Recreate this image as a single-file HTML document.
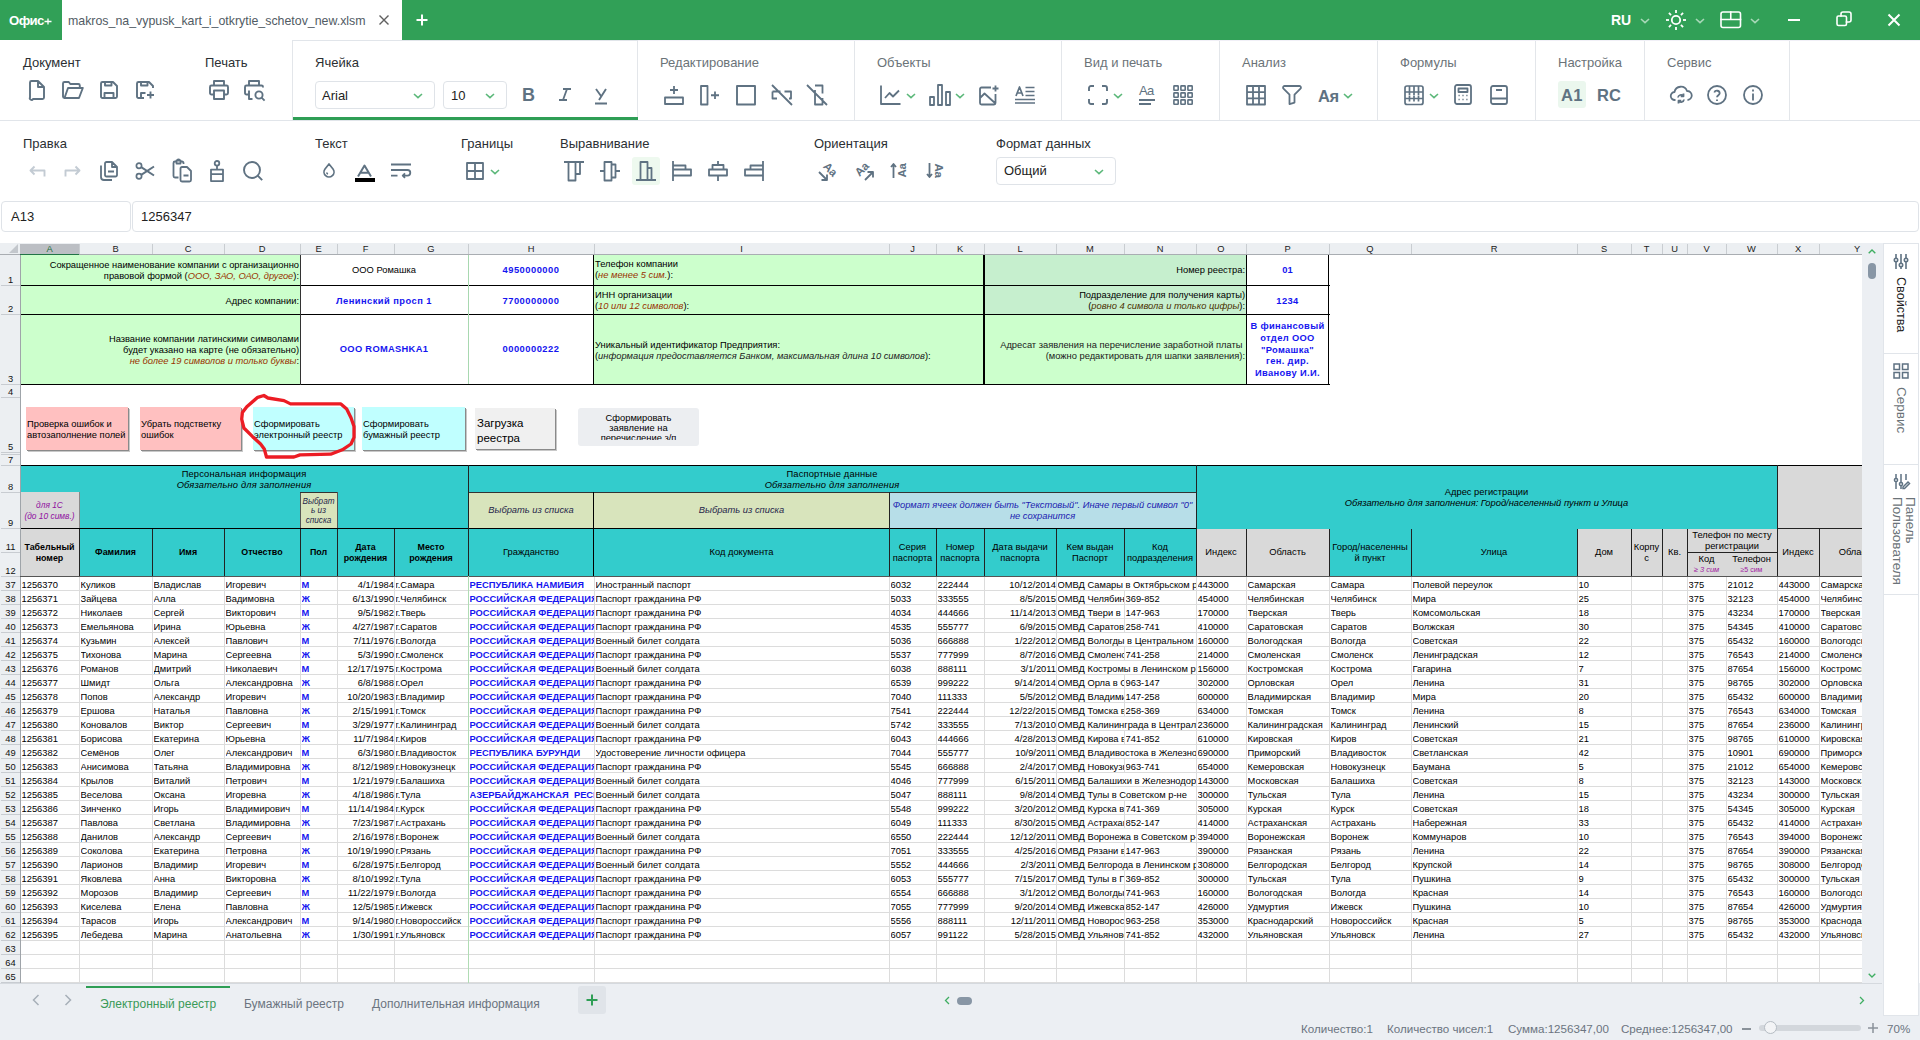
<!DOCTYPE html>
<html><head><meta charset="utf-8"><style>*{margin:0;padding:0}
body{width:1920px;height:1040px;overflow:hidden;position:relative;background:#fff;font-family:"Liberation Sans",sans-serif}
.a{position:absolute}
.t{position:absolute;white-space:nowrap}
svg.a{overflow:visible}
</style></head><body>
<div class="a" style="left:0px;top:0px;width:1920px;height:40px;background:#31a057"></div>
<div class="t" style="left:9px;top:11.5px;font-size:13.2px;font-weight:bold;color:#fff;line-height:18px;letter-spacing:-0.6px">Офис</div>
<svg class="a" style="left:44px;top:18px;" width="8" height="7" viewBox="0 0 8 7" fill="none" stroke="#5f7282" stroke-width="2" stroke-linecap="square"><path d="M4 0.5V6.5M0.5 3.5H7.5" stroke="#fff" stroke-width="1.3" stroke-linecap="butt"/></svg>
<div class="a" style="left:62px;top:0px;width:340px;height:40px;background:#fff"></div>
<div class="t" style="left:68px;top:12px;font-size:13px;color:#515b64;line-height:17px;transform-origin:0 0;transform:scaleX(0.951)">makros_na_vypusk_kart_i_otkrytie_schetov_new.xlsm</div>
<svg class="a" style="left:379px;top:15px;" width="10" height="10" viewBox="0 0 10 10" fill="none" stroke="#5f7282" stroke-width="2" stroke-linecap="square"><path d="M1 1L9 9M9 1L1 9" stroke="#606060" stroke-width="1.4"/></svg>
<svg class="a" style="left:416px;top:14px;" width="12" height="12" viewBox="0 0 12 12" fill="none" stroke="#5f7282" stroke-width="2" stroke-linecap="square"><path d="M6 0.5V11.5M0.5 6H11.5" stroke="#fff" stroke-width="2" stroke-linecap="butt"/></svg>
<div class="t" style="left:1611px;top:11px;font-size:14px;font-weight:bold;color:#fff;line-height:18px">RU</div>
<svg class="a" style="left:1640px;top:18px" width="10" height="6" viewBox="0 0 10 6"><path d="M1 1 L5 4.6 L9 1" fill="none" stroke="#a8d8b8" stroke-width="1.6"/></svg>
<svg class="a" style="left:1665px;top:9px;" width="22" height="22" viewBox="0 0 22 22" fill="none" stroke="#5f7282" stroke-width="2" stroke-linecap="square"><circle cx="11" cy="11" r="4.2" stroke="#fff" stroke-width="1.8"/><path d="M18.00 11.00L21.00 11.00" stroke="#fff" stroke-width="1.8" stroke-linecap="butt"/><path d="M15.95 15.95L18.07 18.07" stroke="#fff" stroke-width="1.8" stroke-linecap="butt"/><path d="M11.00 18.00L11.00 21.00" stroke="#fff" stroke-width="1.8" stroke-linecap="butt"/><path d="M6.05 15.95L3.93 18.07" stroke="#fff" stroke-width="1.8" stroke-linecap="butt"/><path d="M4.00 11.00L1.00 11.00" stroke="#fff" stroke-width="1.8" stroke-linecap="butt"/><path d="M6.05 6.05L3.93 3.93" stroke="#fff" stroke-width="1.8" stroke-linecap="butt"/><path d="M11.00 4.00L11.00 1.00" stroke="#fff" stroke-width="1.8" stroke-linecap="butt"/><path d="M15.95 6.05L18.07 3.93" stroke="#fff" stroke-width="1.8" stroke-linecap="butt"/></svg>
<svg class="a" style="left:1695px;top:18px" width="10" height="6" viewBox="0 0 10 6"><path d="M1 1 L5 4.6 L9 1" fill="none" stroke="#a8d8b8" stroke-width="1.6"/></svg>
<svg class="a" style="left:1720px;top:11px;" width="22" height="18" viewBox="0 0 22 18" fill="none" stroke="#5f7282" stroke-width="2" stroke-linecap="square"><rect x="1" y="1" width="19.5" height="15.5" rx="2" stroke="#fff" stroke-width="1.6"/><path d="M1 8.5H20.5M10.75 1V8.5" stroke="#fff" stroke-width="1.6"/></svg>
<svg class="a" style="left:1750px;top:18px" width="10" height="6" viewBox="0 0 10 6"><path d="M1 1 L5 4.6 L9 1" fill="none" stroke="#a8d8b8" stroke-width="1.6"/></svg>
<div class="a" style="left:1788px;top:19px;width:12px;height:2px;background:#fff"></div>
<svg class="a" style="left:1836px;top:11px;" width="16" height="16" viewBox="0 0 16 16" fill="none" stroke="#5f7282" stroke-width="2" stroke-linecap="square"><rect x="1" y="5" width="9.5" height="9.5" rx="1.5" stroke="#fff" stroke-width="1.6"/><path d="M5 5V3a2 2 0 0 1 2-2h6a2 2 0 0 1 2 2v6a2 2 0 0 1-2 2h-2.5" stroke="#fff" stroke-width="1.6"/></svg>
<svg class="a" style="left:1887px;top:13px;" width="14" height="14" viewBox="0 0 14 14" fill="none" stroke="#5f7282" stroke-width="2" stroke-linecap="square"><path d="M1.5 1.5L12.5 12.5M12.5 1.5L1.5 12.5" stroke="#fff" stroke-width="2" stroke-linecap="butt"/></svg>
<div class="a" style="left:402px;top:40px;width:1518px;height:1px;background:#f1f0f7"></div>
<div class="a" style="left:292px;top:40px;width:346px;height:1px;background:#e1e5ea"></div>
<div class="a" style="left:0px;top:120px;width:1920px;height:1px;background:#e1e5ea"></div>
<div class="a" style="left:854px;top:41px;width:1px;height:79px;background:#e3e6ea"></div>
<div class="a" style="left:1061px;top:41px;width:1px;height:79px;background:#e3e6ea"></div>
<div class="a" style="left:1219px;top:41px;width:1px;height:79px;background:#e3e6ea"></div>
<div class="a" style="left:1377px;top:41px;width:1px;height:79px;background:#e3e6ea"></div>
<div class="a" style="left:1535px;top:41px;width:1px;height:79px;background:#e3e6ea"></div>
<div class="a" style="left:1644px;top:41px;width:1px;height:79px;background:#e3e6ea"></div>
<div class="a" style="left:1789px;top:41px;width:1px;height:79px;background:#e3e6ea"></div>
<div class="a" style="left:292px;top:41px;width:1px;height:79px;background:#e3e6ea"></div>
<div class="a" style="left:637px;top:41px;width:1px;height:79px;background:#e3e6ea"></div>
<div class="a" style="left:293px;top:117px;width:345px;height:3px;background:#2e9e55"></div>
<div class="t" style="left:23px;top:55px;font-size:13px;color:#2b2f33;line-height:16px">Документ</div>
<div class="t" style="left:205px;top:55px;font-size:13px;color:#2b2f33;line-height:16px">Печать</div>
<div class="t" style="left:315px;top:55px;font-size:13px;color:#2b2f33;line-height:16px">Ячейка</div>
<div class="t" style="left:660px;top:55px;font-size:13px;color:#6b7378;line-height:16px">Редактирование</div>
<div class="t" style="left:877px;top:55px;font-size:13px;color:#6b7378;line-height:16px">Объекты</div>
<div class="t" style="left:1084px;top:55px;font-size:13px;color:#6b7378;line-height:16px">Вид и печать</div>
<div class="t" style="left:1242px;top:55px;font-size:13px;color:#6b7378;line-height:16px">Анализ</div>
<div class="t" style="left:1400px;top:55px;font-size:13px;color:#6b7378;line-height:16px">Формулы</div>
<div class="t" style="left:1558px;top:55px;font-size:13px;color:#6b7378;line-height:16px">Настройка</div>
<div class="t" style="left:1667px;top:55px;font-size:13px;color:#6b7378;line-height:16px">Сервис</div>
<div class="t" style="left:23px;top:136px;font-size:13px;color:#2b2f33;line-height:16px">Правка</div>
<div class="t" style="left:315px;top:136px;font-size:13px;color:#2b2f33;line-height:16px">Текст</div>
<div class="t" style="left:461px;top:136px;font-size:13px;color:#2b2f33;line-height:16px">Границы</div>
<div class="t" style="left:560px;top:136px;font-size:13px;color:#2b2f33;line-height:16px">Выравнивание</div>
<div class="t" style="left:814px;top:136px;font-size:13px;color:#2b2f33;line-height:16px">Ориентация</div>
<div class="t" style="left:996px;top:136px;font-size:13px;color:#2b2f33;line-height:16px">Формат данных</div>
<svg class="a" style="left:29px;top:80px" width="16" height="20" viewBox="0 0 16 20" fill="none" stroke="#5f7282" stroke-width="1.9" stroke-linejoin="round" stroke-linecap="butt" ><path d="M2.5 1h6.5l6 6v10.5a1.5 1.5 0 0 1-1.5 1.5h-9.5A1.5 1.5 0 0 1 1 17.5v-15A1.5 1.5 0 0 1 2.5 1z M9 1v6h6"/></svg>
<svg class="a" style="left:62px;top:81px" width="22" height="18" viewBox="0 0 22 18" fill="none" stroke="#5f7282" stroke-width="1.9" stroke-linejoin="round" stroke-linecap="butt" ><path d="M1 15.5v-13A1.5 1.5 0 0 1 2.5 1h4.3l1.5 2h8a1.5 1.5 0 0 1 1.5 1.5V7 M2.5 17h14.5l3.8-10H6z M1 15.5a1.5 1.5 0 0 0 1.5 1.5"/></svg>
<svg class="a" style="left:100px;top:81px" width="18" height="18" viewBox="0 0 18 18" fill="none" stroke="#5f7282" stroke-width="1.9" stroke-linejoin="round" stroke-linecap="butt" ><path d="M1 2.5A1.5 1.5 0 0 1 2.5 1h10.5l4 4v10.5a1.5 1.5 0 0 1-1.5 1.5h-13A1.5 1.5 0 0 1 1 15.5z M5 1v3.5h6.5V1 M4.5 17v-5h9v5"/></svg>
<svg class="a" style="left:136px;top:81px" width="19" height="18" viewBox="0 0 19 18" fill="none" stroke="#5f7282" stroke-width="1.9" stroke-linejoin="round" stroke-linecap="butt" ><path d="M8 17H2.5A1.5 1.5 0 0 1 1 15.5v-13A1.5 1.5 0 0 1 2.5 1h10.5l4 4v2 M5 1v3.5h6.5V1 M5 17v-5h4.5 M14.5 10.5v7 M11 14h7"/></svg>
<svg class="a" style="left:209px;top:80px" width="20" height="20" viewBox="0 0 20 20" fill="none" stroke="#5f7282" stroke-width="1.9" stroke-linejoin="round" stroke-linecap="butt" ><path d="M5 5.5V1h10v4.5 M5 14.5H2.5A1.5 1.5 0 0 1 1 13V7a1.5 1.5 0 0 1 1.5-1.5h15A1.5 1.5 0 0 1 19 7v6a1.5 1.5 0 0 1-1.5 1.5H15 M5 10.5h10V19H5z"/></svg>
<svg class="a" style="left:244px;top:80px" width="22" height="22" viewBox="0 0 22 22" fill="none" stroke="#5f7282" stroke-width="1.9" stroke-linejoin="round" stroke-linecap="butt" ><path d="M5 5.5V1h10v4.5 M5 14.5H2.5A1.5 1.5 0 0 1 1 13V7a1.5 1.5 0 0 1 1.5-1.5h15A1.5 1.5 0 0 1 19 7v0.5 M5 10.5V19h3.5"/><circle cx="15" cy="15" r="3.6"/><path d="M17.6 17.6l3 3"/></svg>
<div class="a" style="left:315px;top:81px;width:120px;height:28px;border:1px solid #dfe3e8;border-radius:4px;box-sizing:border-box;background:#fff"></div>
<div class="t" style="left:322px;top:88px;font-size:13px;color:#222;line-height:16px">Arial</div>
<svg class="a" style="left:413px;top:93px" width="10" height="6" viewBox="0 0 10 6"><path d="M1 1 L5 4.6 L9 1" fill="none" stroke="#5cb87a" stroke-width="1.6"/></svg>
<div class="a" style="left:443px;top:81px;width:64px;height:28px;border:1px solid #dfe3e8;border-radius:4px;box-sizing:border-box;background:#fff"></div>
<div class="t" style="left:451px;top:88px;font-size:13px;color:#222;line-height:16px">10</div>
<svg class="a" style="left:485px;top:93px" width="10" height="6" viewBox="0 0 10 6"><path d="M1 1 L5 4.6 L9 1" fill="none" stroke="#5cb87a" stroke-width="1.6"/></svg>
<div class="t" style="left:522px;top:85px;font-size:18px;font-weight:bold;color:#5f7282;line-height:20px">B</div>
<svg class="a" style="left:558px;top:88px" width="14" height="13" viewBox="0 0 14 13" fill="none" stroke="#5f7282" stroke-width="1.8" stroke-linejoin="round" stroke-linecap="butt" ><path d="M5 1h8 M1 12h8 M9 1L5 12"/></svg>
<svg class="a" style="left:594px;top:88px" width="14" height="17" viewBox="0 0 14 17" fill="none" stroke="#5f7282" stroke-width="1.9" stroke-linejoin="round" stroke-linecap="butt" ><path d="M2 1l5 7 M12 1L5 12 M1 15.5h12"/></svg>
<svg class="a" style="left:664px;top:85px" width="20" height="20" viewBox="0 0 20 20" fill="none" stroke="#5f7282" stroke-width="1.8" stroke-linejoin="round" stroke-linecap="butt" ><path d="M10 1v8 M6 5h8 M1 12.5h18v6.5H1z"/></svg>
<svg class="a" style="left:700px;top:85px" width="20" height="20" viewBox="0 0 20 20" fill="none" stroke="#5f7282" stroke-width="1.8" stroke-linejoin="round" stroke-linecap="butt" ><path d="M1 1h6.5v18.5H1z M15 6.5v7.5 M11 10.25h8"/></svg>
<svg class="a" style="left:736px;top:85px" width="20" height="20" viewBox="0 0 20 20" fill="none" stroke="#5f7282" stroke-width="1.9" stroke-linejoin="round" stroke-linecap="butt" ><path d="M1 1h18v18.5H1z"/></svg>
<svg class="a" style="left:771px;top:84px" width="22" height="22" viewBox="0 0 22 22" fill="none" stroke="#5f7282" stroke-width="1.8" stroke-linejoin="round" stroke-linecap="butt" ><path d="M1.5 7.5h8 M13.5 7.5h6.5v7h-2 M6 14.5H1.5v-7 M1 1l20 20"/></svg>
<svg class="a" style="left:806px;top:84px" width="22" height="22" viewBox="0 0 22 22" fill="none" stroke="#5f7282" stroke-width="1.8" stroke-linejoin="round" stroke-linecap="butt" ><path d="M9 1.5h7.5v8 M16.5 14v6.5H9V6 M1 1l20 20"/></svg>
<svg class="a" style="left:880px;top:85px" width="21" height="20" viewBox="0 0 21 20" fill="none" stroke="#5f7282" stroke-width="1.8" stroke-linejoin="round" stroke-linecap="butt" ><path d="M1 0.5v18.5h19.5 M5 13l4.5-5 3.5 3.5 6-6"/></svg>
<svg class="a" style="left:906px;top:93px" width="10" height="6" viewBox="0 0 10 6"><path d="M1 1 L5 4.6 L9 1" fill="none" stroke="#5cb87a" stroke-width="1.6"/></svg>
<svg class="a" style="left:929px;top:84px" width="22" height="22" viewBox="0 0 22 22" fill="none" stroke="#5f7282" stroke-width="1.8" stroke-linejoin="round" stroke-linecap="butt" ><path d="M1 13h4v8H1z M9 1h4v20H9z M17 8h4v13h-4z"/></svg>
<svg class="a" style="left:955px;top:93px" width="10" height="6" viewBox="0 0 10 6"><path d="M1 1 L5 4.6 L9 1" fill="none" stroke="#5cb87a" stroke-width="1.6"/></svg>
<svg class="a" style="left:979px;top:85px" width="21" height="20" viewBox="0 0 21 20" fill="none" stroke="#5f7282" stroke-width="1.8" stroke-linejoin="round" stroke-linecap="butt" ><path d="M12 2.5H2.5A1.5 1.5 0 0 0 1 4v14a1.5 1.5 0 0 0 1.5 1.5H15a1.5 1.5 0 0 0 1.5-1.5V9 M1 13l4.5-4.5 11 10 M16.5 0.5v6 M13.5 3.5h6"/></svg>
<svg class="a" style="left:1015px;top:86px" width="20" height="18" viewBox="0 0 20 18" fill="none" stroke="#5f7282" stroke-width="1.7" stroke-linejoin="round" stroke-linecap="butt" ><path d="M1 10l3.5-9 3.5 9 M2.2 7h4.6 M10.5 1.5h9 M10.5 5.5h9 M10.5 9.5h9 M0 13.5h20 M0 17h20"/></svg>
<svg class="a" style="left:1088px;top:85px" width="20" height="20" viewBox="0 0 20 20" fill="none" stroke="#5f7282" stroke-width="1.9" stroke-linejoin="round" stroke-linecap="butt" ><path d="M1 6V3a2 2 0 0 1 2-2h3 M14 1h3a2 2 0 0 1 2 2v3 M19 14v3a2 2 0 0 1-2 2h-3 M6 19H3a2 2 0 0 1-2-2v-3"/></svg>
<svg class="a" style="left:1113px;top:93px" width="10" height="6" viewBox="0 0 10 6"><path d="M1 1 L5 4.6 L9 1" fill="none" stroke="#5cb87a" stroke-width="1.6"/></svg>
<div class="t" style="left:1139px;top:84px;font-size:13px;color:#5f7282;line-height:14px;letter-spacing:-0.6px">Aa</div>
<div class="a" style="left:1139px;top:99px;width:16px;height:1.7px;background:#5f7282"></div>
<div class="a" style="left:1139px;top:103px;width:12px;height:1.7px;background:#5f7282"></div>
<svg class="a" style="left:1173px;top:85px" width="20" height="20" viewBox="0 0 20 20" fill="none" stroke="#5f7282" stroke-width="1.6" stroke-linejoin="round" stroke-linecap="butt" ><rect x="0.9" y="0.9" width="4.3" height="4.3" rx="0.5"/><rect x="0.9" y="7.9" width="4.3" height="4.3" rx="0.5"/><rect x="0.9" y="14.9" width="4.3" height="4.3" rx="0.5"/><rect x="7.9" y="0.9" width="4.3" height="4.3" rx="0.5"/><rect x="7.9" y="7.9" width="4.3" height="4.3" rx="0.5"/><rect x="7.9" y="14.9" width="4.3" height="4.3" rx="0.5"/><rect x="14.9" y="0.9" width="4.3" height="4.3" rx="0.5"/><rect x="14.9" y="7.9" width="4.3" height="4.3" rx="0.5"/><rect x="14.9" y="14.9" width="4.3" height="4.3" rx="0.5"/></svg>
<svg class="a" style="left:1246px;top:85px" width="20" height="20" viewBox="0 0 20 20" fill="none" stroke="#5f7282" stroke-width="1.8" stroke-linejoin="round" stroke-linecap="butt" stroke-linejoin="miter"><path d="M1 1h18v18.5H1z M1 7.2h18 M1 13.4h18 M7 1v18.5 M13 1v18.5"/></svg>
<svg class="a" style="left:1282px;top:85px" width="20" height="20" viewBox="0 0 20 20" fill="none" stroke="#5f7282" stroke-width="1.8" stroke-linejoin="round" stroke-linecap="butt" ><path d="M2.5 1h15a1.5 1.5 0 0 1 1 2.6l-6 6v8l-5 1.5v-9.5l-6-6A1.5 1.5 0 0 1 2.5 1z"/></svg>
<div class="t" style="left:1318px;top:86.5px;font-size:16.5px;font-weight:bold;color:#5f7282;line-height:18px;letter-spacing:-0.3px">Ая</div>
<svg class="a" style="left:1343px;top:93px" width="10" height="6" viewBox="0 0 10 6"><path d="M1 1 L5 4.6 L9 1" fill="none" stroke="#5cb87a" stroke-width="1.6"/></svg>
<svg class="a" style="left:1404px;top:85px" width="20" height="20" viewBox="0 0 20 20" fill="none" stroke="#5f7282" stroke-width="1.7" stroke-linejoin="round" stroke-linecap="butt" ><rect x="1" y="1" width="18" height="18.5" rx="2"/><path d="M1 7h18 M1 13.5h18 M5.5 1v9 M10 1v9 M14.5 1v9 M5.5 10.5v6 M10 10.5v6 M14.5 10.5v6"/></svg>
<svg class="a" style="left:1429px;top:93px" width="10" height="6" viewBox="0 0 10 6"><path d="M1 1 L5 4.6 L9 1" fill="none" stroke="#5cb87a" stroke-width="1.6"/></svg>
<svg class="a" style="left:1454px;top:84px" width="18" height="21" viewBox="0 0 18 21" fill="none" stroke="#5f7282" stroke-width="1.8" stroke-linejoin="round" stroke-linecap="butt" ><rect x="1" y="1" width="16" height="19" rx="2"/><path d="M4.5 4.5h9v3.5h-9z"/><path d="M4.5 11.5h1.2 M8.4 11.5h1.2 M12.3 11.5h1.2 M4.5 15.5h1.2 M8.4 15.5h1.2 M12.3 15.5h1.2" stroke-width="1.7"/></svg>
<svg class="a" style="left:1490px;top:85px" width="18" height="20" viewBox="0 0 18 20" fill="none" stroke="#5f7282" stroke-width="1.8" stroke-linejoin="round" stroke-linecap="butt" ><rect x="1" y="1" width="16" height="18" rx="2"/><path d="M1 13.5h16 M6 5h6"/></svg>
<div class="a" style="left:1558px;top:81px;width:28px;height:27px;background:#ebf7ee;border-radius:3px"></div>
<div class="t" style="left:1561px;top:86px;font-size:16.5px;font-weight:bold;color:#5f7282;line-height:18px;letter-spacing:0.3px">A1</div>
<div class="t" style="left:1597px;top:86px;font-size:16.5px;font-weight:bold;color:#5f7282;line-height:18px">RC</div>
<svg class="a" style="left:1670px;top:85px" width="22" height="19" viewBox="0 0 22 19" fill="none" stroke="#5f7282" stroke-width="1.8" stroke-linejoin="round" stroke-linecap="butt" ><path d="M5.5 15H5a4 4 0 0 1-0.5-8A6.5 6.5 0 0 1 17 6a4.5 4.5 0 0 1 0.5 9 M8 12.5a3 3 0 0 1 5.3-1.5 M13.5 8.5v2.8h-2.8 M14 14.5a3 3 0 0 1-5.3 1.5 M8.5 18.5v-2.8h2.8"/></svg>
<svg class="a" style="left:1707px;top:85px" width="20" height="20" viewBox="0 0 20 20" fill="none" stroke="#5f7282" stroke-width="1.8" stroke-linejoin="round" stroke-linecap="butt" ><circle cx="10" cy="10" r="9"/><path d="M7.3 7.5a2.8 2.8 0 0 1 5.4 0.8c0 1.8-2.7 2.2-2.7 4 M10 14.5v1.5"/></svg>
<svg class="a" style="left:1743px;top:85px" width="20" height="20" viewBox="0 0 20 20" fill="none" stroke="#5f7282" stroke-width="1.8" stroke-linejoin="round" stroke-linecap="butt" ><circle cx="10" cy="10" r="9"/><path d="M10 8.5v7 M10 4.5v2"/></svg>
<svg class="a" style="left:29px;top:165px" width="17" height="12" viewBox="0 0 17 12" fill="none" stroke="#c3cbd3" stroke-width="1.9" stroke-linejoin="round" stroke-linecap="butt" ><path d="M15.5 11.5V5.5H2 M5.5 1.5L1.5 5.5l4 4"/></svg>
<svg class="a" style="left:64px;top:165px" width="17" height="12" viewBox="0 0 17 12" fill="none" stroke="#c3cbd3" stroke-width="1.9" stroke-linejoin="round" stroke-linecap="butt" ><path d="M1.5 11.5V5.5H15 M11.5 1.5l4 4-4 4"/></svg>
<svg class="a" style="left:100px;top:161px" width="18" height="20" viewBox="0 0 18 20" fill="none" stroke="#5f7282" stroke-width="1.8" stroke-linejoin="round" stroke-linecap="butt" ><path d="M1 4.5V16a3 3 0 0 0 3 3h8 M5 2.5A1.5 1.5 0 0 1 6.5 1H12l5 5v8a1.5 1.5 0 0 1-1.5 1.5h-9A1.5 1.5 0 0 1 5 14z M12 1v5h5 M8 10.5h6"/></svg>
<svg class="a" style="left:135px;top:162px" width="20" height="18" viewBox="0 0 20 18" fill="none" stroke="#5f7282" stroke-width="1.7" stroke-linejoin="round" stroke-linecap="butt" ><circle cx="4" cy="3.8" r="2.6"/><circle cx="4" cy="14.2" r="2.6"/><path d="M6.2 5.2L19 13.5 M6.2 12.8L19 4.5" stroke-width="2"/></svg>
<svg class="a" style="left:170px;top:159px" width="22" height="24" viewBox="0 0 22 24" fill="none" stroke="#5f7282" stroke-width="1.8" stroke-linejoin="round" stroke-linecap="butt" ><path d="M13.5 5V4a1.5 1.5 0 0 0-1.5-1.5h-1.5a2 2 0 0 0-4 0H5A1.5 1.5 0 0 0 3.5 4v13A1.5 1.5 0 0 0 5 18.5h3.5 M6.5 1.5h4v3h-4z M10.5 9.5A1.5 1.5 0 0 1 12 8h5l4 4v9a1.5 1.5 0 0 1-1.5 1.5H12a1.5 1.5 0 0 1-1.5-1.5z M13.5 16.5h5"/></svg>
<svg class="a" style="left:210px;top:160px" width="14" height="22" viewBox="0 0 14 22" fill="none" stroke="#5f7282" stroke-width="1.8" stroke-linejoin="round" stroke-linecap="butt" ><circle cx="7" cy="3.3" r="2.3"/><path d="M7 5.6v4 M1 9.6h12v4.5H1z M1 14.1v7h12v-7"/></svg>
<svg class="a" style="left:243px;top:161px" width="20" height="20" viewBox="0 0 20 20" fill="none" stroke="#5f7282" stroke-width="1.9" stroke-linejoin="round" stroke-linecap="butt" ><circle cx="9" cy="9" r="8"/><path d="M14.7 14.7l4.5 4.5"/></svg>
<svg class="a" style="left:323px;top:163px" width="12" height="14" viewBox="0 0 12 14" fill="none" stroke="#5f7282" stroke-width="1.7" stroke-linejoin="round" stroke-linecap="butt" ><path d="M6 1L2 6a5 5 0 1 0 8 0z M5 11a1.6 1.6 0 0 1-1.2-1.5"/></svg>
<svg class="a" style="left:357px;top:165px" width="15" height="12" viewBox="0 0 15 12" fill="none" stroke="#5f7282" stroke-width="2" stroke-linejoin="round" stroke-linecap="butt" ><path d="M1 11.5L7.5 0.5 14 11.5 M3.3 7.7h8.4"/></svg>
<div class="a" style="left:355px;top:178px;width:20px;height:4px;background:#000"></div>
<svg class="a" style="left:391px;top:163px" width="20" height="15" viewBox="0 0 20 15" fill="none" stroke="#5f7282" stroke-width="1.8" stroke-linejoin="round" stroke-linecap="butt" ><path d="M0 1.5h20 M0 7h16.5a2.8 2.8 0 0 1 0 5.6H12 M0 12.6h6.5 M14 10.3l-2.3 2.3 2.3 2.3"/></svg>
<svg class="a" style="left:466px;top:162px" width="18" height="18" viewBox="0 0 18 18" fill="none" stroke="#5f7282" stroke-width="1.8" stroke-linejoin="round" stroke-linecap="butt" stroke-linejoin="miter"><path d="M1 1h16v16H1z M1 9h16 M9 1v16"/></svg>
<svg class="a" style="left:490px;top:169px" width="10" height="6" viewBox="0 0 10 6"><path d="M1 1 L5 4.6 L9 1" fill="none" stroke="#5cb87a" stroke-width="1.6"/></svg>
<div class="a" style="left:632px;top:157px;width:28px;height:28px;background:#eef9ef;border-radius:3px"></div>
<svg class="a" style="left:564px;top:161px" width="20" height="20" viewBox="0 0 20 20" fill="none" stroke="#5f7282" stroke-width="1.8" stroke-linejoin="round" stroke-linecap="butt" stroke-linejoin="miter"><path d="M0 1h20 M4.5 1v18.5h7V1 M11.5 13h4.5V1"/></svg>
<svg class="a" style="left:600px;top:161px" width="20" height="20" viewBox="0 0 20 20" fill="none" stroke="#5f7282" stroke-width="1.8" stroke-linejoin="round" stroke-linecap="butt" stroke-linejoin="miter"><path d="M0 10h4 M15.5 10h4.5 M4.5 1h7v18.5h-7z M11.5 3.5h4v13h-4"/></svg>
<svg class="a" style="left:636px;top:161px" width="20" height="20" viewBox="0 0 20 20" fill="none" stroke="#5f7282" stroke-width="1.8" stroke-linejoin="round" stroke-linecap="butt" stroke-linejoin="miter"><path d="M0 19h20 M4.5 19V1h7v18 M11.5 7h4v12"/></svg>
<svg class="a" style="left:672px;top:161px" width="20" height="20" viewBox="0 0 20 20" fill="none" stroke="#5f7282" stroke-width="1.8" stroke-linejoin="round" stroke-linecap="butt" stroke-linejoin="miter"><path d="M1 0v20 M1 4.5h12.5v4H1 M1 8.5h18v6H1"/></svg>
<svg class="a" style="left:708px;top:161px" width="20" height="20" viewBox="0 0 20 20" fill="none" stroke="#5f7282" stroke-width="1.8" stroke-linejoin="round" stroke-linecap="butt" stroke-linejoin="miter"><path d="M10 0v4 M10 14.5v5.5 M4.5 4h11v4.5h-11z M1 8.5h18v6H1z"/></svg>
<svg class="a" style="left:744px;top:161px" width="20" height="20" viewBox="0 0 20 20" fill="none" stroke="#5f7282" stroke-width="1.8" stroke-linejoin="round" stroke-linecap="butt" stroke-linejoin="miter"><path d="M19 0v20 M19 4.5H6.5v4H19 M19 8.5H1v6h18"/></svg>
<div class="a" style="left:823px;top:162px;width:14px;height:14px;display:flex;align-items:center;justify-content:center"><span style="display:block;transform:rotate(45deg);font-size:11.5px;line-height:11px;color:#5f7282;font-weight:bold;letter-spacing:-0.3px">Aa</span></div>
<svg class="a" style="left:818px;top:171px" width="10" height="10" viewBox="0 0 10 10" fill="none" stroke="#5f7282" stroke-width="1.8" stroke-linejoin="round" stroke-linecap="butt" ><path d="M1 1l8 8 M9 3.5V9H3.5"/></svg>
<div class="a" style="left:855px;top:162px;width:14px;height:14px;display:flex;align-items:center;justify-content:center"><span style="display:block;transform:rotate(-45deg);font-size:11.5px;line-height:11px;color:#5f7282;font-weight:bold;letter-spacing:-0.3px">Aa</span></div>
<svg class="a" style="left:864px;top:171px" width="10" height="10" viewBox="0 0 10 10" fill="none" stroke="#5f7282" stroke-width="1.8" stroke-linejoin="round" stroke-linecap="butt" ><path d="M1 9l8-8 M3.5 1H9v5.5"/></svg>
<svg class="a" style="left:890px;top:163px" width="7" height="15" viewBox="0 0 7 15" fill="none" stroke="#5f7282" stroke-width="1.8" stroke-linejoin="round" stroke-linecap="butt" ><path d="M3.5 2v13 M1 4l2.5-3 2.5 3"/></svg>
<div class="a" style="left:895px;top:163px;width:14px;height:14px;display:flex;align-items:center;justify-content:center"><span style="display:block;transform:rotate(-90deg);font-size:11.5px;line-height:11px;color:#5f7282;font-weight:bold;letter-spacing:-0.3px">Aa</span></div>
<svg class="a" style="left:926px;top:163px" width="7" height="15" viewBox="0 0 7 15" fill="none" stroke="#5f7282" stroke-width="1.8" stroke-linejoin="round" stroke-linecap="butt" ><path d="M3.5 0v13 M1 11l2.5 3 2.5-3"/></svg>
<div class="a" style="left:931px;top:163px;width:14px;height:14px;display:flex;align-items:center;justify-content:center"><span style="display:block;transform:rotate(90deg);font-size:11.5px;line-height:11px;color:#5f7282;font-weight:bold;letter-spacing:-0.3px">Aa</span></div>
<div class="a" style="left:996px;top:157px;width:120px;height:28px;border:1px solid #dfe3e8;border-radius:4px;box-sizing:border-box;background:#fff"></div>
<div class="t" style="left:1004px;top:163px;font-size:13px;color:#222;line-height:16px">Общий</div>
<svg class="a" style="left:1094px;top:169px" width="10" height="6" viewBox="0 0 10 6"><path d="M1 1 L5 4.6 L9 1" fill="none" stroke="#5cb87a" stroke-width="1.6"/></svg>
<div class="a" style="left:1px;top:201px;width:130px;height:31px;border:1px solid #dfe3e8;border-radius:4px;box-sizing:border-box;background:#fff"></div>
<div class="t" style="left:11px;top:209px;font-size:13px;color:#222;line-height:16px">A13</div>
<div class="a" style="left:132px;top:201px;width:1787px;height:31px;border:1px solid #dfe3e8;border-radius:4px;box-sizing:border-box;background:#fff"></div>
<div class="t" style="left:141px;top:209px;font-size:13px;color:#222;line-height:16px">1256347</div>
<div class="a" style="left:0px;top:243px;width:1862px;height:740px;background:#fff;overflow:hidden"></div>
<div class="a" style="left:0px;top:243px;width:1862px;height:12px;background:#eceff2"></div>
<div class="a" style="left:0px;top:254px;width:1862px;height:1px;background:#a9adb2"></div>
<div class="a" style="left:20px;top:244px;width:59px;height:10px;background:#bcbfc4"></div>
<div class="a" style="left:20px;top:254px;width:59px;height:1.5px;background:#217346"></div>
<div class="a" style="left:79px;top:244px;width:1px;height:10px;background:#c9cdd1"></div>
<div class="a" style="left:20px;top:243px;width:59px;height:12px;overflow:hidden;text-align:center;font-size:9.33px;line-height:13px;color:#1e6e3c">A</div>
<div class="a" style="left:152px;top:244px;width:1px;height:10px;background:#c9cdd1"></div>
<div class="a" style="left:79px;top:243px;width:73px;height:12px;overflow:hidden;text-align:center;font-size:9.33px;line-height:13px;color:#222">B</div>
<div class="a" style="left:224px;top:244px;width:1px;height:10px;background:#c9cdd1"></div>
<div class="a" style="left:152px;top:243px;width:72px;height:12px;overflow:hidden;text-align:center;font-size:9.33px;line-height:13px;color:#222">C</div>
<div class="a" style="left:300px;top:244px;width:1px;height:10px;background:#c9cdd1"></div>
<div class="a" style="left:224px;top:243px;width:76px;height:12px;overflow:hidden;text-align:center;font-size:9.33px;line-height:13px;color:#222">D</div>
<div class="a" style="left:337px;top:244px;width:1px;height:10px;background:#c9cdd1"></div>
<div class="a" style="left:300px;top:243px;width:37px;height:12px;overflow:hidden;text-align:center;font-size:9.33px;line-height:13px;color:#222">E</div>
<div class="a" style="left:394px;top:244px;width:1px;height:10px;background:#c9cdd1"></div>
<div class="a" style="left:337px;top:243px;width:57px;height:12px;overflow:hidden;text-align:center;font-size:9.33px;line-height:13px;color:#222">F</div>
<div class="a" style="left:468px;top:244px;width:1px;height:10px;background:#c9cdd1"></div>
<div class="a" style="left:394px;top:243px;width:74px;height:12px;overflow:hidden;text-align:center;font-size:9.33px;line-height:13px;color:#222">G</div>
<div class="a" style="left:594px;top:244px;width:1px;height:10px;background:#c9cdd1"></div>
<div class="a" style="left:468px;top:243px;width:126px;height:12px;overflow:hidden;text-align:center;font-size:9.33px;line-height:13px;color:#222">H</div>
<div class="a" style="left:889px;top:244px;width:1px;height:10px;background:#c9cdd1"></div>
<div class="a" style="left:594px;top:243px;width:295px;height:12px;overflow:hidden;text-align:center;font-size:9.33px;line-height:13px;color:#222">I</div>
<div class="a" style="left:936px;top:244px;width:1px;height:10px;background:#c9cdd1"></div>
<div class="a" style="left:889px;top:243px;width:47px;height:12px;overflow:hidden;text-align:center;font-size:9.33px;line-height:13px;color:#222">J</div>
<div class="a" style="left:984px;top:244px;width:1px;height:10px;background:#c9cdd1"></div>
<div class="a" style="left:936px;top:243px;width:48px;height:12px;overflow:hidden;text-align:center;font-size:9.33px;line-height:13px;color:#222">K</div>
<div class="a" style="left:1056px;top:244px;width:1px;height:10px;background:#c9cdd1"></div>
<div class="a" style="left:984px;top:243px;width:72px;height:12px;overflow:hidden;text-align:center;font-size:9.33px;line-height:13px;color:#222">L</div>
<div class="a" style="left:1124px;top:244px;width:1px;height:10px;background:#c9cdd1"></div>
<div class="a" style="left:1056px;top:243px;width:68px;height:12px;overflow:hidden;text-align:center;font-size:9.33px;line-height:13px;color:#222">M</div>
<div class="a" style="left:1196px;top:244px;width:1px;height:10px;background:#c9cdd1"></div>
<div class="a" style="left:1124px;top:243px;width:72px;height:12px;overflow:hidden;text-align:center;font-size:9.33px;line-height:13px;color:#222">N</div>
<div class="a" style="left:1246px;top:244px;width:1px;height:10px;background:#c9cdd1"></div>
<div class="a" style="left:1196px;top:243px;width:50px;height:12px;overflow:hidden;text-align:center;font-size:9.33px;line-height:13px;color:#222">O</div>
<div class="a" style="left:1329px;top:244px;width:1px;height:10px;background:#c9cdd1"></div>
<div class="a" style="left:1246px;top:243px;width:83px;height:12px;overflow:hidden;text-align:center;font-size:9.33px;line-height:13px;color:#222">P</div>
<div class="a" style="left:1411px;top:244px;width:1px;height:10px;background:#c9cdd1"></div>
<div class="a" style="left:1329px;top:243px;width:82px;height:12px;overflow:hidden;text-align:center;font-size:9.33px;line-height:13px;color:#222">Q</div>
<div class="a" style="left:1577px;top:244px;width:1px;height:10px;background:#c9cdd1"></div>
<div class="a" style="left:1411px;top:243px;width:166px;height:12px;overflow:hidden;text-align:center;font-size:9.33px;line-height:13px;color:#222">R</div>
<div class="a" style="left:1631px;top:244px;width:1px;height:10px;background:#c9cdd1"></div>
<div class="a" style="left:1577px;top:243px;width:54px;height:12px;overflow:hidden;text-align:center;font-size:9.33px;line-height:13px;color:#222">S</div>
<div class="a" style="left:1662px;top:244px;width:1px;height:10px;background:#c9cdd1"></div>
<div class="a" style="left:1631px;top:243px;width:31px;height:12px;overflow:hidden;text-align:center;font-size:9.33px;line-height:13px;color:#222">T</div>
<div class="a" style="left:1687px;top:244px;width:1px;height:10px;background:#c9cdd1"></div>
<div class="a" style="left:1662px;top:243px;width:25px;height:12px;overflow:hidden;text-align:center;font-size:9.33px;line-height:13px;color:#222">U</div>
<div class="a" style="left:1726px;top:244px;width:1px;height:10px;background:#c9cdd1"></div>
<div class="a" style="left:1687px;top:243px;width:39px;height:12px;overflow:hidden;text-align:center;font-size:9.33px;line-height:13px;color:#222">V</div>
<div class="a" style="left:1777px;top:244px;width:1px;height:10px;background:#c9cdd1"></div>
<div class="a" style="left:1726px;top:243px;width:51px;height:12px;overflow:hidden;text-align:center;font-size:9.33px;line-height:13px;color:#222">W</div>
<div class="a" style="left:1819px;top:244px;width:1px;height:10px;background:#c9cdd1"></div>
<div class="a" style="left:1777px;top:243px;width:42px;height:12px;overflow:hidden;text-align:center;font-size:9.33px;line-height:13px;color:#222">X</div>
<div class="a" style="left:1819px;top:243px;width:43px;height:12px;overflow:hidden"><div class="a" style="left:0;top:0;width:76px;height:12px;text-align:center;font-size:9.33px;line-height:13px;color:#222">Y</div></div>
<svg class="a" style="left:8px;top:243px" width="11" height="11"><path d="M10 1V10H1z" fill="#c3c7cc"/></svg>
<div class="a" style="left:0px;top:255px;width:20px;height:728px;background:#eceff2"></div>
<div class="a" style="left:20px;top:255px;width:1px;height:728px;background:#9fa4a9"></div>
<div class="a" style="left:1px;top:285px;width:19px;height:1px;background:#c8ccd1"></div>
<div class="a" style="left:0.5px;top:274px;width:20px;height:12px;text-align:center;font-size:9.33px;line-height:12px;color:#111">1</div>
<div class="a" style="left:1px;top:314px;width:19px;height:1px;background:#c8ccd1"></div>
<div class="a" style="left:0.5px;top:303px;width:20px;height:12px;text-align:center;font-size:9.33px;line-height:12px;color:#111">2</div>
<div class="a" style="left:1px;top:384px;width:19px;height:1px;background:#c8ccd1"></div>
<div class="a" style="left:0.5px;top:373px;width:20px;height:12px;text-align:center;font-size:9.33px;line-height:12px;color:#111">3</div>
<div class="a" style="left:1px;top:397px;width:19px;height:1px;background:#c8ccd1"></div>
<div class="a" style="left:0.5px;top:386px;width:20px;height:12px;text-align:center;font-size:9.33px;line-height:12px;color:#111">4</div>
<div class="a" style="left:1px;top:452px;width:19px;height:1px;background:#c8ccd1"></div>
<div class="a" style="left:0.5px;top:441px;width:20px;height:12px;text-align:center;font-size:9.33px;line-height:12px;color:#111">5</div>
<div class="a" style="left:1px;top:465px;width:19px;height:1px;background:#c8ccd1"></div>
<div class="a" style="left:0.5px;top:454px;width:20px;height:12px;text-align:center;font-size:9.33px;line-height:12px;color:#111">7</div>
<div class="a" style="left:1px;top:492px;width:19px;height:1px;background:#c8ccd1"></div>
<div class="a" style="left:0.5px;top:481px;width:20px;height:12px;text-align:center;font-size:9.33px;line-height:12px;color:#111">8</div>
<div class="a" style="left:1px;top:528px;width:19px;height:1px;background:#c8ccd1"></div>
<div class="a" style="left:0.5px;top:517px;width:20px;height:12px;text-align:center;font-size:9.33px;line-height:12px;color:#111">9</div>
<div class="a" style="left:1px;top:552px;width:19px;height:1px;background:#c8ccd1"></div>
<div class="a" style="left:0.5px;top:541px;width:20px;height:12px;text-align:center;font-size:9.33px;line-height:12px;color:#111">11</div>
<div class="a" style="left:1px;top:576px;width:19px;height:1px;background:#c8ccd1"></div>
<div class="a" style="left:0.5px;top:565px;width:20px;height:12px;text-align:center;font-size:9.33px;line-height:12px;color:#111">12</div>
<div class="a" style="left:1px;top:590px;width:19px;height:1px;background:#c8ccd1"></div>
<div class="a" style="left:0.5px;top:579px;width:20px;height:12px;text-align:center;font-size:9.33px;line-height:12px;color:#111">37</div>
<div class="a" style="left:1px;top:604px;width:19px;height:1px;background:#c8ccd1"></div>
<div class="a" style="left:0.5px;top:593px;width:20px;height:12px;text-align:center;font-size:9.33px;line-height:12px;color:#111">38</div>
<div class="a" style="left:1px;top:618px;width:19px;height:1px;background:#c8ccd1"></div>
<div class="a" style="left:0.5px;top:607px;width:20px;height:12px;text-align:center;font-size:9.33px;line-height:12px;color:#111">39</div>
<div class="a" style="left:1px;top:632px;width:19px;height:1px;background:#c8ccd1"></div>
<div class="a" style="left:0.5px;top:621px;width:20px;height:12px;text-align:center;font-size:9.33px;line-height:12px;color:#111">40</div>
<div class="a" style="left:1px;top:646px;width:19px;height:1px;background:#c8ccd1"></div>
<div class="a" style="left:0.5px;top:635px;width:20px;height:12px;text-align:center;font-size:9.33px;line-height:12px;color:#111">41</div>
<div class="a" style="left:1px;top:660px;width:19px;height:1px;background:#c8ccd1"></div>
<div class="a" style="left:0.5px;top:649px;width:20px;height:12px;text-align:center;font-size:9.33px;line-height:12px;color:#111">42</div>
<div class="a" style="left:1px;top:674px;width:19px;height:1px;background:#c8ccd1"></div>
<div class="a" style="left:0.5px;top:663px;width:20px;height:12px;text-align:center;font-size:9.33px;line-height:12px;color:#111">43</div>
<div class="a" style="left:1px;top:688px;width:19px;height:1px;background:#c8ccd1"></div>
<div class="a" style="left:0.5px;top:677px;width:20px;height:12px;text-align:center;font-size:9.33px;line-height:12px;color:#111">44</div>
<div class="a" style="left:1px;top:702px;width:19px;height:1px;background:#c8ccd1"></div>
<div class="a" style="left:0.5px;top:691px;width:20px;height:12px;text-align:center;font-size:9.33px;line-height:12px;color:#111">45</div>
<div class="a" style="left:1px;top:716px;width:19px;height:1px;background:#c8ccd1"></div>
<div class="a" style="left:0.5px;top:705px;width:20px;height:12px;text-align:center;font-size:9.33px;line-height:12px;color:#111">46</div>
<div class="a" style="left:1px;top:730px;width:19px;height:1px;background:#c8ccd1"></div>
<div class="a" style="left:0.5px;top:719px;width:20px;height:12px;text-align:center;font-size:9.33px;line-height:12px;color:#111">47</div>
<div class="a" style="left:1px;top:744px;width:19px;height:1px;background:#c8ccd1"></div>
<div class="a" style="left:0.5px;top:733px;width:20px;height:12px;text-align:center;font-size:9.33px;line-height:12px;color:#111">48</div>
<div class="a" style="left:1px;top:758px;width:19px;height:1px;background:#c8ccd1"></div>
<div class="a" style="left:0.5px;top:747px;width:20px;height:12px;text-align:center;font-size:9.33px;line-height:12px;color:#111">49</div>
<div class="a" style="left:1px;top:772px;width:19px;height:1px;background:#c8ccd1"></div>
<div class="a" style="left:0.5px;top:761px;width:20px;height:12px;text-align:center;font-size:9.33px;line-height:12px;color:#111">50</div>
<div class="a" style="left:1px;top:786px;width:19px;height:1px;background:#c8ccd1"></div>
<div class="a" style="left:0.5px;top:775px;width:20px;height:12px;text-align:center;font-size:9.33px;line-height:12px;color:#111">51</div>
<div class="a" style="left:1px;top:800px;width:19px;height:1px;background:#c8ccd1"></div>
<div class="a" style="left:0.5px;top:789px;width:20px;height:12px;text-align:center;font-size:9.33px;line-height:12px;color:#111">52</div>
<div class="a" style="left:1px;top:814px;width:19px;height:1px;background:#c8ccd1"></div>
<div class="a" style="left:0.5px;top:803px;width:20px;height:12px;text-align:center;font-size:9.33px;line-height:12px;color:#111">53</div>
<div class="a" style="left:1px;top:828px;width:19px;height:1px;background:#c8ccd1"></div>
<div class="a" style="left:0.5px;top:817px;width:20px;height:12px;text-align:center;font-size:9.33px;line-height:12px;color:#111">54</div>
<div class="a" style="left:1px;top:842px;width:19px;height:1px;background:#c8ccd1"></div>
<div class="a" style="left:0.5px;top:831px;width:20px;height:12px;text-align:center;font-size:9.33px;line-height:12px;color:#111">55</div>
<div class="a" style="left:1px;top:856px;width:19px;height:1px;background:#c8ccd1"></div>
<div class="a" style="left:0.5px;top:845px;width:20px;height:12px;text-align:center;font-size:9.33px;line-height:12px;color:#111">56</div>
<div class="a" style="left:1px;top:870px;width:19px;height:1px;background:#c8ccd1"></div>
<div class="a" style="left:0.5px;top:859px;width:20px;height:12px;text-align:center;font-size:9.33px;line-height:12px;color:#111">57</div>
<div class="a" style="left:1px;top:884px;width:19px;height:1px;background:#c8ccd1"></div>
<div class="a" style="left:0.5px;top:873px;width:20px;height:12px;text-align:center;font-size:9.33px;line-height:12px;color:#111">58</div>
<div class="a" style="left:1px;top:898px;width:19px;height:1px;background:#c8ccd1"></div>
<div class="a" style="left:0.5px;top:887px;width:20px;height:12px;text-align:center;font-size:9.33px;line-height:12px;color:#111">59</div>
<div class="a" style="left:1px;top:912px;width:19px;height:1px;background:#c8ccd1"></div>
<div class="a" style="left:0.5px;top:901px;width:20px;height:12px;text-align:center;font-size:9.33px;line-height:12px;color:#111">60</div>
<div class="a" style="left:1px;top:926px;width:19px;height:1px;background:#c8ccd1"></div>
<div class="a" style="left:0.5px;top:915px;width:20px;height:12px;text-align:center;font-size:9.33px;line-height:12px;color:#111">61</div>
<div class="a" style="left:1px;top:940px;width:19px;height:1px;background:#c8ccd1"></div>
<div class="a" style="left:0.5px;top:929px;width:20px;height:12px;text-align:center;font-size:9.33px;line-height:12px;color:#111">62</div>
<div class="a" style="left:1px;top:954px;width:19px;height:1px;background:#c8ccd1"></div>
<div class="a" style="left:0.5px;top:943px;width:20px;height:12px;text-align:center;font-size:9.33px;line-height:12px;color:#111">63</div>
<div class="a" style="left:1px;top:968px;width:19px;height:1px;background:#c8ccd1"></div>
<div class="a" style="left:0.5px;top:957px;width:20px;height:12px;text-align:center;font-size:9.33px;line-height:12px;color:#111">64</div>
<div class="a" style="left:1px;top:982px;width:19px;height:1px;background:#c8ccd1"></div>
<div class="a" style="left:0.5px;top:971px;width:20px;height:12px;text-align:center;font-size:9.33px;line-height:12px;color:#111">65</div>
<div class="a" style="left:1px;top:454px;width:19px;height:1px;background:#c8ccd1"></div>
<div class="a" style="left:1px;top:528px;width:19px;height:1px;background:#c8ccd1"></div>
<div class="a" style="left:21px;top:590px;width:1841px;height:1px;background:#dcdcdc"></div>
<div class="a" style="left:21px;top:604px;width:1841px;height:1px;background:#dcdcdc"></div>
<div class="a" style="left:21px;top:618px;width:1841px;height:1px;background:#dcdcdc"></div>
<div class="a" style="left:21px;top:632px;width:1841px;height:1px;background:#dcdcdc"></div>
<div class="a" style="left:21px;top:646px;width:1841px;height:1px;background:#dcdcdc"></div>
<div class="a" style="left:21px;top:660px;width:1841px;height:1px;background:#dcdcdc"></div>
<div class="a" style="left:21px;top:674px;width:1841px;height:1px;background:#dcdcdc"></div>
<div class="a" style="left:21px;top:688px;width:1841px;height:1px;background:#dcdcdc"></div>
<div class="a" style="left:21px;top:702px;width:1841px;height:1px;background:#dcdcdc"></div>
<div class="a" style="left:21px;top:716px;width:1841px;height:1px;background:#dcdcdc"></div>
<div class="a" style="left:21px;top:730px;width:1841px;height:1px;background:#dcdcdc"></div>
<div class="a" style="left:21px;top:744px;width:1841px;height:1px;background:#dcdcdc"></div>
<div class="a" style="left:21px;top:758px;width:1841px;height:1px;background:#dcdcdc"></div>
<div class="a" style="left:21px;top:772px;width:1841px;height:1px;background:#dcdcdc"></div>
<div class="a" style="left:21px;top:786px;width:1841px;height:1px;background:#dcdcdc"></div>
<div class="a" style="left:21px;top:800px;width:1841px;height:1px;background:#dcdcdc"></div>
<div class="a" style="left:21px;top:814px;width:1841px;height:1px;background:#dcdcdc"></div>
<div class="a" style="left:21px;top:828px;width:1841px;height:1px;background:#dcdcdc"></div>
<div class="a" style="left:21px;top:842px;width:1841px;height:1px;background:#dcdcdc"></div>
<div class="a" style="left:21px;top:856px;width:1841px;height:1px;background:#dcdcdc"></div>
<div class="a" style="left:21px;top:870px;width:1841px;height:1px;background:#dcdcdc"></div>
<div class="a" style="left:21px;top:884px;width:1841px;height:1px;background:#dcdcdc"></div>
<div class="a" style="left:21px;top:898px;width:1841px;height:1px;background:#dcdcdc"></div>
<div class="a" style="left:21px;top:912px;width:1841px;height:1px;background:#dcdcdc"></div>
<div class="a" style="left:21px;top:926px;width:1841px;height:1px;background:#dcdcdc"></div>
<div class="a" style="left:21px;top:940px;width:1841px;height:1px;background:#dcdcdc"></div>
<div class="a" style="left:21px;top:954px;width:1841px;height:1px;background:#dcdcdc"></div>
<div class="a" style="left:21px;top:968px;width:1841px;height:1px;background:#dcdcdc"></div>
<div class="a" style="left:21px;top:982px;width:1841px;height:1px;background:#dcdcdc"></div>
<div class="a" style="left:79px;top:576px;width:1px;height:407px;background:#dcdcdc"></div>
<div class="a" style="left:152px;top:576px;width:1px;height:407px;background:#dcdcdc"></div>
<div class="a" style="left:224px;top:576px;width:1px;height:407px;background:#dcdcdc"></div>
<div class="a" style="left:300px;top:576px;width:1px;height:407px;background:#dcdcdc"></div>
<div class="a" style="left:337px;top:576px;width:1px;height:407px;background:#dcdcdc"></div>
<div class="a" style="left:394px;top:576px;width:1px;height:407px;background:#dcdcdc"></div>
<div class="a" style="left:468px;top:576px;width:1px;height:407px;background:#dcdcdc"></div>
<div class="a" style="left:594px;top:576px;width:1px;height:407px;background:#dcdcdc"></div>
<div class="a" style="left:889px;top:576px;width:1px;height:407px;background:#dcdcdc"></div>
<div class="a" style="left:936px;top:576px;width:1px;height:407px;background:#dcdcdc"></div>
<div class="a" style="left:984px;top:576px;width:1px;height:407px;background:#dcdcdc"></div>
<div class="a" style="left:1056px;top:576px;width:1px;height:407px;background:#dcdcdc"></div>
<div class="a" style="left:1124px;top:576px;width:1px;height:407px;background:#dcdcdc"></div>
<div class="a" style="left:1196px;top:576px;width:1px;height:407px;background:#dcdcdc"></div>
<div class="a" style="left:1246px;top:576px;width:1px;height:407px;background:#dcdcdc"></div>
<div class="a" style="left:1329px;top:576px;width:1px;height:407px;background:#dcdcdc"></div>
<div class="a" style="left:1411px;top:576px;width:1px;height:407px;background:#dcdcdc"></div>
<div class="a" style="left:1577px;top:576px;width:1px;height:407px;background:#dcdcdc"></div>
<div class="a" style="left:1631px;top:576px;width:1px;height:407px;background:#dcdcdc"></div>
<div class="a" style="left:1662px;top:576px;width:1px;height:407px;background:#dcdcdc"></div>
<div class="a" style="left:1687px;top:576px;width:1px;height:407px;background:#dcdcdc"></div>
<div class="a" style="left:1726px;top:576px;width:1px;height:407px;background:#dcdcdc"></div>
<div class="a" style="left:1777px;top:576px;width:1px;height:407px;background:#dcdcdc"></div>
<div class="a" style="left:1819px;top:576px;width:1px;height:407px;background:#dcdcdc"></div>
<div class="a" style="left:21px;top:255px;width:279px;height:129px;background:#ccffcc"></div>
<div class="a" style="left:594px;top:255px;width:390px;height:129px;background:#ccffcc"></div>
<div class="a" style="left:984px;top:255px;width:262px;height:59px;background:#c6efce"></div>
<div class="a" style="left:984px;top:314px;width:262px;height:70px;background:#ccffcc"></div>
<div class="a" style="left:301px;top:255px;width:167px;height:129px;background:#fff"></div>
<div class="a" style="left:469px;top:255px;width:124px;height:129px;background:#fff"></div>
<div class="a" style="left:1247px;top:255px;width:82px;height:129px;background:#fff"></div>
<div class="a" style="left:21px;top:285px;width:1309px;height:1px;background:#000"></div>
<div class="a" style="left:21px;top:314px;width:1309px;height:1px;background:#000"></div>
<div class="a" style="left:21px;top:384px;width:1309px;height:1px;background:#000"></div>
<div class="a" style="left:300px;top:255px;width:1px;height:130px;background:#333"></div>
<div class="a" style="left:468px;top:255px;width:1px;height:129px;background:#a8d8b0"></div>
<div class="a" style="left:593px;top:255px;width:1px;height:130px;background:#000"></div>
<div class="a" style="left:983px;top:255px;width:2px;height:130px;background:#000"></div>
<div class="a" style="left:1246px;top:255px;width:1px;height:130px;background:#000"></div>
<div class="a" style="left:1328px;top:255px;width:1px;height:130px;background:#000"></div>
<div class="a" style="left:20px;top:255px;width:280px;height:30px;overflow:hidden;"><div class="a" style="left:0;top:-3px;width:280px;height:30px;display:flex;justify-content:flex-end;align-items:flex-end;"><div style="font-size:9.33px;line-height:11px;white-space:pre;text-align:right;padding:0 1px;color:#000;">Сокращенное наименование компании с организационно
правовой формой (<i style="color:#993300">ООО, ЗАО, ОАО, другое</i>):</div></div></div>
<div class="a" style="left:20px;top:285px;width:280px;height:29px;overflow:hidden;"><div class="a" style="left:0;top:-7px;width:280px;height:29px;display:flex;justify-content:flex-end;align-items:flex-end;"><div style="font-size:9.33px;line-height:11px;white-space:pre;text-align:right;padding:0 1px;color:#000;">Адрес компании:</div></div></div>
<div class="a" style="left:20px;top:314px;width:280px;height:70px;overflow:hidden;"><div class="a" style="left:0;top:-17px;width:280px;height:70px;display:flex;justify-content:flex-end;align-items:flex-end;"><div style="font-size:9.33px;line-height:11px;white-space:pre;text-align:right;padding:0 1px;color:#000;">Название компании латинскими символами
будет указано на карте (не обязательно)
<i style="color:#993300">не более 19 символов и только буквы</i>:</div></div></div>
<div class="a" style="left:300px;top:255px;width:168px;height:30px;overflow:hidden;"><div class="a" style="left:0;top:0px;width:168px;height:30px;display:flex;justify-content:center;align-items:center;"><div style="font-size:9.33px;line-height:11px;white-space:pre;text-align:center;padding:0 2px;color:#000;">ООО Ромашка</div></div></div>
<div class="a" style="left:300px;top:285px;width:168px;height:29px;overflow:hidden;"><div class="a" style="left:0;top:1.5px;width:168px;height:29px;display:flex;justify-content:center;align-items:center;"><div style="font-size:9.33px;line-height:11px;white-space:pre;text-align:center;padding:0 2px;color:#000;color:#1515f0;font-weight:bold;letter-spacing:0.45px">Ленинский просп 1</div></div></div>
<div class="a" style="left:300px;top:314px;width:168px;height:70px;overflow:hidden;"><div class="a" style="left:0;top:0.5px;width:168px;height:70px;display:flex;justify-content:center;align-items:center;"><div style="font-size:9.33px;line-height:11px;white-space:pre;text-align:center;padding:0 2px;color:#000;color:#1515f0;font-weight:bold;letter-spacing:0.3px">ООО ROMASHKA1</div></div></div>
<div class="a" style="left:468px;top:255px;width:126px;height:30px;overflow:hidden;"><div class="a" style="left:0;top:0px;width:126px;height:30px;display:flex;justify-content:center;align-items:center;"><div style="font-size:9.33px;line-height:11px;white-space:pre;text-align:center;padding:0 2px;color:#000;color:#1515f0;font-weight:bold;letter-spacing:0.5px">4950000000</div></div></div>
<div class="a" style="left:468px;top:285px;width:126px;height:29px;overflow:hidden;"><div class="a" style="left:0;top:2px;width:126px;height:29px;display:flex;justify-content:center;align-items:center;"><div style="font-size:9.33px;line-height:11px;white-space:pre;text-align:center;padding:0 2px;color:#000;color:#1515f0;font-weight:bold;letter-spacing:0.5px">7700000000</div></div></div>
<div class="a" style="left:468px;top:314px;width:126px;height:70px;overflow:hidden;"><div class="a" style="left:0;top:0.5px;width:126px;height:70px;display:flex;justify-content:center;align-items:center;"><div style="font-size:9.33px;line-height:11px;white-space:pre;text-align:center;padding:0 2px;color:#000;color:#1515f0;font-weight:bold;letter-spacing:0.5px">0000000222</div></div></div>
<div class="a" style="left:594px;top:255px;width:390px;height:30px;overflow:hidden;"><div class="a" style="left:0;top:0px;width:390px;height:30px;display:flex;justify-content:flex-start;align-items:center;"><div style="font-size:9.33px;line-height:11px;white-space:pre;text-align:left;padding:0 1px;color:#000;">Телефон компании
(<i style="color:#993300">не менее 5 сим.</i>):</div></div></div>
<div class="a" style="left:594px;top:285px;width:390px;height:29px;overflow:hidden;"><div class="a" style="left:0;top:1px;width:390px;height:29px;display:flex;justify-content:flex-start;align-items:center;"><div style="font-size:9.33px;line-height:11px;white-space:pre;text-align:left;padding:0 1px;color:#000;">ИНН организации
(<i style="color:#993300">10 или 12 символов</i>):</div></div></div>
<div class="a" style="left:594px;top:314px;width:390px;height:70px;overflow:hidden;"><div class="a" style="left:0;top:2px;width:390px;height:70px;display:flex;justify-content:flex-start;align-items:center;"><div style="font-size:9.33px;line-height:11px;white-space:pre;text-align:left;padding:0 1px;color:#000;">Уникальный идентификатор Предприятия:
(<i style="color:#222">информация предоставляется Банком, максимальная длина 10 символов</i>):</div></div></div>
<div class="a" style="left:984px;top:255px;width:262px;height:30px;overflow:hidden;"><div class="a" style="left:0;top:0px;width:262px;height:30px;display:flex;justify-content:flex-end;align-items:center;"><div style="font-size:9.33px;line-height:11px;white-space:pre;text-align:right;padding:0 1px;color:#000;">Номер реестра:</div></div></div>
<div class="a" style="left:984px;top:285px;width:262px;height:29px;overflow:hidden;"><div class="a" style="left:0;top:1px;width:262px;height:29px;display:flex;justify-content:flex-end;align-items:center;"><div style="font-size:9.33px;line-height:11px;white-space:pre;text-align:right;padding:0 1px;color:#000;">Подразделение для получения карты)
(<i style="color:#4a3000">ровно 4 символа и только цифры</i>):</div></div></div>
<div class="a" style="left:984px;top:314px;width:262px;height:70px;overflow:hidden;"><div class="a" style="left:0;top:1.5px;width:262px;height:70px;display:flex;justify-content:flex-end;align-items:center;"><div style="font-size:9.33px;line-height:11px;white-space:pre;text-align:right;padding:0 1px;color:#000;color:#1a1a1a">Адресат заявления на перечисление заработной платы 
(можно редактировать для шапки заявления):</div></div></div>
<div class="a" style="left:1246px;top:255px;width:83px;height:30px;overflow:hidden;"><div class="a" style="left:0;top:0px;width:83px;height:30px;display:flex;justify-content:center;align-items:center;"><div style="font-size:9.33px;line-height:11px;white-space:pre;text-align:center;padding:0 2px;color:#000;color:#1515f0;font-weight:bold">01</div></div></div>
<div class="a" style="left:1246px;top:285px;width:83px;height:29px;overflow:hidden;"><div class="a" style="left:0;top:2px;width:83px;height:29px;display:flex;justify-content:center;align-items:center;"><div style="font-size:9.33px;line-height:11px;white-space:pre;text-align:center;padding:0 2px;color:#000;color:#1515f0;font-weight:bold;letter-spacing:0.4px">1234</div></div></div>
<div class="a" style="left:1246px;top:314px;width:83px;height:70px;overflow:hidden;"><div class="a" style="left:0;top:1.5px;width:83px;height:70px;display:flex;justify-content:center;align-items:center;"><div style="font-size:9.33px;line-height:11px;white-space:pre;text-align:center;padding:0 0px;color:#000;color:#1515f0;font-weight:bold;line-height:11.8px;letter-spacing:0.35px">В финансовый
отдел ООО
"Ромашка"
ген. дир.
Иванову И.И.</div></div></div>
<div class="a" style="left:21px;top:385px;width:1841px;height:80px;background:#fff"></div>
<div class="a" style="left:26px;top:407px;width:102px;height:43px;background:#ffc0c0;box-shadow:1px 1px 0 #8a8a8a, 2px 2px 0 #c8c8c8;display:flex;align-items:center;overflow:hidden"><div style="font-size:9.33px;line-height:11px;white-space:pre;color:#000;position:relative;top:1px;padding-left:1px">Проверка ошибок и
автозаполнение полей</div></div>
<div class="a" style="left:140px;top:407px;width:101px;height:43px;background:#ffc0c0;box-shadow:1px 1px 0 #8a8a8a, 2px 2px 0 #c8c8c8;display:flex;align-items:center;overflow:hidden"><div style="font-size:9.33px;line-height:11px;white-space:pre;color:#000;position:relative;top:1px;padding-left:1px">Убрать подстветку
ошибок</div></div>
<div class="a" style="left:253px;top:407px;width:101px;height:43px;background:#c0ffff;box-shadow:1px 1px 0 #8a8a8a, 2px 2px 0 #c8c8c8;display:flex;align-items:center;overflow:hidden"><div style="font-size:9.33px;line-height:11px;white-space:pre;color:#000;position:relative;top:1px;padding-left:1px">Сформировать
электронный реестр</div></div>
<div class="a" style="left:362px;top:407px;width:103px;height:43px;background:#c0ffff;box-shadow:1px 1px 0 #8a8a8a, 2px 2px 0 #c8c8c8;display:flex;align-items:center;overflow:hidden"><div style="font-size:9.33px;line-height:11px;white-space:pre;color:#000;position:relative;top:1px;padding-left:1px">Сформировать
бумажный реестр</div></div>
<div class="a" style="left:475px;top:408px;width:80px;height:41px;background:#f0f0f0;box-shadow:1px 1px 0 #8a8a8a, 2px 2px 0 #c8c8c8;display:flex;align-items:center;overflow:hidden"><div style="font-size:9.33px;line-height:11px;white-space:pre;color:#000;position:relative;top:1px;padding-left:2px;font-size:11.5px;line-height:15px;padding-top:3px">Загрузка
реестра</div></div>
<div class="a" style="left:578px;top:408px;width:121px;height:38px;background:#eceef1;border-radius:3px;overflow:hidden"><div style="height:32px;overflow:hidden"><div style="font-size:9.33px;line-height:10px;white-space:pre;text-align:center;color:#000;padding-top:5px">Сформировать
заявление на
перечисление з/п</div></div></div>
<svg class="a" style="left:230px;top:390px" width="140" height="75" viewBox="0 0 140 75"><path d="M33.9 5.5 L37.9 8.0 L54.0 10.6 L60.5 13.9 L110.9 13.9 L116.7 19.0 L121.0 27.7 L124.0 36.5 L124.0 47.4 L121.0 54.0 L112.3 59.8 L100.7 64.2 L70.0 64.9 L64.0 67.0 L36.5 67.0 L34.3 59.0 L30.6 54.0 L22.6 46.7 L13.9 38.0 L11.7 29.2 L12.4 22.6 L16.8 16.8 L27.7 7.3 Z" fill="none" stroke="#ec1c24" stroke-width="3.3" stroke-linejoin="round"/></svg>
<div class="a" style="left:21px;top:465px;width:1756px;height:111px;background:#33cccc"></div>
<div class="a" style="left:1777px;top:465px;width:85px;height:111px;background:#d9d9d9"></div>
<div class="a" style="left:21px;top:492px;width:58px;height:84px;background:#d9d9d9"></div>
<div class="a" style="left:300px;top:492px;width:37px;height:36px;background:#d8e4bc"></div>
<div class="a" style="left:468px;top:492px;width:421px;height:36px;background:#d8e4bc"></div>
<div class="a" style="left:889px;top:492px;width:307px;height:36px;background:#b7dee8"></div>
<div class="a" style="left:1196px;top:529px;width:133px;height:47px;background:#d9d9d9"></div>
<div class="a" style="left:1577px;top:529px;width:200px;height:47px;background:#d9d9d9"></div>
<div class="a" style="left:21px;top:465px;width:1841px;height:1px;background:#000"></div>
<div class="a" style="left:468px;top:492px;width:729px;height:1px;background:#333"></div>
<div class="a" style="left:21px;top:528px;width:1176px;height:1px;background:#000"></div>
<div class="a" style="left:1777px;top:528px;width:85px;height:1px;background:#222"></div>
<div class="a" style="left:20px;top:576px;width:1842px;height:1px;background:#555"></div>
<div class="a" style="left:468px;top:465px;width:1px;height:111px;background:#222"></div>
<div class="a" style="left:593px;top:492px;width:1px;height:84px;background:#000"></div>
<div class="a" style="left:889px;top:492px;width:1px;height:84px;background:#222"></div>
<div class="a" style="left:1196px;top:465px;width:1px;height:111px;background:#222"></div>
<div class="a" style="left:1777px;top:465px;width:1px;height:111px;background:#222"></div>
<div class="a" style="left:300px;top:492px;width:1px;height:36px;background:#555"></div>
<div class="a" style="left:300px;top:492px;width:38px;height:1px;background:#333"></div>
<div class="a" style="left:337px;top:492px;width:1px;height:36px;background:#555"></div>
<div class="a" style="left:79px;top:492px;width:1px;height:36px;background:#888"></div>
<div class="a" style="left:79px;top:529px;width:1px;height:47px;background:#222"></div>
<div class="a" style="left:152px;top:529px;width:1px;height:47px;background:#222"></div>
<div class="a" style="left:224px;top:529px;width:1px;height:47px;background:#222"></div>
<div class="a" style="left:300px;top:529px;width:1px;height:47px;background:#222"></div>
<div class="a" style="left:337px;top:529px;width:1px;height:47px;background:#222"></div>
<div class="a" style="left:394px;top:529px;width:1px;height:47px;background:#222"></div>
<div class="a" style="left:936px;top:529px;width:1px;height:47px;background:#222"></div>
<div class="a" style="left:984px;top:529px;width:1px;height:47px;background:#222"></div>
<div class="a" style="left:1056px;top:529px;width:1px;height:47px;background:#222"></div>
<div class="a" style="left:1124px;top:529px;width:1px;height:47px;background:#222"></div>
<div class="a" style="left:1246px;top:529px;width:1px;height:47px;background:#222"></div>
<div class="a" style="left:1329px;top:529px;width:1px;height:47px;background:#222"></div>
<div class="a" style="left:1411px;top:529px;width:1px;height:47px;background:#222"></div>
<div class="a" style="left:1577px;top:529px;width:1px;height:47px;background:#222"></div>
<div class="a" style="left:1631px;top:529px;width:1px;height:47px;background:#222"></div>
<div class="a" style="left:1662px;top:529px;width:1px;height:47px;background:#222"></div>
<div class="a" style="left:1687px;top:529px;width:1px;height:47px;background:#222"></div>
<div class="a" style="left:1777px;top:529px;width:1px;height:47px;background:#222"></div>
<div class="a" style="left:1819px;top:529px;width:1px;height:47px;background:#222"></div>
<div class="a" style="left:1687px;top:529px;width:1px;height:47px;background:#222"></div>
<div class="a" style="left:1687px;top:552px;width:90px;height:1px;background:#222"></div>
<div class="a" style="left:20px;top:465px;width:448px;height:27px;overflow:hidden;"><div class="a" style="left:0;top:1px;width:448px;height:27px;display:flex;justify-content:center;align-items:center;"><div style="font-size:9.33px;line-height:11px;white-space:pre;text-align:center;padding:0 2px;color:#000;letter-spacing:0.15px">Персональная информация
<i>Обязательно для заполнения</i></div></div></div>
<div class="a" style="left:468px;top:465px;width:728px;height:27px;overflow:hidden;"><div class="a" style="left:0;top:1px;width:728px;height:27px;display:flex;justify-content:center;align-items:center;"><div style="font-size:9.33px;line-height:11px;white-space:pre;text-align:center;padding:0 2px;color:#000;letter-spacing:0.15px">Паспортные данные
<i>Обязательно для заполнения</i></div></div></div>
<div class="a" style="left:1196px;top:465px;width:581px;height:63px;overflow:hidden;"><div class="a" style="left:0;top:1px;width:581px;height:63px;display:flex;justify-content:center;align-items:center;"><div style="font-size:9.33px;line-height:11px;white-space:pre;text-align:center;padding:0 2px;color:#000;">Адрес регистрации
<i>Обязательно для заполнения: Город/населенный пункт и Улица</i></div></div></div>
<div class="a" style="left:20px;top:492px;width:59px;height:36px;overflow:hidden;"><div class="a" style="left:0;top:0.5px;width:59px;height:36px;display:flex;justify-content:center;align-items:center;"><div style="font-size:9.33px;line-height:11px;white-space:pre;text-align:center;padding:0 2px;color:#000;color:#9010a0;font-size:8.4px;line-height:11px"><i>для 1С
(до 10 симв.)</i></div></div></div>
<div class="a" style="left:300px;top:492px;width:37px;height:36px;overflow:hidden;"><div class="a" style="left:0;top:1px;width:37px;height:36px;display:flex;justify-content:center;align-items:center;"><div style="font-size:9.33px;line-height:11px;white-space:pre;text-align:center;padding:0 0px;color:#000;color:#26264a;line-height:9.5px;font-size:8.2px"><i>Выбрат
ь из
списка</i></div></div></div>
<div class="a" style="left:468px;top:492px;width:126px;height:36px;overflow:hidden;"><div class="a" style="left:0;top:0px;width:126px;height:36px;display:flex;justify-content:center;align-items:center;"><div style="font-size:9.33px;line-height:11px;white-space:pre;text-align:center;padding:0 2px;color:#000;color:#26264a"><i>Выбрать из списка</i></div></div></div>
<div class="a" style="left:594px;top:492px;width:295px;height:36px;overflow:hidden;"><div class="a" style="left:0;top:0px;width:295px;height:36px;display:flex;justify-content:center;align-items:center;"><div style="font-size:9.33px;line-height:11px;white-space:pre;text-align:center;padding:0 2px;color:#000;color:#26264a"><i>Выбрать из списка</i></div></div></div>
<div class="a" style="left:889px;top:492px;width:307px;height:36px;overflow:hidden;"><div class="a" style="left:0;top:1px;width:307px;height:36px;display:flex;justify-content:center;align-items:center;"><div style="font-size:9.33px;line-height:11px;white-space:pre;text-align:center;padding:0 2px;color:#000;color:#1c1cb0"><i>Формат ячеек должен быть "Текстовый". Иначе первый символ "0"
не сохранится</i></div></div></div>
<div class="a" style="left:20px;top:529px;width:59px;height:47px;overflow:hidden;"><div class="a" style="left:0;top:0px;width:59px;height:47px;display:flex;justify-content:center;align-items:center;"><div style="font-size:9.33px;line-height:11px;white-space:pre;text-align:center;padding:0 0px;color:#000;font-weight:bold;font-size:8.9px;">Табельный
номер</div></div></div>
<div class="a" style="left:79px;top:529px;width:73px;height:47px;overflow:hidden;"><div class="a" style="left:0;top:0px;width:73px;height:47px;display:flex;justify-content:center;align-items:center;"><div style="font-size:9.33px;line-height:11px;white-space:pre;text-align:center;padding:0 0px;color:#000;font-weight:bold;font-size:8.9px;">Фамилия</div></div></div>
<div class="a" style="left:152px;top:529px;width:72px;height:47px;overflow:hidden;"><div class="a" style="left:0;top:0px;width:72px;height:47px;display:flex;justify-content:center;align-items:center;"><div style="font-size:9.33px;line-height:11px;white-space:pre;text-align:center;padding:0 0px;color:#000;font-weight:bold;font-size:8.9px;">Имя</div></div></div>
<div class="a" style="left:224px;top:529px;width:76px;height:47px;overflow:hidden;"><div class="a" style="left:0;top:0px;width:76px;height:47px;display:flex;justify-content:center;align-items:center;"><div style="font-size:9.33px;line-height:11px;white-space:pre;text-align:center;padding:0 0px;color:#000;font-weight:bold;font-size:8.9px;">Отчество</div></div></div>
<div class="a" style="left:300px;top:529px;width:37px;height:47px;overflow:hidden;"><div class="a" style="left:0;top:0px;width:37px;height:47px;display:flex;justify-content:center;align-items:center;"><div style="font-size:9.33px;line-height:11px;white-space:pre;text-align:center;padding:0 0px;color:#000;font-weight:bold;font-size:8.9px;">Пол</div></div></div>
<div class="a" style="left:337px;top:529px;width:57px;height:47px;overflow:hidden;"><div class="a" style="left:0;top:0px;width:57px;height:47px;display:flex;justify-content:center;align-items:center;"><div style="font-size:9.33px;line-height:11px;white-space:pre;text-align:center;padding:0 0px;color:#000;font-weight:bold;font-size:8.9px;">Дата
рождения</div></div></div>
<div class="a" style="left:394px;top:529px;width:74px;height:47px;overflow:hidden;"><div class="a" style="left:0;top:0px;width:74px;height:47px;display:flex;justify-content:center;align-items:center;"><div style="font-size:9.33px;line-height:11px;white-space:pre;text-align:center;padding:0 0px;color:#000;font-weight:bold;font-size:8.9px;">Место
рождения</div></div></div>
<div class="a" style="left:468px;top:529px;width:126px;height:47px;overflow:hidden;"><div class="a" style="left:0;top:0px;width:126px;height:47px;display:flex;justify-content:center;align-items:center;"><div style="font-size:9.33px;line-height:11px;white-space:pre;text-align:center;padding:0 0px;color:#000;">Гражданство</div></div></div>
<div class="a" style="left:594px;top:529px;width:295px;height:47px;overflow:hidden;"><div class="a" style="left:0;top:0px;width:295px;height:47px;display:flex;justify-content:center;align-items:center;"><div style="font-size:9.33px;line-height:11px;white-space:pre;text-align:center;padding:0 0px;color:#000;">Код документа</div></div></div>
<div class="a" style="left:889px;top:529px;width:47px;height:47px;overflow:hidden;"><div class="a" style="left:0;top:0px;width:47px;height:47px;display:flex;justify-content:center;align-items:center;"><div style="font-size:9.33px;line-height:11px;white-space:pre;text-align:center;padding:0 0px;color:#000;">Серия
паспорта</div></div></div>
<div class="a" style="left:936px;top:529px;width:48px;height:47px;overflow:hidden;"><div class="a" style="left:0;top:0px;width:48px;height:47px;display:flex;justify-content:center;align-items:center;"><div style="font-size:9.33px;line-height:11px;white-space:pre;text-align:center;padding:0 0px;color:#000;">Номер
паспорта</div></div></div>
<div class="a" style="left:984px;top:529px;width:72px;height:47px;overflow:hidden;"><div class="a" style="left:0;top:0px;width:72px;height:47px;display:flex;justify-content:center;align-items:center;"><div style="font-size:9.33px;line-height:11px;white-space:pre;text-align:center;padding:0 0px;color:#000;">Дата выдачи
паспорта</div></div></div>
<div class="a" style="left:1056px;top:529px;width:68px;height:47px;overflow:hidden;"><div class="a" style="left:0;top:0px;width:68px;height:47px;display:flex;justify-content:center;align-items:center;"><div style="font-size:9.33px;line-height:11px;white-space:pre;text-align:center;padding:0 0px;color:#000;">Кем выдан
Паспорт</div></div></div>
<div class="a" style="left:1124px;top:529px;width:72px;height:47px;overflow:hidden;"><div class="a" style="left:0;top:0px;width:72px;height:47px;display:flex;justify-content:center;align-items:center;"><div style="font-size:9.33px;line-height:11px;white-space:pre;text-align:center;padding:0 0px;color:#000;">Код
подразделения</div></div></div>
<div class="a" style="left:1196px;top:529px;width:50px;height:47px;overflow:hidden;"><div class="a" style="left:0;top:0px;width:50px;height:47px;display:flex;justify-content:center;align-items:center;"><div style="font-size:9.33px;line-height:11px;white-space:pre;text-align:center;padding:0 0px;color:#000;">Индекс</div></div></div>
<div class="a" style="left:1246px;top:529px;width:83px;height:47px;overflow:hidden;"><div class="a" style="left:0;top:0px;width:83px;height:47px;display:flex;justify-content:center;align-items:center;"><div style="font-size:9.33px;line-height:11px;white-space:pre;text-align:center;padding:0 0px;color:#000;">Область</div></div></div>
<div class="a" style="left:1329px;top:529px;width:82px;height:47px;overflow:hidden;"><div class="a" style="left:0;top:0px;width:82px;height:47px;display:flex;justify-content:center;align-items:center;"><div style="font-size:9.33px;line-height:11px;white-space:pre;text-align:center;padding:0 0px;color:#000;">Город/населенны
й пункт</div></div></div>
<div class="a" style="left:1411px;top:529px;width:166px;height:47px;overflow:hidden;"><div class="a" style="left:0;top:0px;width:166px;height:47px;display:flex;justify-content:center;align-items:center;"><div style="font-size:9.33px;line-height:11px;white-space:pre;text-align:center;padding:0 0px;color:#000;">Улица</div></div></div>
<div class="a" style="left:1577px;top:529px;width:54px;height:47px;overflow:hidden;"><div class="a" style="left:0;top:0px;width:54px;height:47px;display:flex;justify-content:center;align-items:center;"><div style="font-size:9.33px;line-height:11px;white-space:pre;text-align:center;padding:0 0px;color:#000;">Дом</div></div></div>
<div class="a" style="left:1631px;top:529px;width:31px;height:47px;overflow:hidden;"><div class="a" style="left:0;top:0px;width:31px;height:47px;display:flex;justify-content:center;align-items:center;"><div style="font-size:9.33px;line-height:11px;white-space:pre;text-align:center;padding:0 0px;color:#000;">Корпу
с</div></div></div>
<div class="a" style="left:1662px;top:529px;width:25px;height:47px;overflow:hidden;"><div class="a" style="left:0;top:0px;width:25px;height:47px;display:flex;justify-content:center;align-items:center;"><div style="font-size:9.33px;line-height:11px;white-space:pre;text-align:center;padding:0 0px;color:#000;">Кв.</div></div></div>
<div class="a" style="left:1777px;top:529px;width:42px;height:47px;overflow:hidden;"><div class="a" style="left:0;top:0px;width:42px;height:47px;display:flex;justify-content:center;align-items:center;"><div style="font-size:9.33px;line-height:11px;white-space:pre;text-align:center;padding:0 0px;color:#000;">Индекс</div></div></div>
<div class="a" style="left:1819px;top:529px;width:43px;height:47px;overflow:hidden;"><div class="a" style="left:0;top:0px;width:76px;height:47px;display:flex;justify-content:center;align-items:center;"><div style="font-size:9.33px;line-height:11px;white-space:pre;text-align:center;padding:0 0px;color:#000;">Область</div></div></div>
<div class="a" style="left:1687px;top:529px;width:90px;height:23px;overflow:hidden;"><div class="a" style="left:0;top:0px;width:90px;height:23px;display:flex;justify-content:center;align-items:center;"><div style="font-size:9.33px;line-height:11px;white-space:pre;text-align:center;padding:0 0px;color:#000;line-height:10.5px">Телефон по месту
регистрации</div></div></div>
<div class="a" style="left:1687px;top:552px;width:39px;height:24px;overflow:hidden;"><div class="a" style="left:0;top:0px;width:39px;height:24px;display:flex;justify-content:center;align-items:center;"><div style="font-size:9.33px;line-height:11px;white-space:pre;text-align:center;padding:0 0px;color:#000;line-height:10px">Код
<span style="font-size:7.5px;color:#a020a0;font-style:italic">≥ 3 сим</span></div></div></div>
<div class="a" style="left:1726px;top:552px;width:51px;height:24px;overflow:hidden;"><div class="a" style="left:0;top:0px;width:51px;height:24px;display:flex;justify-content:center;align-items:center;"><div style="font-size:9.33px;line-height:11px;white-space:pre;text-align:center;padding:0 0px;color:#000;line-height:10px">Телефон
<span style="font-size:7px;color:#a020a0">≥5 сим</span></div></div></div>
<div class="a" style="left:468px;top:576px;width:1px;height:407px;background:#b0dcb4"></div>
<div class="a" style="left:21.5px;top:577px;width:57.5px;height:14px;overflow:hidden"><div style="font-size:9.33px;line-height:11px;white-space:pre;position:absolute;bottom:0;left:0;color:#000;">1256370</div></div>
<div class="a" style="left:80.5px;top:577px;width:71.5px;height:14px;overflow:hidden"><div style="font-size:9.33px;line-height:11px;white-space:pre;position:absolute;bottom:0;left:0;color:#000;">Куликов</div></div>
<div class="a" style="left:153.5px;top:577px;width:70.5px;height:14px;overflow:hidden"><div style="font-size:9.33px;line-height:11px;white-space:pre;position:absolute;bottom:0;left:0;color:#000;">Владислав</div></div>
<div class="a" style="left:225.5px;top:577px;width:74.5px;height:14px;overflow:hidden"><div style="font-size:9.33px;line-height:11px;white-space:pre;position:absolute;bottom:0;left:0;color:#000;">Игоревич</div></div>
<div class="a" style="left:301.5px;top:577px;width:35.5px;height:14px;overflow:hidden"><div style="font-size:9.33px;line-height:11px;white-space:pre;position:absolute;bottom:0;left:0;color:#000;color:#1515f0;font-weight:bold">М</div></div>
<div class="a" style="left:337px;top:577px;width:57px;height:14px;overflow:hidden"><div style="font-size:9.33px;line-height:11px;white-space:pre;position:absolute;bottom:0;right:0;color:#000;">4/1/1984</div></div>
<div class="a" style="left:395.5px;top:577px;width:72.5px;height:14px;overflow:hidden"><div style="font-size:9.33px;line-height:11px;white-space:pre;position:absolute;bottom:0;left:0;color:#000;">г.Самара</div></div>
<div class="a" style="left:469.5px;top:577px;width:124.5px;height:14px;overflow:hidden"><div style="font-size:9.33px;line-height:11px;white-space:pre;position:absolute;bottom:0;left:0;color:#000;color:#1515f0;font-weight:bold">РЕСПУБЛИКА НАМИБИЯ</div></div>
<div class="a" style="left:595.5px;top:577px;width:293.5px;height:14px;overflow:hidden"><div style="font-size:9.33px;line-height:11px;white-space:pre;position:absolute;bottom:0;left:0;color:#000;">Иностранный паспорт</div></div>
<div class="a" style="left:890.5px;top:577px;width:45.5px;height:14px;overflow:hidden"><div style="font-size:9.33px;line-height:11px;white-space:pre;position:absolute;bottom:0;left:0;color:#000;">6032</div></div>
<div class="a" style="left:937.5px;top:577px;width:46.5px;height:14px;overflow:hidden"><div style="font-size:9.33px;line-height:11px;white-space:pre;position:absolute;bottom:0;left:0;color:#000;">222444</div></div>
<div class="a" style="left:984px;top:577px;width:72px;height:14px;overflow:hidden"><div style="font-size:9.33px;line-height:11px;white-space:pre;position:absolute;bottom:0;right:0;color:#000;">10/12/2014</div></div>
<div class="a" style="left:1057px;top:577px;width:139px;height:13px;background:#fff"></div>
<div class="a" style="left:1057.5px;top:577px;width:138.5px;height:14px;overflow:hidden"><div style="font-size:9.33px;line-height:11px;white-space:pre;position:absolute;bottom:0;left:0;color:#000;">ОМВД Самары в Октябрьском р-не</div></div>
<div class="a" style="left:1197.5px;top:577px;width:48.5px;height:14px;overflow:hidden"><div style="font-size:9.33px;line-height:11px;white-space:pre;position:absolute;bottom:0;left:0;color:#000;">443000</div></div>
<div class="a" style="left:1247.5px;top:577px;width:81.5px;height:14px;overflow:hidden"><div style="font-size:9.33px;line-height:11px;white-space:pre;position:absolute;bottom:0;left:0;color:#000;">Самарская</div></div>
<div class="a" style="left:1330.5px;top:577px;width:80.5px;height:14px;overflow:hidden"><div style="font-size:9.33px;line-height:11px;white-space:pre;position:absolute;bottom:0;left:0;color:#000;">Самара</div></div>
<div class="a" style="left:1412.5px;top:577px;width:164.5px;height:14px;overflow:hidden"><div style="font-size:9.33px;line-height:11px;white-space:pre;position:absolute;bottom:0;left:0;color:#000;">Полевой переулок</div></div>
<div class="a" style="left:1578.5px;top:577px;width:52.5px;height:14px;overflow:hidden"><div style="font-size:9.33px;line-height:11px;white-space:pre;position:absolute;bottom:0;left:0;color:#000;">10</div></div>
<div class="a" style="left:1688.5px;top:577px;width:37.5px;height:14px;overflow:hidden"><div style="font-size:9.33px;line-height:11px;white-space:pre;position:absolute;bottom:0;left:0;color:#000;">375</div></div>
<div class="a" style="left:1727.5px;top:577px;width:49.5px;height:14px;overflow:hidden"><div style="font-size:9.33px;line-height:11px;white-space:pre;position:absolute;bottom:0;left:0;color:#000;">21012</div></div>
<div class="a" style="left:1778.5px;top:577px;width:40.5px;height:14px;overflow:hidden"><div style="font-size:9.33px;line-height:11px;white-space:pre;position:absolute;bottom:0;left:0;color:#000;">443000</div></div>
<div class="a" style="left:1820.5px;top:577px;width:41.5px;height:14px;overflow:hidden"><div style="font-size:9.33px;line-height:11px;white-space:pre;position:absolute;bottom:0;left:0;color:#000;">Самарская</div></div>
<div class="a" style="left:21.5px;top:591px;width:57.5px;height:14px;overflow:hidden"><div style="font-size:9.33px;line-height:11px;white-space:pre;position:absolute;bottom:0;left:0;color:#000;">1256371</div></div>
<div class="a" style="left:80.5px;top:591px;width:71.5px;height:14px;overflow:hidden"><div style="font-size:9.33px;line-height:11px;white-space:pre;position:absolute;bottom:0;left:0;color:#000;">Зайцева</div></div>
<div class="a" style="left:153.5px;top:591px;width:70.5px;height:14px;overflow:hidden"><div style="font-size:9.33px;line-height:11px;white-space:pre;position:absolute;bottom:0;left:0;color:#000;">Алла</div></div>
<div class="a" style="left:225.5px;top:591px;width:74.5px;height:14px;overflow:hidden"><div style="font-size:9.33px;line-height:11px;white-space:pre;position:absolute;bottom:0;left:0;color:#000;">Вадимовна</div></div>
<div class="a" style="left:301.5px;top:591px;width:35.5px;height:14px;overflow:hidden"><div style="font-size:9.33px;line-height:11px;white-space:pre;position:absolute;bottom:0;left:0;color:#000;color:#1515f0;font-weight:bold">Ж</div></div>
<div class="a" style="left:337px;top:591px;width:57px;height:14px;overflow:hidden"><div style="font-size:9.33px;line-height:11px;white-space:pre;position:absolute;bottom:0;right:0;color:#000;">6/13/1990</div></div>
<div class="a" style="left:395.5px;top:591px;width:72.5px;height:14px;overflow:hidden"><div style="font-size:9.33px;line-height:11px;white-space:pre;position:absolute;bottom:0;left:0;color:#000;">г.Челябинск</div></div>
<div class="a" style="left:469.5px;top:591px;width:124.5px;height:14px;overflow:hidden"><div style="font-size:9.33px;line-height:11px;white-space:pre;position:absolute;bottom:0;left:0;color:#000;color:#1515f0;font-weight:bold">РОССИЙСКАЯ ФЕДЕРАЦИЯ</div></div>
<div class="a" style="left:595.5px;top:591px;width:293.5px;height:14px;overflow:hidden"><div style="font-size:9.33px;line-height:11px;white-space:pre;position:absolute;bottom:0;left:0;color:#000;">Паспорт гражданина РФ</div></div>
<div class="a" style="left:890.5px;top:591px;width:45.5px;height:14px;overflow:hidden"><div style="font-size:9.33px;line-height:11px;white-space:pre;position:absolute;bottom:0;left:0;color:#000;">5033</div></div>
<div class="a" style="left:937.5px;top:591px;width:46.5px;height:14px;overflow:hidden"><div style="font-size:9.33px;line-height:11px;white-space:pre;position:absolute;bottom:0;left:0;color:#000;">333555</div></div>
<div class="a" style="left:984px;top:591px;width:72px;height:14px;overflow:hidden"><div style="font-size:9.33px;line-height:11px;white-space:pre;position:absolute;bottom:0;right:0;color:#000;">8/5/2015</div></div>
<div class="a" style="left:1057.5px;top:591px;width:66.5px;height:14px;overflow:hidden"><div style="font-size:9.33px;line-height:11px;white-space:pre;position:absolute;bottom:0;left:0;color:#000;">ОМВД Челябинска</div></div>
<div class="a" style="left:1125.5px;top:591px;width:70.5px;height:14px;overflow:hidden"><div style="font-size:9.33px;line-height:11px;white-space:pre;position:absolute;bottom:0;left:0;color:#000;">369-852</div></div>
<div class="a" style="left:1197.5px;top:591px;width:48.5px;height:14px;overflow:hidden"><div style="font-size:9.33px;line-height:11px;white-space:pre;position:absolute;bottom:0;left:0;color:#000;">454000</div></div>
<div class="a" style="left:1247.5px;top:591px;width:81.5px;height:14px;overflow:hidden"><div style="font-size:9.33px;line-height:11px;white-space:pre;position:absolute;bottom:0;left:0;color:#000;">Челябинская</div></div>
<div class="a" style="left:1330.5px;top:591px;width:80.5px;height:14px;overflow:hidden"><div style="font-size:9.33px;line-height:11px;white-space:pre;position:absolute;bottom:0;left:0;color:#000;">Челябинск</div></div>
<div class="a" style="left:1412.5px;top:591px;width:164.5px;height:14px;overflow:hidden"><div style="font-size:9.33px;line-height:11px;white-space:pre;position:absolute;bottom:0;left:0;color:#000;">Мира</div></div>
<div class="a" style="left:1578.5px;top:591px;width:52.5px;height:14px;overflow:hidden"><div style="font-size:9.33px;line-height:11px;white-space:pre;position:absolute;bottom:0;left:0;color:#000;">25</div></div>
<div class="a" style="left:1688.5px;top:591px;width:37.5px;height:14px;overflow:hidden"><div style="font-size:9.33px;line-height:11px;white-space:pre;position:absolute;bottom:0;left:0;color:#000;">375</div></div>
<div class="a" style="left:1727.5px;top:591px;width:49.5px;height:14px;overflow:hidden"><div style="font-size:9.33px;line-height:11px;white-space:pre;position:absolute;bottom:0;left:0;color:#000;">32123</div></div>
<div class="a" style="left:1778.5px;top:591px;width:40.5px;height:14px;overflow:hidden"><div style="font-size:9.33px;line-height:11px;white-space:pre;position:absolute;bottom:0;left:0;color:#000;">454000</div></div>
<div class="a" style="left:1820.5px;top:591px;width:41.5px;height:14px;overflow:hidden"><div style="font-size:9.33px;line-height:11px;white-space:pre;position:absolute;bottom:0;left:0;color:#000;">Челябинская</div></div>
<div class="a" style="left:21.5px;top:605px;width:57.5px;height:14px;overflow:hidden"><div style="font-size:9.33px;line-height:11px;white-space:pre;position:absolute;bottom:0;left:0;color:#000;">1256372</div></div>
<div class="a" style="left:80.5px;top:605px;width:71.5px;height:14px;overflow:hidden"><div style="font-size:9.33px;line-height:11px;white-space:pre;position:absolute;bottom:0;left:0;color:#000;">Николаев</div></div>
<div class="a" style="left:153.5px;top:605px;width:70.5px;height:14px;overflow:hidden"><div style="font-size:9.33px;line-height:11px;white-space:pre;position:absolute;bottom:0;left:0;color:#000;">Сергей</div></div>
<div class="a" style="left:225.5px;top:605px;width:74.5px;height:14px;overflow:hidden"><div style="font-size:9.33px;line-height:11px;white-space:pre;position:absolute;bottom:0;left:0;color:#000;">Викторович</div></div>
<div class="a" style="left:301.5px;top:605px;width:35.5px;height:14px;overflow:hidden"><div style="font-size:9.33px;line-height:11px;white-space:pre;position:absolute;bottom:0;left:0;color:#000;color:#1515f0;font-weight:bold">М</div></div>
<div class="a" style="left:337px;top:605px;width:57px;height:14px;overflow:hidden"><div style="font-size:9.33px;line-height:11px;white-space:pre;position:absolute;bottom:0;right:0;color:#000;">9/5/1982</div></div>
<div class="a" style="left:395.5px;top:605px;width:72.5px;height:14px;overflow:hidden"><div style="font-size:9.33px;line-height:11px;white-space:pre;position:absolute;bottom:0;left:0;color:#000;">г.Тверь</div></div>
<div class="a" style="left:469.5px;top:605px;width:124.5px;height:14px;overflow:hidden"><div style="font-size:9.33px;line-height:11px;white-space:pre;position:absolute;bottom:0;left:0;color:#000;color:#1515f0;font-weight:bold">РОССИЙСКАЯ ФЕДЕРАЦИЯ</div></div>
<div class="a" style="left:595.5px;top:605px;width:293.5px;height:14px;overflow:hidden"><div style="font-size:9.33px;line-height:11px;white-space:pre;position:absolute;bottom:0;left:0;color:#000;">Паспорт гражданина РФ</div></div>
<div class="a" style="left:890.5px;top:605px;width:45.5px;height:14px;overflow:hidden"><div style="font-size:9.33px;line-height:11px;white-space:pre;position:absolute;bottom:0;left:0;color:#000;">4034</div></div>
<div class="a" style="left:937.5px;top:605px;width:46.5px;height:14px;overflow:hidden"><div style="font-size:9.33px;line-height:11px;white-space:pre;position:absolute;bottom:0;left:0;color:#000;">444666</div></div>
<div class="a" style="left:984px;top:605px;width:72px;height:14px;overflow:hidden"><div style="font-size:9.33px;line-height:11px;white-space:pre;position:absolute;bottom:0;right:0;color:#000;">11/14/2013</div></div>
<div class="a" style="left:1057.5px;top:605px;width:66.5px;height:14px;overflow:hidden"><div style="font-size:9.33px;line-height:11px;white-space:pre;position:absolute;bottom:0;left:0;color:#000;">ОМВД Твери в</div></div>
<div class="a" style="left:1125.5px;top:605px;width:70.5px;height:14px;overflow:hidden"><div style="font-size:9.33px;line-height:11px;white-space:pre;position:absolute;bottom:0;left:0;color:#000;">147-963</div></div>
<div class="a" style="left:1197.5px;top:605px;width:48.5px;height:14px;overflow:hidden"><div style="font-size:9.33px;line-height:11px;white-space:pre;position:absolute;bottom:0;left:0;color:#000;">170000</div></div>
<div class="a" style="left:1247.5px;top:605px;width:81.5px;height:14px;overflow:hidden"><div style="font-size:9.33px;line-height:11px;white-space:pre;position:absolute;bottom:0;left:0;color:#000;">Тверская</div></div>
<div class="a" style="left:1330.5px;top:605px;width:80.5px;height:14px;overflow:hidden"><div style="font-size:9.33px;line-height:11px;white-space:pre;position:absolute;bottom:0;left:0;color:#000;">Тверь</div></div>
<div class="a" style="left:1412.5px;top:605px;width:164.5px;height:14px;overflow:hidden"><div style="font-size:9.33px;line-height:11px;white-space:pre;position:absolute;bottom:0;left:0;color:#000;">Комсомольская</div></div>
<div class="a" style="left:1578.5px;top:605px;width:52.5px;height:14px;overflow:hidden"><div style="font-size:9.33px;line-height:11px;white-space:pre;position:absolute;bottom:0;left:0;color:#000;">18</div></div>
<div class="a" style="left:1688.5px;top:605px;width:37.5px;height:14px;overflow:hidden"><div style="font-size:9.33px;line-height:11px;white-space:pre;position:absolute;bottom:0;left:0;color:#000;">375</div></div>
<div class="a" style="left:1727.5px;top:605px;width:49.5px;height:14px;overflow:hidden"><div style="font-size:9.33px;line-height:11px;white-space:pre;position:absolute;bottom:0;left:0;color:#000;">43234</div></div>
<div class="a" style="left:1778.5px;top:605px;width:40.5px;height:14px;overflow:hidden"><div style="font-size:9.33px;line-height:11px;white-space:pre;position:absolute;bottom:0;left:0;color:#000;">170000</div></div>
<div class="a" style="left:1820.5px;top:605px;width:41.5px;height:14px;overflow:hidden"><div style="font-size:9.33px;line-height:11px;white-space:pre;position:absolute;bottom:0;left:0;color:#000;">Тверская</div></div>
<div class="a" style="left:21.5px;top:619px;width:57.5px;height:14px;overflow:hidden"><div style="font-size:9.33px;line-height:11px;white-space:pre;position:absolute;bottom:0;left:0;color:#000;">1256373</div></div>
<div class="a" style="left:80.5px;top:619px;width:71.5px;height:14px;overflow:hidden"><div style="font-size:9.33px;line-height:11px;white-space:pre;position:absolute;bottom:0;left:0;color:#000;">Емельянова</div></div>
<div class="a" style="left:153.5px;top:619px;width:70.5px;height:14px;overflow:hidden"><div style="font-size:9.33px;line-height:11px;white-space:pre;position:absolute;bottom:0;left:0;color:#000;">Ирина</div></div>
<div class="a" style="left:225.5px;top:619px;width:74.5px;height:14px;overflow:hidden"><div style="font-size:9.33px;line-height:11px;white-space:pre;position:absolute;bottom:0;left:0;color:#000;">Юрьевна</div></div>
<div class="a" style="left:301.5px;top:619px;width:35.5px;height:14px;overflow:hidden"><div style="font-size:9.33px;line-height:11px;white-space:pre;position:absolute;bottom:0;left:0;color:#000;color:#1515f0;font-weight:bold">Ж</div></div>
<div class="a" style="left:337px;top:619px;width:57px;height:14px;overflow:hidden"><div style="font-size:9.33px;line-height:11px;white-space:pre;position:absolute;bottom:0;right:0;color:#000;">4/27/1987</div></div>
<div class="a" style="left:395.5px;top:619px;width:72.5px;height:14px;overflow:hidden"><div style="font-size:9.33px;line-height:11px;white-space:pre;position:absolute;bottom:0;left:0;color:#000;">г.Саратов</div></div>
<div class="a" style="left:469.5px;top:619px;width:124.5px;height:14px;overflow:hidden"><div style="font-size:9.33px;line-height:11px;white-space:pre;position:absolute;bottom:0;left:0;color:#000;color:#1515f0;font-weight:bold">РОССИЙСКАЯ ФЕДЕРАЦИЯ</div></div>
<div class="a" style="left:595.5px;top:619px;width:293.5px;height:14px;overflow:hidden"><div style="font-size:9.33px;line-height:11px;white-space:pre;position:absolute;bottom:0;left:0;color:#000;">Паспорт гражданина РФ</div></div>
<div class="a" style="left:890.5px;top:619px;width:45.5px;height:14px;overflow:hidden"><div style="font-size:9.33px;line-height:11px;white-space:pre;position:absolute;bottom:0;left:0;color:#000;">4535</div></div>
<div class="a" style="left:937.5px;top:619px;width:46.5px;height:14px;overflow:hidden"><div style="font-size:9.33px;line-height:11px;white-space:pre;position:absolute;bottom:0;left:0;color:#000;">555777</div></div>
<div class="a" style="left:984px;top:619px;width:72px;height:14px;overflow:hidden"><div style="font-size:9.33px;line-height:11px;white-space:pre;position:absolute;bottom:0;right:0;color:#000;">6/9/2015</div></div>
<div class="a" style="left:1057.5px;top:619px;width:66.5px;height:14px;overflow:hidden"><div style="font-size:9.33px;line-height:11px;white-space:pre;position:absolute;bottom:0;left:0;color:#000;">ОМВД Саратова</div></div>
<div class="a" style="left:1125.5px;top:619px;width:70.5px;height:14px;overflow:hidden"><div style="font-size:9.33px;line-height:11px;white-space:pre;position:absolute;bottom:0;left:0;color:#000;">258-741</div></div>
<div class="a" style="left:1197.5px;top:619px;width:48.5px;height:14px;overflow:hidden"><div style="font-size:9.33px;line-height:11px;white-space:pre;position:absolute;bottom:0;left:0;color:#000;">410000</div></div>
<div class="a" style="left:1247.5px;top:619px;width:81.5px;height:14px;overflow:hidden"><div style="font-size:9.33px;line-height:11px;white-space:pre;position:absolute;bottom:0;left:0;color:#000;">Саратовская</div></div>
<div class="a" style="left:1330.5px;top:619px;width:80.5px;height:14px;overflow:hidden"><div style="font-size:9.33px;line-height:11px;white-space:pre;position:absolute;bottom:0;left:0;color:#000;">Саратов</div></div>
<div class="a" style="left:1412.5px;top:619px;width:164.5px;height:14px;overflow:hidden"><div style="font-size:9.33px;line-height:11px;white-space:pre;position:absolute;bottom:0;left:0;color:#000;">Волжская</div></div>
<div class="a" style="left:1578.5px;top:619px;width:52.5px;height:14px;overflow:hidden"><div style="font-size:9.33px;line-height:11px;white-space:pre;position:absolute;bottom:0;left:0;color:#000;">30</div></div>
<div class="a" style="left:1688.5px;top:619px;width:37.5px;height:14px;overflow:hidden"><div style="font-size:9.33px;line-height:11px;white-space:pre;position:absolute;bottom:0;left:0;color:#000;">375</div></div>
<div class="a" style="left:1727.5px;top:619px;width:49.5px;height:14px;overflow:hidden"><div style="font-size:9.33px;line-height:11px;white-space:pre;position:absolute;bottom:0;left:0;color:#000;">54345</div></div>
<div class="a" style="left:1778.5px;top:619px;width:40.5px;height:14px;overflow:hidden"><div style="font-size:9.33px;line-height:11px;white-space:pre;position:absolute;bottom:0;left:0;color:#000;">410000</div></div>
<div class="a" style="left:1820.5px;top:619px;width:41.5px;height:14px;overflow:hidden"><div style="font-size:9.33px;line-height:11px;white-space:pre;position:absolute;bottom:0;left:0;color:#000;">Саратовская</div></div>
<div class="a" style="left:21.5px;top:633px;width:57.5px;height:14px;overflow:hidden"><div style="font-size:9.33px;line-height:11px;white-space:pre;position:absolute;bottom:0;left:0;color:#000;">1256374</div></div>
<div class="a" style="left:80.5px;top:633px;width:71.5px;height:14px;overflow:hidden"><div style="font-size:9.33px;line-height:11px;white-space:pre;position:absolute;bottom:0;left:0;color:#000;">Кузьмин</div></div>
<div class="a" style="left:153.5px;top:633px;width:70.5px;height:14px;overflow:hidden"><div style="font-size:9.33px;line-height:11px;white-space:pre;position:absolute;bottom:0;left:0;color:#000;">Алексей</div></div>
<div class="a" style="left:225.5px;top:633px;width:74.5px;height:14px;overflow:hidden"><div style="font-size:9.33px;line-height:11px;white-space:pre;position:absolute;bottom:0;left:0;color:#000;">Павлович</div></div>
<div class="a" style="left:301.5px;top:633px;width:35.5px;height:14px;overflow:hidden"><div style="font-size:9.33px;line-height:11px;white-space:pre;position:absolute;bottom:0;left:0;color:#000;color:#1515f0;font-weight:bold">М</div></div>
<div class="a" style="left:337px;top:633px;width:57px;height:14px;overflow:hidden"><div style="font-size:9.33px;line-height:11px;white-space:pre;position:absolute;bottom:0;right:0;color:#000;">7/11/1976</div></div>
<div class="a" style="left:395.5px;top:633px;width:72.5px;height:14px;overflow:hidden"><div style="font-size:9.33px;line-height:11px;white-space:pre;position:absolute;bottom:0;left:0;color:#000;">г.Вологда</div></div>
<div class="a" style="left:469.5px;top:633px;width:124.5px;height:14px;overflow:hidden"><div style="font-size:9.33px;line-height:11px;white-space:pre;position:absolute;bottom:0;left:0;color:#000;color:#1515f0;font-weight:bold">РОССИЙСКАЯ ФЕДЕРАЦИЯ</div></div>
<div class="a" style="left:595.5px;top:633px;width:293.5px;height:14px;overflow:hidden"><div style="font-size:9.33px;line-height:11px;white-space:pre;position:absolute;bottom:0;left:0;color:#000;">Военный билет солдата</div></div>
<div class="a" style="left:890.5px;top:633px;width:45.5px;height:14px;overflow:hidden"><div style="font-size:9.33px;line-height:11px;white-space:pre;position:absolute;bottom:0;left:0;color:#000;">5036</div></div>
<div class="a" style="left:937.5px;top:633px;width:46.5px;height:14px;overflow:hidden"><div style="font-size:9.33px;line-height:11px;white-space:pre;position:absolute;bottom:0;left:0;color:#000;">666888</div></div>
<div class="a" style="left:984px;top:633px;width:72px;height:14px;overflow:hidden"><div style="font-size:9.33px;line-height:11px;white-space:pre;position:absolute;bottom:0;right:0;color:#000;">1/22/2012</div></div>
<div class="a" style="left:1057px;top:633px;width:139px;height:13px;background:#fff"></div>
<div class="a" style="left:1057.5px;top:633px;width:138.5px;height:14px;overflow:hidden"><div style="font-size:9.33px;line-height:11px;white-space:pre;position:absolute;bottom:0;left:0;color:#000;">ОМВД Вологды в Центральном р-не</div></div>
<div class="a" style="left:1197.5px;top:633px;width:48.5px;height:14px;overflow:hidden"><div style="font-size:9.33px;line-height:11px;white-space:pre;position:absolute;bottom:0;left:0;color:#000;">160000</div></div>
<div class="a" style="left:1247.5px;top:633px;width:81.5px;height:14px;overflow:hidden"><div style="font-size:9.33px;line-height:11px;white-space:pre;position:absolute;bottom:0;left:0;color:#000;">Вологодская</div></div>
<div class="a" style="left:1330.5px;top:633px;width:80.5px;height:14px;overflow:hidden"><div style="font-size:9.33px;line-height:11px;white-space:pre;position:absolute;bottom:0;left:0;color:#000;">Вологда</div></div>
<div class="a" style="left:1412.5px;top:633px;width:164.5px;height:14px;overflow:hidden"><div style="font-size:9.33px;line-height:11px;white-space:pre;position:absolute;bottom:0;left:0;color:#000;">Советская</div></div>
<div class="a" style="left:1578.5px;top:633px;width:52.5px;height:14px;overflow:hidden"><div style="font-size:9.33px;line-height:11px;white-space:pre;position:absolute;bottom:0;left:0;color:#000;">22</div></div>
<div class="a" style="left:1688.5px;top:633px;width:37.5px;height:14px;overflow:hidden"><div style="font-size:9.33px;line-height:11px;white-space:pre;position:absolute;bottom:0;left:0;color:#000;">375</div></div>
<div class="a" style="left:1727.5px;top:633px;width:49.5px;height:14px;overflow:hidden"><div style="font-size:9.33px;line-height:11px;white-space:pre;position:absolute;bottom:0;left:0;color:#000;">65432</div></div>
<div class="a" style="left:1778.5px;top:633px;width:40.5px;height:14px;overflow:hidden"><div style="font-size:9.33px;line-height:11px;white-space:pre;position:absolute;bottom:0;left:0;color:#000;">160000</div></div>
<div class="a" style="left:1820.5px;top:633px;width:41.5px;height:14px;overflow:hidden"><div style="font-size:9.33px;line-height:11px;white-space:pre;position:absolute;bottom:0;left:0;color:#000;">Вологодская</div></div>
<div class="a" style="left:21.5px;top:647px;width:57.5px;height:14px;overflow:hidden"><div style="font-size:9.33px;line-height:11px;white-space:pre;position:absolute;bottom:0;left:0;color:#000;">1256375</div></div>
<div class="a" style="left:80.5px;top:647px;width:71.5px;height:14px;overflow:hidden"><div style="font-size:9.33px;line-height:11px;white-space:pre;position:absolute;bottom:0;left:0;color:#000;">Тихонова</div></div>
<div class="a" style="left:153.5px;top:647px;width:70.5px;height:14px;overflow:hidden"><div style="font-size:9.33px;line-height:11px;white-space:pre;position:absolute;bottom:0;left:0;color:#000;">Марина</div></div>
<div class="a" style="left:225.5px;top:647px;width:74.5px;height:14px;overflow:hidden"><div style="font-size:9.33px;line-height:11px;white-space:pre;position:absolute;bottom:0;left:0;color:#000;">Сергеевна</div></div>
<div class="a" style="left:301.5px;top:647px;width:35.5px;height:14px;overflow:hidden"><div style="font-size:9.33px;line-height:11px;white-space:pre;position:absolute;bottom:0;left:0;color:#000;color:#1515f0;font-weight:bold">Ж</div></div>
<div class="a" style="left:337px;top:647px;width:57px;height:14px;overflow:hidden"><div style="font-size:9.33px;line-height:11px;white-space:pre;position:absolute;bottom:0;right:0;color:#000;">5/3/1990</div></div>
<div class="a" style="left:395.5px;top:647px;width:72.5px;height:14px;overflow:hidden"><div style="font-size:9.33px;line-height:11px;white-space:pre;position:absolute;bottom:0;left:0;color:#000;">г.Смоленск</div></div>
<div class="a" style="left:469.5px;top:647px;width:124.5px;height:14px;overflow:hidden"><div style="font-size:9.33px;line-height:11px;white-space:pre;position:absolute;bottom:0;left:0;color:#000;color:#1515f0;font-weight:bold">РОССИЙСКАЯ ФЕДЕРАЦИЯ</div></div>
<div class="a" style="left:595.5px;top:647px;width:293.5px;height:14px;overflow:hidden"><div style="font-size:9.33px;line-height:11px;white-space:pre;position:absolute;bottom:0;left:0;color:#000;">Паспорт гражданина РФ</div></div>
<div class="a" style="left:890.5px;top:647px;width:45.5px;height:14px;overflow:hidden"><div style="font-size:9.33px;line-height:11px;white-space:pre;position:absolute;bottom:0;left:0;color:#000;">5537</div></div>
<div class="a" style="left:937.5px;top:647px;width:46.5px;height:14px;overflow:hidden"><div style="font-size:9.33px;line-height:11px;white-space:pre;position:absolute;bottom:0;left:0;color:#000;">777999</div></div>
<div class="a" style="left:984px;top:647px;width:72px;height:14px;overflow:hidden"><div style="font-size:9.33px;line-height:11px;white-space:pre;position:absolute;bottom:0;right:0;color:#000;">8/7/2016</div></div>
<div class="a" style="left:1057.5px;top:647px;width:66.5px;height:14px;overflow:hidden"><div style="font-size:9.33px;line-height:11px;white-space:pre;position:absolute;bottom:0;left:0;color:#000;">ОМВД Смоленска</div></div>
<div class="a" style="left:1125.5px;top:647px;width:70.5px;height:14px;overflow:hidden"><div style="font-size:9.33px;line-height:11px;white-space:pre;position:absolute;bottom:0;left:0;color:#000;">741-258</div></div>
<div class="a" style="left:1197.5px;top:647px;width:48.5px;height:14px;overflow:hidden"><div style="font-size:9.33px;line-height:11px;white-space:pre;position:absolute;bottom:0;left:0;color:#000;">214000</div></div>
<div class="a" style="left:1247.5px;top:647px;width:81.5px;height:14px;overflow:hidden"><div style="font-size:9.33px;line-height:11px;white-space:pre;position:absolute;bottom:0;left:0;color:#000;">Смоленская</div></div>
<div class="a" style="left:1330.5px;top:647px;width:80.5px;height:14px;overflow:hidden"><div style="font-size:9.33px;line-height:11px;white-space:pre;position:absolute;bottom:0;left:0;color:#000;">Смоленск</div></div>
<div class="a" style="left:1412.5px;top:647px;width:164.5px;height:14px;overflow:hidden"><div style="font-size:9.33px;line-height:11px;white-space:pre;position:absolute;bottom:0;left:0;color:#000;">Ленинградская</div></div>
<div class="a" style="left:1578.5px;top:647px;width:52.5px;height:14px;overflow:hidden"><div style="font-size:9.33px;line-height:11px;white-space:pre;position:absolute;bottom:0;left:0;color:#000;">12</div></div>
<div class="a" style="left:1688.5px;top:647px;width:37.5px;height:14px;overflow:hidden"><div style="font-size:9.33px;line-height:11px;white-space:pre;position:absolute;bottom:0;left:0;color:#000;">375</div></div>
<div class="a" style="left:1727.5px;top:647px;width:49.5px;height:14px;overflow:hidden"><div style="font-size:9.33px;line-height:11px;white-space:pre;position:absolute;bottom:0;left:0;color:#000;">76543</div></div>
<div class="a" style="left:1778.5px;top:647px;width:40.5px;height:14px;overflow:hidden"><div style="font-size:9.33px;line-height:11px;white-space:pre;position:absolute;bottom:0;left:0;color:#000;">214000</div></div>
<div class="a" style="left:1820.5px;top:647px;width:41.5px;height:14px;overflow:hidden"><div style="font-size:9.33px;line-height:11px;white-space:pre;position:absolute;bottom:0;left:0;color:#000;">Смоленская</div></div>
<div class="a" style="left:21.5px;top:661px;width:57.5px;height:14px;overflow:hidden"><div style="font-size:9.33px;line-height:11px;white-space:pre;position:absolute;bottom:0;left:0;color:#000;">1256376</div></div>
<div class="a" style="left:80.5px;top:661px;width:71.5px;height:14px;overflow:hidden"><div style="font-size:9.33px;line-height:11px;white-space:pre;position:absolute;bottom:0;left:0;color:#000;">Романов</div></div>
<div class="a" style="left:153.5px;top:661px;width:70.5px;height:14px;overflow:hidden"><div style="font-size:9.33px;line-height:11px;white-space:pre;position:absolute;bottom:0;left:0;color:#000;">Дмитрий</div></div>
<div class="a" style="left:225.5px;top:661px;width:74.5px;height:14px;overflow:hidden"><div style="font-size:9.33px;line-height:11px;white-space:pre;position:absolute;bottom:0;left:0;color:#000;">Николаевич</div></div>
<div class="a" style="left:301.5px;top:661px;width:35.5px;height:14px;overflow:hidden"><div style="font-size:9.33px;line-height:11px;white-space:pre;position:absolute;bottom:0;left:0;color:#000;color:#1515f0;font-weight:bold">М</div></div>
<div class="a" style="left:337px;top:661px;width:57px;height:14px;overflow:hidden"><div style="font-size:9.33px;line-height:11px;white-space:pre;position:absolute;bottom:0;right:0;color:#000;">12/17/1975</div></div>
<div class="a" style="left:395.5px;top:661px;width:72.5px;height:14px;overflow:hidden"><div style="font-size:9.33px;line-height:11px;white-space:pre;position:absolute;bottom:0;left:0;color:#000;">г.Кострома</div></div>
<div class="a" style="left:469.5px;top:661px;width:124.5px;height:14px;overflow:hidden"><div style="font-size:9.33px;line-height:11px;white-space:pre;position:absolute;bottom:0;left:0;color:#000;color:#1515f0;font-weight:bold">РОССИЙСКАЯ ФЕДЕРАЦИЯ</div></div>
<div class="a" style="left:595.5px;top:661px;width:293.5px;height:14px;overflow:hidden"><div style="font-size:9.33px;line-height:11px;white-space:pre;position:absolute;bottom:0;left:0;color:#000;">Военный билет солдата</div></div>
<div class="a" style="left:890.5px;top:661px;width:45.5px;height:14px;overflow:hidden"><div style="font-size:9.33px;line-height:11px;white-space:pre;position:absolute;bottom:0;left:0;color:#000;">6038</div></div>
<div class="a" style="left:937.5px;top:661px;width:46.5px;height:14px;overflow:hidden"><div style="font-size:9.33px;line-height:11px;white-space:pre;position:absolute;bottom:0;left:0;color:#000;">888111</div></div>
<div class="a" style="left:984px;top:661px;width:72px;height:14px;overflow:hidden"><div style="font-size:9.33px;line-height:11px;white-space:pre;position:absolute;bottom:0;right:0;color:#000;">3/1/2011</div></div>
<div class="a" style="left:1057px;top:661px;width:139px;height:13px;background:#fff"></div>
<div class="a" style="left:1057.5px;top:661px;width:138.5px;height:14px;overflow:hidden"><div style="font-size:9.33px;line-height:11px;white-space:pre;position:absolute;bottom:0;left:0;color:#000;">ОМВД Костромы в Ленинском р-не</div></div>
<div class="a" style="left:1197.5px;top:661px;width:48.5px;height:14px;overflow:hidden"><div style="font-size:9.33px;line-height:11px;white-space:pre;position:absolute;bottom:0;left:0;color:#000;">156000</div></div>
<div class="a" style="left:1247.5px;top:661px;width:81.5px;height:14px;overflow:hidden"><div style="font-size:9.33px;line-height:11px;white-space:pre;position:absolute;bottom:0;left:0;color:#000;">Костромская</div></div>
<div class="a" style="left:1330.5px;top:661px;width:80.5px;height:14px;overflow:hidden"><div style="font-size:9.33px;line-height:11px;white-space:pre;position:absolute;bottom:0;left:0;color:#000;">Кострома</div></div>
<div class="a" style="left:1412.5px;top:661px;width:164.5px;height:14px;overflow:hidden"><div style="font-size:9.33px;line-height:11px;white-space:pre;position:absolute;bottom:0;left:0;color:#000;">Гагарина</div></div>
<div class="a" style="left:1578.5px;top:661px;width:52.5px;height:14px;overflow:hidden"><div style="font-size:9.33px;line-height:11px;white-space:pre;position:absolute;bottom:0;left:0;color:#000;">7</div></div>
<div class="a" style="left:1688.5px;top:661px;width:37.5px;height:14px;overflow:hidden"><div style="font-size:9.33px;line-height:11px;white-space:pre;position:absolute;bottom:0;left:0;color:#000;">375</div></div>
<div class="a" style="left:1727.5px;top:661px;width:49.5px;height:14px;overflow:hidden"><div style="font-size:9.33px;line-height:11px;white-space:pre;position:absolute;bottom:0;left:0;color:#000;">87654</div></div>
<div class="a" style="left:1778.5px;top:661px;width:40.5px;height:14px;overflow:hidden"><div style="font-size:9.33px;line-height:11px;white-space:pre;position:absolute;bottom:0;left:0;color:#000;">156000</div></div>
<div class="a" style="left:1820.5px;top:661px;width:41.5px;height:14px;overflow:hidden"><div style="font-size:9.33px;line-height:11px;white-space:pre;position:absolute;bottom:0;left:0;color:#000;">Костромская</div></div>
<div class="a" style="left:21.5px;top:675px;width:57.5px;height:14px;overflow:hidden"><div style="font-size:9.33px;line-height:11px;white-space:pre;position:absolute;bottom:0;left:0;color:#000;">1256377</div></div>
<div class="a" style="left:80.5px;top:675px;width:71.5px;height:14px;overflow:hidden"><div style="font-size:9.33px;line-height:11px;white-space:pre;position:absolute;bottom:0;left:0;color:#000;">Шмидт</div></div>
<div class="a" style="left:153.5px;top:675px;width:70.5px;height:14px;overflow:hidden"><div style="font-size:9.33px;line-height:11px;white-space:pre;position:absolute;bottom:0;left:0;color:#000;">Ольга</div></div>
<div class="a" style="left:225.5px;top:675px;width:74.5px;height:14px;overflow:hidden"><div style="font-size:9.33px;line-height:11px;white-space:pre;position:absolute;bottom:0;left:0;color:#000;">Александровна</div></div>
<div class="a" style="left:301.5px;top:675px;width:35.5px;height:14px;overflow:hidden"><div style="font-size:9.33px;line-height:11px;white-space:pre;position:absolute;bottom:0;left:0;color:#000;color:#1515f0;font-weight:bold">Ж</div></div>
<div class="a" style="left:337px;top:675px;width:57px;height:14px;overflow:hidden"><div style="font-size:9.33px;line-height:11px;white-space:pre;position:absolute;bottom:0;right:0;color:#000;">6/8/1988</div></div>
<div class="a" style="left:395.5px;top:675px;width:72.5px;height:14px;overflow:hidden"><div style="font-size:9.33px;line-height:11px;white-space:pre;position:absolute;bottom:0;left:0;color:#000;">г.Орел</div></div>
<div class="a" style="left:469.5px;top:675px;width:124.5px;height:14px;overflow:hidden"><div style="font-size:9.33px;line-height:11px;white-space:pre;position:absolute;bottom:0;left:0;color:#000;color:#1515f0;font-weight:bold">РОССИЙСКАЯ ФЕДЕРАЦИЯ</div></div>
<div class="a" style="left:595.5px;top:675px;width:293.5px;height:14px;overflow:hidden"><div style="font-size:9.33px;line-height:11px;white-space:pre;position:absolute;bottom:0;left:0;color:#000;">Паспорт гражданина РФ</div></div>
<div class="a" style="left:890.5px;top:675px;width:45.5px;height:14px;overflow:hidden"><div style="font-size:9.33px;line-height:11px;white-space:pre;position:absolute;bottom:0;left:0;color:#000;">6539</div></div>
<div class="a" style="left:937.5px;top:675px;width:46.5px;height:14px;overflow:hidden"><div style="font-size:9.33px;line-height:11px;white-space:pre;position:absolute;bottom:0;left:0;color:#000;">999222</div></div>
<div class="a" style="left:984px;top:675px;width:72px;height:14px;overflow:hidden"><div style="font-size:9.33px;line-height:11px;white-space:pre;position:absolute;bottom:0;right:0;color:#000;">9/14/2014</div></div>
<div class="a" style="left:1057.5px;top:675px;width:66.5px;height:14px;overflow:hidden"><div style="font-size:9.33px;line-height:11px;white-space:pre;position:absolute;bottom:0;left:0;color:#000;">ОМВД Орла в Советском</div></div>
<div class="a" style="left:1125.5px;top:675px;width:70.5px;height:14px;overflow:hidden"><div style="font-size:9.33px;line-height:11px;white-space:pre;position:absolute;bottom:0;left:0;color:#000;">963-147</div></div>
<div class="a" style="left:1197.5px;top:675px;width:48.5px;height:14px;overflow:hidden"><div style="font-size:9.33px;line-height:11px;white-space:pre;position:absolute;bottom:0;left:0;color:#000;">302000</div></div>
<div class="a" style="left:1247.5px;top:675px;width:81.5px;height:14px;overflow:hidden"><div style="font-size:9.33px;line-height:11px;white-space:pre;position:absolute;bottom:0;left:0;color:#000;">Орловская</div></div>
<div class="a" style="left:1330.5px;top:675px;width:80.5px;height:14px;overflow:hidden"><div style="font-size:9.33px;line-height:11px;white-space:pre;position:absolute;bottom:0;left:0;color:#000;">Орел</div></div>
<div class="a" style="left:1412.5px;top:675px;width:164.5px;height:14px;overflow:hidden"><div style="font-size:9.33px;line-height:11px;white-space:pre;position:absolute;bottom:0;left:0;color:#000;">Ленина</div></div>
<div class="a" style="left:1578.5px;top:675px;width:52.5px;height:14px;overflow:hidden"><div style="font-size:9.33px;line-height:11px;white-space:pre;position:absolute;bottom:0;left:0;color:#000;">31</div></div>
<div class="a" style="left:1688.5px;top:675px;width:37.5px;height:14px;overflow:hidden"><div style="font-size:9.33px;line-height:11px;white-space:pre;position:absolute;bottom:0;left:0;color:#000;">375</div></div>
<div class="a" style="left:1727.5px;top:675px;width:49.5px;height:14px;overflow:hidden"><div style="font-size:9.33px;line-height:11px;white-space:pre;position:absolute;bottom:0;left:0;color:#000;">98765</div></div>
<div class="a" style="left:1778.5px;top:675px;width:40.5px;height:14px;overflow:hidden"><div style="font-size:9.33px;line-height:11px;white-space:pre;position:absolute;bottom:0;left:0;color:#000;">302000</div></div>
<div class="a" style="left:1820.5px;top:675px;width:41.5px;height:14px;overflow:hidden"><div style="font-size:9.33px;line-height:11px;white-space:pre;position:absolute;bottom:0;left:0;color:#000;">Орловская</div></div>
<div class="a" style="left:21.5px;top:689px;width:57.5px;height:14px;overflow:hidden"><div style="font-size:9.33px;line-height:11px;white-space:pre;position:absolute;bottom:0;left:0;color:#000;">1256378</div></div>
<div class="a" style="left:80.5px;top:689px;width:71.5px;height:14px;overflow:hidden"><div style="font-size:9.33px;line-height:11px;white-space:pre;position:absolute;bottom:0;left:0;color:#000;">Попов</div></div>
<div class="a" style="left:153.5px;top:689px;width:70.5px;height:14px;overflow:hidden"><div style="font-size:9.33px;line-height:11px;white-space:pre;position:absolute;bottom:0;left:0;color:#000;">Александр</div></div>
<div class="a" style="left:225.5px;top:689px;width:74.5px;height:14px;overflow:hidden"><div style="font-size:9.33px;line-height:11px;white-space:pre;position:absolute;bottom:0;left:0;color:#000;">Игоревич</div></div>
<div class="a" style="left:301.5px;top:689px;width:35.5px;height:14px;overflow:hidden"><div style="font-size:9.33px;line-height:11px;white-space:pre;position:absolute;bottom:0;left:0;color:#000;color:#1515f0;font-weight:bold">М</div></div>
<div class="a" style="left:337px;top:689px;width:57px;height:14px;overflow:hidden"><div style="font-size:9.33px;line-height:11px;white-space:pre;position:absolute;bottom:0;right:0;color:#000;">10/20/1983</div></div>
<div class="a" style="left:395.5px;top:689px;width:72.5px;height:14px;overflow:hidden"><div style="font-size:9.33px;line-height:11px;white-space:pre;position:absolute;bottom:0;left:0;color:#000;">г.Владимир</div></div>
<div class="a" style="left:469.5px;top:689px;width:124.5px;height:14px;overflow:hidden"><div style="font-size:9.33px;line-height:11px;white-space:pre;position:absolute;bottom:0;left:0;color:#000;color:#1515f0;font-weight:bold">РОССИЙСКАЯ ФЕДЕРАЦИЯ</div></div>
<div class="a" style="left:595.5px;top:689px;width:293.5px;height:14px;overflow:hidden"><div style="font-size:9.33px;line-height:11px;white-space:pre;position:absolute;bottom:0;left:0;color:#000;">Паспорт гражданина РФ</div></div>
<div class="a" style="left:890.5px;top:689px;width:45.5px;height:14px;overflow:hidden"><div style="font-size:9.33px;line-height:11px;white-space:pre;position:absolute;bottom:0;left:0;color:#000;">7040</div></div>
<div class="a" style="left:937.5px;top:689px;width:46.5px;height:14px;overflow:hidden"><div style="font-size:9.33px;line-height:11px;white-space:pre;position:absolute;bottom:0;left:0;color:#000;">111333</div></div>
<div class="a" style="left:984px;top:689px;width:72px;height:14px;overflow:hidden"><div style="font-size:9.33px;line-height:11px;white-space:pre;position:absolute;bottom:0;right:0;color:#000;">5/5/2012</div></div>
<div class="a" style="left:1057.5px;top:689px;width:66.5px;height:14px;overflow:hidden"><div style="font-size:9.33px;line-height:11px;white-space:pre;position:absolute;bottom:0;left:0;color:#000;">ОМВД Владимира</div></div>
<div class="a" style="left:1125.5px;top:689px;width:70.5px;height:14px;overflow:hidden"><div style="font-size:9.33px;line-height:11px;white-space:pre;position:absolute;bottom:0;left:0;color:#000;">147-258</div></div>
<div class="a" style="left:1197.5px;top:689px;width:48.5px;height:14px;overflow:hidden"><div style="font-size:9.33px;line-height:11px;white-space:pre;position:absolute;bottom:0;left:0;color:#000;">600000</div></div>
<div class="a" style="left:1247.5px;top:689px;width:81.5px;height:14px;overflow:hidden"><div style="font-size:9.33px;line-height:11px;white-space:pre;position:absolute;bottom:0;left:0;color:#000;">Владимирская</div></div>
<div class="a" style="left:1330.5px;top:689px;width:80.5px;height:14px;overflow:hidden"><div style="font-size:9.33px;line-height:11px;white-space:pre;position:absolute;bottom:0;left:0;color:#000;">Владимир</div></div>
<div class="a" style="left:1412.5px;top:689px;width:164.5px;height:14px;overflow:hidden"><div style="font-size:9.33px;line-height:11px;white-space:pre;position:absolute;bottom:0;left:0;color:#000;">Мира</div></div>
<div class="a" style="left:1578.5px;top:689px;width:52.5px;height:14px;overflow:hidden"><div style="font-size:9.33px;line-height:11px;white-space:pre;position:absolute;bottom:0;left:0;color:#000;">20</div></div>
<div class="a" style="left:1688.5px;top:689px;width:37.5px;height:14px;overflow:hidden"><div style="font-size:9.33px;line-height:11px;white-space:pre;position:absolute;bottom:0;left:0;color:#000;">375</div></div>
<div class="a" style="left:1727.5px;top:689px;width:49.5px;height:14px;overflow:hidden"><div style="font-size:9.33px;line-height:11px;white-space:pre;position:absolute;bottom:0;left:0;color:#000;">65432</div></div>
<div class="a" style="left:1778.5px;top:689px;width:40.5px;height:14px;overflow:hidden"><div style="font-size:9.33px;line-height:11px;white-space:pre;position:absolute;bottom:0;left:0;color:#000;">600000</div></div>
<div class="a" style="left:1820.5px;top:689px;width:41.5px;height:14px;overflow:hidden"><div style="font-size:9.33px;line-height:11px;white-space:pre;position:absolute;bottom:0;left:0;color:#000;">Владимирская</div></div>
<div class="a" style="left:21.5px;top:703px;width:57.5px;height:14px;overflow:hidden"><div style="font-size:9.33px;line-height:11px;white-space:pre;position:absolute;bottom:0;left:0;color:#000;">1256379</div></div>
<div class="a" style="left:80.5px;top:703px;width:71.5px;height:14px;overflow:hidden"><div style="font-size:9.33px;line-height:11px;white-space:pre;position:absolute;bottom:0;left:0;color:#000;">Ершова</div></div>
<div class="a" style="left:153.5px;top:703px;width:70.5px;height:14px;overflow:hidden"><div style="font-size:9.33px;line-height:11px;white-space:pre;position:absolute;bottom:0;left:0;color:#000;">Наталья</div></div>
<div class="a" style="left:225.5px;top:703px;width:74.5px;height:14px;overflow:hidden"><div style="font-size:9.33px;line-height:11px;white-space:pre;position:absolute;bottom:0;left:0;color:#000;">Павловна</div></div>
<div class="a" style="left:301.5px;top:703px;width:35.5px;height:14px;overflow:hidden"><div style="font-size:9.33px;line-height:11px;white-space:pre;position:absolute;bottom:0;left:0;color:#000;color:#1515f0;font-weight:bold">Ж</div></div>
<div class="a" style="left:337px;top:703px;width:57px;height:14px;overflow:hidden"><div style="font-size:9.33px;line-height:11px;white-space:pre;position:absolute;bottom:0;right:0;color:#000;">2/15/1991</div></div>
<div class="a" style="left:395.5px;top:703px;width:72.5px;height:14px;overflow:hidden"><div style="font-size:9.33px;line-height:11px;white-space:pre;position:absolute;bottom:0;left:0;color:#000;">г.Томск</div></div>
<div class="a" style="left:469.5px;top:703px;width:124.5px;height:14px;overflow:hidden"><div style="font-size:9.33px;line-height:11px;white-space:pre;position:absolute;bottom:0;left:0;color:#000;color:#1515f0;font-weight:bold">РОССИЙСКАЯ ФЕДЕРАЦИЯ</div></div>
<div class="a" style="left:595.5px;top:703px;width:293.5px;height:14px;overflow:hidden"><div style="font-size:9.33px;line-height:11px;white-space:pre;position:absolute;bottom:0;left:0;color:#000;">Паспорт гражданина РФ</div></div>
<div class="a" style="left:890.5px;top:703px;width:45.5px;height:14px;overflow:hidden"><div style="font-size:9.33px;line-height:11px;white-space:pre;position:absolute;bottom:0;left:0;color:#000;">7541</div></div>
<div class="a" style="left:937.5px;top:703px;width:46.5px;height:14px;overflow:hidden"><div style="font-size:9.33px;line-height:11px;white-space:pre;position:absolute;bottom:0;left:0;color:#000;">222444</div></div>
<div class="a" style="left:984px;top:703px;width:72px;height:14px;overflow:hidden"><div style="font-size:9.33px;line-height:11px;white-space:pre;position:absolute;bottom:0;right:0;color:#000;">12/22/2015</div></div>
<div class="a" style="left:1057.5px;top:703px;width:66.5px;height:14px;overflow:hidden"><div style="font-size:9.33px;line-height:11px;white-space:pre;position:absolute;bottom:0;left:0;color:#000;">ОМВД Томска в</div></div>
<div class="a" style="left:1125.5px;top:703px;width:70.5px;height:14px;overflow:hidden"><div style="font-size:9.33px;line-height:11px;white-space:pre;position:absolute;bottom:0;left:0;color:#000;">258-369</div></div>
<div class="a" style="left:1197.5px;top:703px;width:48.5px;height:14px;overflow:hidden"><div style="font-size:9.33px;line-height:11px;white-space:pre;position:absolute;bottom:0;left:0;color:#000;">634000</div></div>
<div class="a" style="left:1247.5px;top:703px;width:81.5px;height:14px;overflow:hidden"><div style="font-size:9.33px;line-height:11px;white-space:pre;position:absolute;bottom:0;left:0;color:#000;">Томская</div></div>
<div class="a" style="left:1330.5px;top:703px;width:80.5px;height:14px;overflow:hidden"><div style="font-size:9.33px;line-height:11px;white-space:pre;position:absolute;bottom:0;left:0;color:#000;">Томск</div></div>
<div class="a" style="left:1412.5px;top:703px;width:164.5px;height:14px;overflow:hidden"><div style="font-size:9.33px;line-height:11px;white-space:pre;position:absolute;bottom:0;left:0;color:#000;">Ленина</div></div>
<div class="a" style="left:1578.5px;top:703px;width:52.5px;height:14px;overflow:hidden"><div style="font-size:9.33px;line-height:11px;white-space:pre;position:absolute;bottom:0;left:0;color:#000;">8</div></div>
<div class="a" style="left:1688.5px;top:703px;width:37.5px;height:14px;overflow:hidden"><div style="font-size:9.33px;line-height:11px;white-space:pre;position:absolute;bottom:0;left:0;color:#000;">375</div></div>
<div class="a" style="left:1727.5px;top:703px;width:49.5px;height:14px;overflow:hidden"><div style="font-size:9.33px;line-height:11px;white-space:pre;position:absolute;bottom:0;left:0;color:#000;">76543</div></div>
<div class="a" style="left:1778.5px;top:703px;width:40.5px;height:14px;overflow:hidden"><div style="font-size:9.33px;line-height:11px;white-space:pre;position:absolute;bottom:0;left:0;color:#000;">634000</div></div>
<div class="a" style="left:1820.5px;top:703px;width:41.5px;height:14px;overflow:hidden"><div style="font-size:9.33px;line-height:11px;white-space:pre;position:absolute;bottom:0;left:0;color:#000;">Томская</div></div>
<div class="a" style="left:21.5px;top:717px;width:57.5px;height:14px;overflow:hidden"><div style="font-size:9.33px;line-height:11px;white-space:pre;position:absolute;bottom:0;left:0;color:#000;">1256380</div></div>
<div class="a" style="left:80.5px;top:717px;width:71.5px;height:14px;overflow:hidden"><div style="font-size:9.33px;line-height:11px;white-space:pre;position:absolute;bottom:0;left:0;color:#000;">Коновалов</div></div>
<div class="a" style="left:153.5px;top:717px;width:70.5px;height:14px;overflow:hidden"><div style="font-size:9.33px;line-height:11px;white-space:pre;position:absolute;bottom:0;left:0;color:#000;">Виктор</div></div>
<div class="a" style="left:225.5px;top:717px;width:74.5px;height:14px;overflow:hidden"><div style="font-size:9.33px;line-height:11px;white-space:pre;position:absolute;bottom:0;left:0;color:#000;">Сергеевич</div></div>
<div class="a" style="left:301.5px;top:717px;width:35.5px;height:14px;overflow:hidden"><div style="font-size:9.33px;line-height:11px;white-space:pre;position:absolute;bottom:0;left:0;color:#000;color:#1515f0;font-weight:bold">М</div></div>
<div class="a" style="left:337px;top:717px;width:57px;height:14px;overflow:hidden"><div style="font-size:9.33px;line-height:11px;white-space:pre;position:absolute;bottom:0;right:0;color:#000;">3/29/1977</div></div>
<div class="a" style="left:395.5px;top:717px;width:72.5px;height:14px;overflow:hidden"><div style="font-size:9.33px;line-height:11px;white-space:pre;position:absolute;bottom:0;left:0;color:#000;">г.Калининград</div></div>
<div class="a" style="left:469.5px;top:717px;width:124.5px;height:14px;overflow:hidden"><div style="font-size:9.33px;line-height:11px;white-space:pre;position:absolute;bottom:0;left:0;color:#000;color:#1515f0;font-weight:bold">РОССИЙСКАЯ ФЕДЕРАЦИЯ</div></div>
<div class="a" style="left:595.5px;top:717px;width:293.5px;height:14px;overflow:hidden"><div style="font-size:9.33px;line-height:11px;white-space:pre;position:absolute;bottom:0;left:0;color:#000;">Военный билет солдата</div></div>
<div class="a" style="left:890.5px;top:717px;width:45.5px;height:14px;overflow:hidden"><div style="font-size:9.33px;line-height:11px;white-space:pre;position:absolute;bottom:0;left:0;color:#000;">5742</div></div>
<div class="a" style="left:937.5px;top:717px;width:46.5px;height:14px;overflow:hidden"><div style="font-size:9.33px;line-height:11px;white-space:pre;position:absolute;bottom:0;left:0;color:#000;">333555</div></div>
<div class="a" style="left:984px;top:717px;width:72px;height:14px;overflow:hidden"><div style="font-size:9.33px;line-height:11px;white-space:pre;position:absolute;bottom:0;right:0;color:#000;">7/13/2010</div></div>
<div class="a" style="left:1057px;top:717px;width:139px;height:13px;background:#fff"></div>
<div class="a" style="left:1057.5px;top:717px;width:138.5px;height:14px;overflow:hidden"><div style="font-size:9.33px;line-height:11px;white-space:pre;position:absolute;bottom:0;left:0;color:#000;">ОМВД Калининграда в Центральном</div></div>
<div class="a" style="left:1197.5px;top:717px;width:48.5px;height:14px;overflow:hidden"><div style="font-size:9.33px;line-height:11px;white-space:pre;position:absolute;bottom:0;left:0;color:#000;">236000</div></div>
<div class="a" style="left:1247.5px;top:717px;width:81.5px;height:14px;overflow:hidden"><div style="font-size:9.33px;line-height:11px;white-space:pre;position:absolute;bottom:0;left:0;color:#000;">Калининградская</div></div>
<div class="a" style="left:1330.5px;top:717px;width:80.5px;height:14px;overflow:hidden"><div style="font-size:9.33px;line-height:11px;white-space:pre;position:absolute;bottom:0;left:0;color:#000;">Калининград</div></div>
<div class="a" style="left:1412.5px;top:717px;width:164.5px;height:14px;overflow:hidden"><div style="font-size:9.33px;line-height:11px;white-space:pre;position:absolute;bottom:0;left:0;color:#000;">Ленинский</div></div>
<div class="a" style="left:1578.5px;top:717px;width:52.5px;height:14px;overflow:hidden"><div style="font-size:9.33px;line-height:11px;white-space:pre;position:absolute;bottom:0;left:0;color:#000;">15</div></div>
<div class="a" style="left:1688.5px;top:717px;width:37.5px;height:14px;overflow:hidden"><div style="font-size:9.33px;line-height:11px;white-space:pre;position:absolute;bottom:0;left:0;color:#000;">375</div></div>
<div class="a" style="left:1727.5px;top:717px;width:49.5px;height:14px;overflow:hidden"><div style="font-size:9.33px;line-height:11px;white-space:pre;position:absolute;bottom:0;left:0;color:#000;">87654</div></div>
<div class="a" style="left:1778.5px;top:717px;width:40.5px;height:14px;overflow:hidden"><div style="font-size:9.33px;line-height:11px;white-space:pre;position:absolute;bottom:0;left:0;color:#000;">236000</div></div>
<div class="a" style="left:1820.5px;top:717px;width:41.5px;height:14px;overflow:hidden"><div style="font-size:9.33px;line-height:11px;white-space:pre;position:absolute;bottom:0;left:0;color:#000;">Калининградская</div></div>
<div class="a" style="left:21.5px;top:731px;width:57.5px;height:14px;overflow:hidden"><div style="font-size:9.33px;line-height:11px;white-space:pre;position:absolute;bottom:0;left:0;color:#000;">1256381</div></div>
<div class="a" style="left:80.5px;top:731px;width:71.5px;height:14px;overflow:hidden"><div style="font-size:9.33px;line-height:11px;white-space:pre;position:absolute;bottom:0;left:0;color:#000;">Борисова</div></div>
<div class="a" style="left:153.5px;top:731px;width:70.5px;height:14px;overflow:hidden"><div style="font-size:9.33px;line-height:11px;white-space:pre;position:absolute;bottom:0;left:0;color:#000;">Екатерина</div></div>
<div class="a" style="left:225.5px;top:731px;width:74.5px;height:14px;overflow:hidden"><div style="font-size:9.33px;line-height:11px;white-space:pre;position:absolute;bottom:0;left:0;color:#000;">Юрьевна</div></div>
<div class="a" style="left:301.5px;top:731px;width:35.5px;height:14px;overflow:hidden"><div style="font-size:9.33px;line-height:11px;white-space:pre;position:absolute;bottom:0;left:0;color:#000;color:#1515f0;font-weight:bold">Ж</div></div>
<div class="a" style="left:337px;top:731px;width:57px;height:14px;overflow:hidden"><div style="font-size:9.33px;line-height:11px;white-space:pre;position:absolute;bottom:0;right:0;color:#000;">11/7/1984</div></div>
<div class="a" style="left:395.5px;top:731px;width:72.5px;height:14px;overflow:hidden"><div style="font-size:9.33px;line-height:11px;white-space:pre;position:absolute;bottom:0;left:0;color:#000;">г.Киров</div></div>
<div class="a" style="left:469.5px;top:731px;width:124.5px;height:14px;overflow:hidden"><div style="font-size:9.33px;line-height:11px;white-space:pre;position:absolute;bottom:0;left:0;color:#000;color:#1515f0;font-weight:bold">РОССИЙСКАЯ ФЕДЕРАЦИЯ</div></div>
<div class="a" style="left:595.5px;top:731px;width:293.5px;height:14px;overflow:hidden"><div style="font-size:9.33px;line-height:11px;white-space:pre;position:absolute;bottom:0;left:0;color:#000;">Паспорт гражданина РФ</div></div>
<div class="a" style="left:890.5px;top:731px;width:45.5px;height:14px;overflow:hidden"><div style="font-size:9.33px;line-height:11px;white-space:pre;position:absolute;bottom:0;left:0;color:#000;">6043</div></div>
<div class="a" style="left:937.5px;top:731px;width:46.5px;height:14px;overflow:hidden"><div style="font-size:9.33px;line-height:11px;white-space:pre;position:absolute;bottom:0;left:0;color:#000;">444666</div></div>
<div class="a" style="left:984px;top:731px;width:72px;height:14px;overflow:hidden"><div style="font-size:9.33px;line-height:11px;white-space:pre;position:absolute;bottom:0;right:0;color:#000;">4/28/2013</div></div>
<div class="a" style="left:1057.5px;top:731px;width:66.5px;height:14px;overflow:hidden"><div style="font-size:9.33px;line-height:11px;white-space:pre;position:absolute;bottom:0;left:0;color:#000;">ОМВД Кирова в</div></div>
<div class="a" style="left:1125.5px;top:731px;width:70.5px;height:14px;overflow:hidden"><div style="font-size:9.33px;line-height:11px;white-space:pre;position:absolute;bottom:0;left:0;color:#000;">741-852</div></div>
<div class="a" style="left:1197.5px;top:731px;width:48.5px;height:14px;overflow:hidden"><div style="font-size:9.33px;line-height:11px;white-space:pre;position:absolute;bottom:0;left:0;color:#000;">610000</div></div>
<div class="a" style="left:1247.5px;top:731px;width:81.5px;height:14px;overflow:hidden"><div style="font-size:9.33px;line-height:11px;white-space:pre;position:absolute;bottom:0;left:0;color:#000;">Кировская</div></div>
<div class="a" style="left:1330.5px;top:731px;width:80.5px;height:14px;overflow:hidden"><div style="font-size:9.33px;line-height:11px;white-space:pre;position:absolute;bottom:0;left:0;color:#000;">Киров</div></div>
<div class="a" style="left:1412.5px;top:731px;width:164.5px;height:14px;overflow:hidden"><div style="font-size:9.33px;line-height:11px;white-space:pre;position:absolute;bottom:0;left:0;color:#000;">Советская</div></div>
<div class="a" style="left:1578.5px;top:731px;width:52.5px;height:14px;overflow:hidden"><div style="font-size:9.33px;line-height:11px;white-space:pre;position:absolute;bottom:0;left:0;color:#000;">21</div></div>
<div class="a" style="left:1688.5px;top:731px;width:37.5px;height:14px;overflow:hidden"><div style="font-size:9.33px;line-height:11px;white-space:pre;position:absolute;bottom:0;left:0;color:#000;">375</div></div>
<div class="a" style="left:1727.5px;top:731px;width:49.5px;height:14px;overflow:hidden"><div style="font-size:9.33px;line-height:11px;white-space:pre;position:absolute;bottom:0;left:0;color:#000;">98765</div></div>
<div class="a" style="left:1778.5px;top:731px;width:40.5px;height:14px;overflow:hidden"><div style="font-size:9.33px;line-height:11px;white-space:pre;position:absolute;bottom:0;left:0;color:#000;">610000</div></div>
<div class="a" style="left:1820.5px;top:731px;width:41.5px;height:14px;overflow:hidden"><div style="font-size:9.33px;line-height:11px;white-space:pre;position:absolute;bottom:0;left:0;color:#000;">Кировская</div></div>
<div class="a" style="left:21.5px;top:745px;width:57.5px;height:14px;overflow:hidden"><div style="font-size:9.33px;line-height:11px;white-space:pre;position:absolute;bottom:0;left:0;color:#000;">1256382</div></div>
<div class="a" style="left:80.5px;top:745px;width:71.5px;height:14px;overflow:hidden"><div style="font-size:9.33px;line-height:11px;white-space:pre;position:absolute;bottom:0;left:0;color:#000;">Семёнов</div></div>
<div class="a" style="left:153.5px;top:745px;width:70.5px;height:14px;overflow:hidden"><div style="font-size:9.33px;line-height:11px;white-space:pre;position:absolute;bottom:0;left:0;color:#000;">Олег</div></div>
<div class="a" style="left:225.5px;top:745px;width:74.5px;height:14px;overflow:hidden"><div style="font-size:9.33px;line-height:11px;white-space:pre;position:absolute;bottom:0;left:0;color:#000;">Александрович</div></div>
<div class="a" style="left:301.5px;top:745px;width:35.5px;height:14px;overflow:hidden"><div style="font-size:9.33px;line-height:11px;white-space:pre;position:absolute;bottom:0;left:0;color:#000;color:#1515f0;font-weight:bold">М</div></div>
<div class="a" style="left:337px;top:745px;width:57px;height:14px;overflow:hidden"><div style="font-size:9.33px;line-height:11px;white-space:pre;position:absolute;bottom:0;right:0;color:#000;">6/3/1980</div></div>
<div class="a" style="left:395.5px;top:745px;width:72.5px;height:14px;overflow:hidden"><div style="font-size:9.33px;line-height:11px;white-space:pre;position:absolute;bottom:0;left:0;color:#000;">г.Владивосток</div></div>
<div class="a" style="left:469.5px;top:745px;width:124.5px;height:14px;overflow:hidden"><div style="font-size:9.33px;line-height:11px;white-space:pre;position:absolute;bottom:0;left:0;color:#000;color:#1515f0;font-weight:bold">РЕСПУБЛИКА БУРУНДИ</div></div>
<div class="a" style="left:595.5px;top:745px;width:293.5px;height:14px;overflow:hidden"><div style="font-size:9.33px;line-height:11px;white-space:pre;position:absolute;bottom:0;left:0;color:#000;">Удостоверение личности офицера</div></div>
<div class="a" style="left:890.5px;top:745px;width:45.5px;height:14px;overflow:hidden"><div style="font-size:9.33px;line-height:11px;white-space:pre;position:absolute;bottom:0;left:0;color:#000;">7044</div></div>
<div class="a" style="left:937.5px;top:745px;width:46.5px;height:14px;overflow:hidden"><div style="font-size:9.33px;line-height:11px;white-space:pre;position:absolute;bottom:0;left:0;color:#000;">555777</div></div>
<div class="a" style="left:984px;top:745px;width:72px;height:14px;overflow:hidden"><div style="font-size:9.33px;line-height:11px;white-space:pre;position:absolute;bottom:0;right:0;color:#000;">10/9/2011</div></div>
<div class="a" style="left:1057px;top:745px;width:139px;height:13px;background:#fff"></div>
<div class="a" style="left:1057.5px;top:745px;width:138.5px;height:14px;overflow:hidden"><div style="font-size:9.33px;line-height:11px;white-space:pre;position:absolute;bottom:0;left:0;color:#000;">ОМВД Владивостока в Железнодорожном</div></div>
<div class="a" style="left:1197.5px;top:745px;width:48.5px;height:14px;overflow:hidden"><div style="font-size:9.33px;line-height:11px;white-space:pre;position:absolute;bottom:0;left:0;color:#000;">690000</div></div>
<div class="a" style="left:1247.5px;top:745px;width:81.5px;height:14px;overflow:hidden"><div style="font-size:9.33px;line-height:11px;white-space:pre;position:absolute;bottom:0;left:0;color:#000;">Приморский</div></div>
<div class="a" style="left:1330.5px;top:745px;width:80.5px;height:14px;overflow:hidden"><div style="font-size:9.33px;line-height:11px;white-space:pre;position:absolute;bottom:0;left:0;color:#000;">Владивосток</div></div>
<div class="a" style="left:1412.5px;top:745px;width:164.5px;height:14px;overflow:hidden"><div style="font-size:9.33px;line-height:11px;white-space:pre;position:absolute;bottom:0;left:0;color:#000;">Светланская</div></div>
<div class="a" style="left:1578.5px;top:745px;width:52.5px;height:14px;overflow:hidden"><div style="font-size:9.33px;line-height:11px;white-space:pre;position:absolute;bottom:0;left:0;color:#000;">42</div></div>
<div class="a" style="left:1688.5px;top:745px;width:37.5px;height:14px;overflow:hidden"><div style="font-size:9.33px;line-height:11px;white-space:pre;position:absolute;bottom:0;left:0;color:#000;">375</div></div>
<div class="a" style="left:1727.5px;top:745px;width:49.5px;height:14px;overflow:hidden"><div style="font-size:9.33px;line-height:11px;white-space:pre;position:absolute;bottom:0;left:0;color:#000;">10901</div></div>
<div class="a" style="left:1778.5px;top:745px;width:40.5px;height:14px;overflow:hidden"><div style="font-size:9.33px;line-height:11px;white-space:pre;position:absolute;bottom:0;left:0;color:#000;">690000</div></div>
<div class="a" style="left:1820.5px;top:745px;width:41.5px;height:14px;overflow:hidden"><div style="font-size:9.33px;line-height:11px;white-space:pre;position:absolute;bottom:0;left:0;color:#000;">Приморский</div></div>
<div class="a" style="left:21.5px;top:759px;width:57.5px;height:14px;overflow:hidden"><div style="font-size:9.33px;line-height:11px;white-space:pre;position:absolute;bottom:0;left:0;color:#000;">1256383</div></div>
<div class="a" style="left:80.5px;top:759px;width:71.5px;height:14px;overflow:hidden"><div style="font-size:9.33px;line-height:11px;white-space:pre;position:absolute;bottom:0;left:0;color:#000;">Анисимова</div></div>
<div class="a" style="left:153.5px;top:759px;width:70.5px;height:14px;overflow:hidden"><div style="font-size:9.33px;line-height:11px;white-space:pre;position:absolute;bottom:0;left:0;color:#000;">Татьяна</div></div>
<div class="a" style="left:225.5px;top:759px;width:74.5px;height:14px;overflow:hidden"><div style="font-size:9.33px;line-height:11px;white-space:pre;position:absolute;bottom:0;left:0;color:#000;">Владимировна</div></div>
<div class="a" style="left:301.5px;top:759px;width:35.5px;height:14px;overflow:hidden"><div style="font-size:9.33px;line-height:11px;white-space:pre;position:absolute;bottom:0;left:0;color:#000;color:#1515f0;font-weight:bold">Ж</div></div>
<div class="a" style="left:337px;top:759px;width:57px;height:14px;overflow:hidden"><div style="font-size:9.33px;line-height:11px;white-space:pre;position:absolute;bottom:0;right:0;color:#000;">8/12/1989</div></div>
<div class="a" style="left:395.5px;top:759px;width:72.5px;height:14px;overflow:hidden"><div style="font-size:9.33px;line-height:11px;white-space:pre;position:absolute;bottom:0;left:0;color:#000;">г.Новокузнецк</div></div>
<div class="a" style="left:469.5px;top:759px;width:124.5px;height:14px;overflow:hidden"><div style="font-size:9.33px;line-height:11px;white-space:pre;position:absolute;bottom:0;left:0;color:#000;color:#1515f0;font-weight:bold">РОССИЙСКАЯ ФЕДЕРАЦИЯ</div></div>
<div class="a" style="left:595.5px;top:759px;width:293.5px;height:14px;overflow:hidden"><div style="font-size:9.33px;line-height:11px;white-space:pre;position:absolute;bottom:0;left:0;color:#000;">Паспорт гражданина РФ</div></div>
<div class="a" style="left:890.5px;top:759px;width:45.5px;height:14px;overflow:hidden"><div style="font-size:9.33px;line-height:11px;white-space:pre;position:absolute;bottom:0;left:0;color:#000;">5545</div></div>
<div class="a" style="left:937.5px;top:759px;width:46.5px;height:14px;overflow:hidden"><div style="font-size:9.33px;line-height:11px;white-space:pre;position:absolute;bottom:0;left:0;color:#000;">666888</div></div>
<div class="a" style="left:984px;top:759px;width:72px;height:14px;overflow:hidden"><div style="font-size:9.33px;line-height:11px;white-space:pre;position:absolute;bottom:0;right:0;color:#000;">2/4/2017</div></div>
<div class="a" style="left:1057.5px;top:759px;width:66.5px;height:14px;overflow:hidden"><div style="font-size:9.33px;line-height:11px;white-space:pre;position:absolute;bottom:0;left:0;color:#000;">ОМВД Новокузнецка</div></div>
<div class="a" style="left:1125.5px;top:759px;width:70.5px;height:14px;overflow:hidden"><div style="font-size:9.33px;line-height:11px;white-space:pre;position:absolute;bottom:0;left:0;color:#000;">963-741</div></div>
<div class="a" style="left:1197.5px;top:759px;width:48.5px;height:14px;overflow:hidden"><div style="font-size:9.33px;line-height:11px;white-space:pre;position:absolute;bottom:0;left:0;color:#000;">654000</div></div>
<div class="a" style="left:1247.5px;top:759px;width:81.5px;height:14px;overflow:hidden"><div style="font-size:9.33px;line-height:11px;white-space:pre;position:absolute;bottom:0;left:0;color:#000;">Кемеровская</div></div>
<div class="a" style="left:1330.5px;top:759px;width:80.5px;height:14px;overflow:hidden"><div style="font-size:9.33px;line-height:11px;white-space:pre;position:absolute;bottom:0;left:0;color:#000;">Новокузнецк</div></div>
<div class="a" style="left:1412.5px;top:759px;width:164.5px;height:14px;overflow:hidden"><div style="font-size:9.33px;line-height:11px;white-space:pre;position:absolute;bottom:0;left:0;color:#000;">Баумана</div></div>
<div class="a" style="left:1578.5px;top:759px;width:52.5px;height:14px;overflow:hidden"><div style="font-size:9.33px;line-height:11px;white-space:pre;position:absolute;bottom:0;left:0;color:#000;">5</div></div>
<div class="a" style="left:1688.5px;top:759px;width:37.5px;height:14px;overflow:hidden"><div style="font-size:9.33px;line-height:11px;white-space:pre;position:absolute;bottom:0;left:0;color:#000;">375</div></div>
<div class="a" style="left:1727.5px;top:759px;width:49.5px;height:14px;overflow:hidden"><div style="font-size:9.33px;line-height:11px;white-space:pre;position:absolute;bottom:0;left:0;color:#000;">21012</div></div>
<div class="a" style="left:1778.5px;top:759px;width:40.5px;height:14px;overflow:hidden"><div style="font-size:9.33px;line-height:11px;white-space:pre;position:absolute;bottom:0;left:0;color:#000;">654000</div></div>
<div class="a" style="left:1820.5px;top:759px;width:41.5px;height:14px;overflow:hidden"><div style="font-size:9.33px;line-height:11px;white-space:pre;position:absolute;bottom:0;left:0;color:#000;">Кемеровская</div></div>
<div class="a" style="left:21.5px;top:773px;width:57.5px;height:14px;overflow:hidden"><div style="font-size:9.33px;line-height:11px;white-space:pre;position:absolute;bottom:0;left:0;color:#000;">1256384</div></div>
<div class="a" style="left:80.5px;top:773px;width:71.5px;height:14px;overflow:hidden"><div style="font-size:9.33px;line-height:11px;white-space:pre;position:absolute;bottom:0;left:0;color:#000;">Крылов</div></div>
<div class="a" style="left:153.5px;top:773px;width:70.5px;height:14px;overflow:hidden"><div style="font-size:9.33px;line-height:11px;white-space:pre;position:absolute;bottom:0;left:0;color:#000;">Виталий</div></div>
<div class="a" style="left:225.5px;top:773px;width:74.5px;height:14px;overflow:hidden"><div style="font-size:9.33px;line-height:11px;white-space:pre;position:absolute;bottom:0;left:0;color:#000;">Петрович</div></div>
<div class="a" style="left:301.5px;top:773px;width:35.5px;height:14px;overflow:hidden"><div style="font-size:9.33px;line-height:11px;white-space:pre;position:absolute;bottom:0;left:0;color:#000;color:#1515f0;font-weight:bold">М</div></div>
<div class="a" style="left:337px;top:773px;width:57px;height:14px;overflow:hidden"><div style="font-size:9.33px;line-height:11px;white-space:pre;position:absolute;bottom:0;right:0;color:#000;">1/21/1979</div></div>
<div class="a" style="left:395.5px;top:773px;width:72.5px;height:14px;overflow:hidden"><div style="font-size:9.33px;line-height:11px;white-space:pre;position:absolute;bottom:0;left:0;color:#000;">г.Балашиха</div></div>
<div class="a" style="left:469.5px;top:773px;width:124.5px;height:14px;overflow:hidden"><div style="font-size:9.33px;line-height:11px;white-space:pre;position:absolute;bottom:0;left:0;color:#000;color:#1515f0;font-weight:bold">РОССИЙСКАЯ ФЕДЕРАЦИЯ</div></div>
<div class="a" style="left:595.5px;top:773px;width:293.5px;height:14px;overflow:hidden"><div style="font-size:9.33px;line-height:11px;white-space:pre;position:absolute;bottom:0;left:0;color:#000;">Военный билет солдата</div></div>
<div class="a" style="left:890.5px;top:773px;width:45.5px;height:14px;overflow:hidden"><div style="font-size:9.33px;line-height:11px;white-space:pre;position:absolute;bottom:0;left:0;color:#000;">4046</div></div>
<div class="a" style="left:937.5px;top:773px;width:46.5px;height:14px;overflow:hidden"><div style="font-size:9.33px;line-height:11px;white-space:pre;position:absolute;bottom:0;left:0;color:#000;">777999</div></div>
<div class="a" style="left:984px;top:773px;width:72px;height:14px;overflow:hidden"><div style="font-size:9.33px;line-height:11px;white-space:pre;position:absolute;bottom:0;right:0;color:#000;">6/15/2011</div></div>
<div class="a" style="left:1057px;top:773px;width:139px;height:13px;background:#fff"></div>
<div class="a" style="left:1057.5px;top:773px;width:138.5px;height:14px;overflow:hidden"><div style="font-size:9.33px;line-height:11px;white-space:pre;position:absolute;bottom:0;left:0;color:#000;">ОМВД Балашихи в Железнодорожном</div></div>
<div class="a" style="left:1197.5px;top:773px;width:48.5px;height:14px;overflow:hidden"><div style="font-size:9.33px;line-height:11px;white-space:pre;position:absolute;bottom:0;left:0;color:#000;">143000</div></div>
<div class="a" style="left:1247.5px;top:773px;width:81.5px;height:14px;overflow:hidden"><div style="font-size:9.33px;line-height:11px;white-space:pre;position:absolute;bottom:0;left:0;color:#000;">Московская</div></div>
<div class="a" style="left:1330.5px;top:773px;width:80.5px;height:14px;overflow:hidden"><div style="font-size:9.33px;line-height:11px;white-space:pre;position:absolute;bottom:0;left:0;color:#000;">Балашиха</div></div>
<div class="a" style="left:1412.5px;top:773px;width:164.5px;height:14px;overflow:hidden"><div style="font-size:9.33px;line-height:11px;white-space:pre;position:absolute;bottom:0;left:0;color:#000;">Советская</div></div>
<div class="a" style="left:1578.5px;top:773px;width:52.5px;height:14px;overflow:hidden"><div style="font-size:9.33px;line-height:11px;white-space:pre;position:absolute;bottom:0;left:0;color:#000;">8</div></div>
<div class="a" style="left:1688.5px;top:773px;width:37.5px;height:14px;overflow:hidden"><div style="font-size:9.33px;line-height:11px;white-space:pre;position:absolute;bottom:0;left:0;color:#000;">375</div></div>
<div class="a" style="left:1727.5px;top:773px;width:49.5px;height:14px;overflow:hidden"><div style="font-size:9.33px;line-height:11px;white-space:pre;position:absolute;bottom:0;left:0;color:#000;">32123</div></div>
<div class="a" style="left:1778.5px;top:773px;width:40.5px;height:14px;overflow:hidden"><div style="font-size:9.33px;line-height:11px;white-space:pre;position:absolute;bottom:0;left:0;color:#000;">143000</div></div>
<div class="a" style="left:1820.5px;top:773px;width:41.5px;height:14px;overflow:hidden"><div style="font-size:9.33px;line-height:11px;white-space:pre;position:absolute;bottom:0;left:0;color:#000;">Московская</div></div>
<div class="a" style="left:21.5px;top:787px;width:57.5px;height:14px;overflow:hidden"><div style="font-size:9.33px;line-height:11px;white-space:pre;position:absolute;bottom:0;left:0;color:#000;">1256385</div></div>
<div class="a" style="left:80.5px;top:787px;width:71.5px;height:14px;overflow:hidden"><div style="font-size:9.33px;line-height:11px;white-space:pre;position:absolute;bottom:0;left:0;color:#000;">Веселова</div></div>
<div class="a" style="left:153.5px;top:787px;width:70.5px;height:14px;overflow:hidden"><div style="font-size:9.33px;line-height:11px;white-space:pre;position:absolute;bottom:0;left:0;color:#000;">Оксана</div></div>
<div class="a" style="left:225.5px;top:787px;width:74.5px;height:14px;overflow:hidden"><div style="font-size:9.33px;line-height:11px;white-space:pre;position:absolute;bottom:0;left:0;color:#000;">Игоревна</div></div>
<div class="a" style="left:301.5px;top:787px;width:35.5px;height:14px;overflow:hidden"><div style="font-size:9.33px;line-height:11px;white-space:pre;position:absolute;bottom:0;left:0;color:#000;color:#1515f0;font-weight:bold">Ж</div></div>
<div class="a" style="left:337px;top:787px;width:57px;height:14px;overflow:hidden"><div style="font-size:9.33px;line-height:11px;white-space:pre;position:absolute;bottom:0;right:0;color:#000;">4/18/1986</div></div>
<div class="a" style="left:395.5px;top:787px;width:72.5px;height:14px;overflow:hidden"><div style="font-size:9.33px;line-height:11px;white-space:pre;position:absolute;bottom:0;left:0;color:#000;">г.Тула</div></div>
<div class="a" style="left:469.5px;top:787px;width:124.5px;height:14px;overflow:hidden"><div style="font-size:9.33px;line-height:11px;white-space:pre;position:absolute;bottom:0;left:0;color:#000;color:#1515f0;font-weight:bold">АЗЕРБАЙДЖАНСКАЯ  РЕСПУБЛИКА</div></div>
<div class="a" style="left:595.5px;top:787px;width:293.5px;height:14px;overflow:hidden"><div style="font-size:9.33px;line-height:11px;white-space:pre;position:absolute;bottom:0;left:0;color:#000;">Военный билет солдата</div></div>
<div class="a" style="left:890.5px;top:787px;width:45.5px;height:14px;overflow:hidden"><div style="font-size:9.33px;line-height:11px;white-space:pre;position:absolute;bottom:0;left:0;color:#000;">5047</div></div>
<div class="a" style="left:937.5px;top:787px;width:46.5px;height:14px;overflow:hidden"><div style="font-size:9.33px;line-height:11px;white-space:pre;position:absolute;bottom:0;left:0;color:#000;">888111</div></div>
<div class="a" style="left:984px;top:787px;width:72px;height:14px;overflow:hidden"><div style="font-size:9.33px;line-height:11px;white-space:pre;position:absolute;bottom:0;right:0;color:#000;">9/8/2014</div></div>
<div class="a" style="left:1057px;top:787px;width:139px;height:13px;background:#fff"></div>
<div class="a" style="left:1057.5px;top:787px;width:138.5px;height:14px;overflow:hidden"><div style="font-size:9.33px;line-height:11px;white-space:pre;position:absolute;bottom:0;left:0;color:#000;">ОМВД Тулы в Советском р-не</div></div>
<div class="a" style="left:1197.5px;top:787px;width:48.5px;height:14px;overflow:hidden"><div style="font-size:9.33px;line-height:11px;white-space:pre;position:absolute;bottom:0;left:0;color:#000;">300000</div></div>
<div class="a" style="left:1247.5px;top:787px;width:81.5px;height:14px;overflow:hidden"><div style="font-size:9.33px;line-height:11px;white-space:pre;position:absolute;bottom:0;left:0;color:#000;">Тульская</div></div>
<div class="a" style="left:1330.5px;top:787px;width:80.5px;height:14px;overflow:hidden"><div style="font-size:9.33px;line-height:11px;white-space:pre;position:absolute;bottom:0;left:0;color:#000;">Тула</div></div>
<div class="a" style="left:1412.5px;top:787px;width:164.5px;height:14px;overflow:hidden"><div style="font-size:9.33px;line-height:11px;white-space:pre;position:absolute;bottom:0;left:0;color:#000;">Ленина</div></div>
<div class="a" style="left:1578.5px;top:787px;width:52.5px;height:14px;overflow:hidden"><div style="font-size:9.33px;line-height:11px;white-space:pre;position:absolute;bottom:0;left:0;color:#000;">15</div></div>
<div class="a" style="left:1688.5px;top:787px;width:37.5px;height:14px;overflow:hidden"><div style="font-size:9.33px;line-height:11px;white-space:pre;position:absolute;bottom:0;left:0;color:#000;">375</div></div>
<div class="a" style="left:1727.5px;top:787px;width:49.5px;height:14px;overflow:hidden"><div style="font-size:9.33px;line-height:11px;white-space:pre;position:absolute;bottom:0;left:0;color:#000;">43234</div></div>
<div class="a" style="left:1778.5px;top:787px;width:40.5px;height:14px;overflow:hidden"><div style="font-size:9.33px;line-height:11px;white-space:pre;position:absolute;bottom:0;left:0;color:#000;">300000</div></div>
<div class="a" style="left:1820.5px;top:787px;width:41.5px;height:14px;overflow:hidden"><div style="font-size:9.33px;line-height:11px;white-space:pre;position:absolute;bottom:0;left:0;color:#000;">Тульская</div></div>
<div class="a" style="left:21.5px;top:801px;width:57.5px;height:14px;overflow:hidden"><div style="font-size:9.33px;line-height:11px;white-space:pre;position:absolute;bottom:0;left:0;color:#000;">1256386</div></div>
<div class="a" style="left:80.5px;top:801px;width:71.5px;height:14px;overflow:hidden"><div style="font-size:9.33px;line-height:11px;white-space:pre;position:absolute;bottom:0;left:0;color:#000;">Зинченко</div></div>
<div class="a" style="left:153.5px;top:801px;width:70.5px;height:14px;overflow:hidden"><div style="font-size:9.33px;line-height:11px;white-space:pre;position:absolute;bottom:0;left:0;color:#000;">Игорь</div></div>
<div class="a" style="left:225.5px;top:801px;width:74.5px;height:14px;overflow:hidden"><div style="font-size:9.33px;line-height:11px;white-space:pre;position:absolute;bottom:0;left:0;color:#000;">Владимирович</div></div>
<div class="a" style="left:301.5px;top:801px;width:35.5px;height:14px;overflow:hidden"><div style="font-size:9.33px;line-height:11px;white-space:pre;position:absolute;bottom:0;left:0;color:#000;color:#1515f0;font-weight:bold">М</div></div>
<div class="a" style="left:337px;top:801px;width:57px;height:14px;overflow:hidden"><div style="font-size:9.33px;line-height:11px;white-space:pre;position:absolute;bottom:0;right:0;color:#000;">11/14/1984</div></div>
<div class="a" style="left:395.5px;top:801px;width:72.5px;height:14px;overflow:hidden"><div style="font-size:9.33px;line-height:11px;white-space:pre;position:absolute;bottom:0;left:0;color:#000;">г.Курск</div></div>
<div class="a" style="left:469.5px;top:801px;width:124.5px;height:14px;overflow:hidden"><div style="font-size:9.33px;line-height:11px;white-space:pre;position:absolute;bottom:0;left:0;color:#000;color:#1515f0;font-weight:bold">РОССИЙСКАЯ ФЕДЕРАЦИЯ</div></div>
<div class="a" style="left:595.5px;top:801px;width:293.5px;height:14px;overflow:hidden"><div style="font-size:9.33px;line-height:11px;white-space:pre;position:absolute;bottom:0;left:0;color:#000;">Паспорт гражданина РФ</div></div>
<div class="a" style="left:890.5px;top:801px;width:45.5px;height:14px;overflow:hidden"><div style="font-size:9.33px;line-height:11px;white-space:pre;position:absolute;bottom:0;left:0;color:#000;">5548</div></div>
<div class="a" style="left:937.5px;top:801px;width:46.5px;height:14px;overflow:hidden"><div style="font-size:9.33px;line-height:11px;white-space:pre;position:absolute;bottom:0;left:0;color:#000;">999222</div></div>
<div class="a" style="left:984px;top:801px;width:72px;height:14px;overflow:hidden"><div style="font-size:9.33px;line-height:11px;white-space:pre;position:absolute;bottom:0;right:0;color:#000;">3/20/2012</div></div>
<div class="a" style="left:1057.5px;top:801px;width:66.5px;height:14px;overflow:hidden"><div style="font-size:9.33px;line-height:11px;white-space:pre;position:absolute;bottom:0;left:0;color:#000;">ОМВД Курска в</div></div>
<div class="a" style="left:1125.5px;top:801px;width:70.5px;height:14px;overflow:hidden"><div style="font-size:9.33px;line-height:11px;white-space:pre;position:absolute;bottom:0;left:0;color:#000;">741-369</div></div>
<div class="a" style="left:1197.5px;top:801px;width:48.5px;height:14px;overflow:hidden"><div style="font-size:9.33px;line-height:11px;white-space:pre;position:absolute;bottom:0;left:0;color:#000;">305000</div></div>
<div class="a" style="left:1247.5px;top:801px;width:81.5px;height:14px;overflow:hidden"><div style="font-size:9.33px;line-height:11px;white-space:pre;position:absolute;bottom:0;left:0;color:#000;">Курская</div></div>
<div class="a" style="left:1330.5px;top:801px;width:80.5px;height:14px;overflow:hidden"><div style="font-size:9.33px;line-height:11px;white-space:pre;position:absolute;bottom:0;left:0;color:#000;">Курск</div></div>
<div class="a" style="left:1412.5px;top:801px;width:164.5px;height:14px;overflow:hidden"><div style="font-size:9.33px;line-height:11px;white-space:pre;position:absolute;bottom:0;left:0;color:#000;">Советская</div></div>
<div class="a" style="left:1578.5px;top:801px;width:52.5px;height:14px;overflow:hidden"><div style="font-size:9.33px;line-height:11px;white-space:pre;position:absolute;bottom:0;left:0;color:#000;">18</div></div>
<div class="a" style="left:1688.5px;top:801px;width:37.5px;height:14px;overflow:hidden"><div style="font-size:9.33px;line-height:11px;white-space:pre;position:absolute;bottom:0;left:0;color:#000;">375</div></div>
<div class="a" style="left:1727.5px;top:801px;width:49.5px;height:14px;overflow:hidden"><div style="font-size:9.33px;line-height:11px;white-space:pre;position:absolute;bottom:0;left:0;color:#000;">54345</div></div>
<div class="a" style="left:1778.5px;top:801px;width:40.5px;height:14px;overflow:hidden"><div style="font-size:9.33px;line-height:11px;white-space:pre;position:absolute;bottom:0;left:0;color:#000;">305000</div></div>
<div class="a" style="left:1820.5px;top:801px;width:41.5px;height:14px;overflow:hidden"><div style="font-size:9.33px;line-height:11px;white-space:pre;position:absolute;bottom:0;left:0;color:#000;">Курская</div></div>
<div class="a" style="left:21.5px;top:815px;width:57.5px;height:14px;overflow:hidden"><div style="font-size:9.33px;line-height:11px;white-space:pre;position:absolute;bottom:0;left:0;color:#000;">1256387</div></div>
<div class="a" style="left:80.5px;top:815px;width:71.5px;height:14px;overflow:hidden"><div style="font-size:9.33px;line-height:11px;white-space:pre;position:absolute;bottom:0;left:0;color:#000;">Павлова</div></div>
<div class="a" style="left:153.5px;top:815px;width:70.5px;height:14px;overflow:hidden"><div style="font-size:9.33px;line-height:11px;white-space:pre;position:absolute;bottom:0;left:0;color:#000;">Светлана</div></div>
<div class="a" style="left:225.5px;top:815px;width:74.5px;height:14px;overflow:hidden"><div style="font-size:9.33px;line-height:11px;white-space:pre;position:absolute;bottom:0;left:0;color:#000;">Владимировна</div></div>
<div class="a" style="left:301.5px;top:815px;width:35.5px;height:14px;overflow:hidden"><div style="font-size:9.33px;line-height:11px;white-space:pre;position:absolute;bottom:0;left:0;color:#000;color:#1515f0;font-weight:bold">Ж</div></div>
<div class="a" style="left:337px;top:815px;width:57px;height:14px;overflow:hidden"><div style="font-size:9.33px;line-height:11px;white-space:pre;position:absolute;bottom:0;right:0;color:#000;">7/23/1987</div></div>
<div class="a" style="left:395.5px;top:815px;width:72.5px;height:14px;overflow:hidden"><div style="font-size:9.33px;line-height:11px;white-space:pre;position:absolute;bottom:0;left:0;color:#000;">г.Астрахань</div></div>
<div class="a" style="left:469.5px;top:815px;width:124.5px;height:14px;overflow:hidden"><div style="font-size:9.33px;line-height:11px;white-space:pre;position:absolute;bottom:0;left:0;color:#000;color:#1515f0;font-weight:bold">РОССИЙСКАЯ ФЕДЕРАЦИЯ</div></div>
<div class="a" style="left:595.5px;top:815px;width:293.5px;height:14px;overflow:hidden"><div style="font-size:9.33px;line-height:11px;white-space:pre;position:absolute;bottom:0;left:0;color:#000;">Паспорт гражданина РФ</div></div>
<div class="a" style="left:890.5px;top:815px;width:45.5px;height:14px;overflow:hidden"><div style="font-size:9.33px;line-height:11px;white-space:pre;position:absolute;bottom:0;left:0;color:#000;">6049</div></div>
<div class="a" style="left:937.5px;top:815px;width:46.5px;height:14px;overflow:hidden"><div style="font-size:9.33px;line-height:11px;white-space:pre;position:absolute;bottom:0;left:0;color:#000;">111333</div></div>
<div class="a" style="left:984px;top:815px;width:72px;height:14px;overflow:hidden"><div style="font-size:9.33px;line-height:11px;white-space:pre;position:absolute;bottom:0;right:0;color:#000;">8/30/2015</div></div>
<div class="a" style="left:1057.5px;top:815px;width:66.5px;height:14px;overflow:hidden"><div style="font-size:9.33px;line-height:11px;white-space:pre;position:absolute;bottom:0;left:0;color:#000;">ОМВД Астрахани</div></div>
<div class="a" style="left:1125.5px;top:815px;width:70.5px;height:14px;overflow:hidden"><div style="font-size:9.33px;line-height:11px;white-space:pre;position:absolute;bottom:0;left:0;color:#000;">852-147</div></div>
<div class="a" style="left:1197.5px;top:815px;width:48.5px;height:14px;overflow:hidden"><div style="font-size:9.33px;line-height:11px;white-space:pre;position:absolute;bottom:0;left:0;color:#000;">414000</div></div>
<div class="a" style="left:1247.5px;top:815px;width:81.5px;height:14px;overflow:hidden"><div style="font-size:9.33px;line-height:11px;white-space:pre;position:absolute;bottom:0;left:0;color:#000;">Астраханская</div></div>
<div class="a" style="left:1330.5px;top:815px;width:80.5px;height:14px;overflow:hidden"><div style="font-size:9.33px;line-height:11px;white-space:pre;position:absolute;bottom:0;left:0;color:#000;">Астрахань</div></div>
<div class="a" style="left:1412.5px;top:815px;width:164.5px;height:14px;overflow:hidden"><div style="font-size:9.33px;line-height:11px;white-space:pre;position:absolute;bottom:0;left:0;color:#000;">Набережная</div></div>
<div class="a" style="left:1578.5px;top:815px;width:52.5px;height:14px;overflow:hidden"><div style="font-size:9.33px;line-height:11px;white-space:pre;position:absolute;bottom:0;left:0;color:#000;">33</div></div>
<div class="a" style="left:1688.5px;top:815px;width:37.5px;height:14px;overflow:hidden"><div style="font-size:9.33px;line-height:11px;white-space:pre;position:absolute;bottom:0;left:0;color:#000;">375</div></div>
<div class="a" style="left:1727.5px;top:815px;width:49.5px;height:14px;overflow:hidden"><div style="font-size:9.33px;line-height:11px;white-space:pre;position:absolute;bottom:0;left:0;color:#000;">65432</div></div>
<div class="a" style="left:1778.5px;top:815px;width:40.5px;height:14px;overflow:hidden"><div style="font-size:9.33px;line-height:11px;white-space:pre;position:absolute;bottom:0;left:0;color:#000;">414000</div></div>
<div class="a" style="left:1820.5px;top:815px;width:41.5px;height:14px;overflow:hidden"><div style="font-size:9.33px;line-height:11px;white-space:pre;position:absolute;bottom:0;left:0;color:#000;">Астраханская</div></div>
<div class="a" style="left:21.5px;top:829px;width:57.5px;height:14px;overflow:hidden"><div style="font-size:9.33px;line-height:11px;white-space:pre;position:absolute;bottom:0;left:0;color:#000;">1256388</div></div>
<div class="a" style="left:80.5px;top:829px;width:71.5px;height:14px;overflow:hidden"><div style="font-size:9.33px;line-height:11px;white-space:pre;position:absolute;bottom:0;left:0;color:#000;">Данилов</div></div>
<div class="a" style="left:153.5px;top:829px;width:70.5px;height:14px;overflow:hidden"><div style="font-size:9.33px;line-height:11px;white-space:pre;position:absolute;bottom:0;left:0;color:#000;">Александр</div></div>
<div class="a" style="left:225.5px;top:829px;width:74.5px;height:14px;overflow:hidden"><div style="font-size:9.33px;line-height:11px;white-space:pre;position:absolute;bottom:0;left:0;color:#000;">Сергеевич</div></div>
<div class="a" style="left:301.5px;top:829px;width:35.5px;height:14px;overflow:hidden"><div style="font-size:9.33px;line-height:11px;white-space:pre;position:absolute;bottom:0;left:0;color:#000;color:#1515f0;font-weight:bold">М</div></div>
<div class="a" style="left:337px;top:829px;width:57px;height:14px;overflow:hidden"><div style="font-size:9.33px;line-height:11px;white-space:pre;position:absolute;bottom:0;right:0;color:#000;">2/16/1978</div></div>
<div class="a" style="left:395.5px;top:829px;width:72.5px;height:14px;overflow:hidden"><div style="font-size:9.33px;line-height:11px;white-space:pre;position:absolute;bottom:0;left:0;color:#000;">г.Воронеж</div></div>
<div class="a" style="left:469.5px;top:829px;width:124.5px;height:14px;overflow:hidden"><div style="font-size:9.33px;line-height:11px;white-space:pre;position:absolute;bottom:0;left:0;color:#000;color:#1515f0;font-weight:bold">РОССИЙСКАЯ ФЕДЕРАЦИЯ</div></div>
<div class="a" style="left:595.5px;top:829px;width:293.5px;height:14px;overflow:hidden"><div style="font-size:9.33px;line-height:11px;white-space:pre;position:absolute;bottom:0;left:0;color:#000;">Военный билет солдата</div></div>
<div class="a" style="left:890.5px;top:829px;width:45.5px;height:14px;overflow:hidden"><div style="font-size:9.33px;line-height:11px;white-space:pre;position:absolute;bottom:0;left:0;color:#000;">6550</div></div>
<div class="a" style="left:937.5px;top:829px;width:46.5px;height:14px;overflow:hidden"><div style="font-size:9.33px;line-height:11px;white-space:pre;position:absolute;bottom:0;left:0;color:#000;">222444</div></div>
<div class="a" style="left:984px;top:829px;width:72px;height:14px;overflow:hidden"><div style="font-size:9.33px;line-height:11px;white-space:pre;position:absolute;bottom:0;right:0;color:#000;">12/12/2011</div></div>
<div class="a" style="left:1057px;top:829px;width:139px;height:13px;background:#fff"></div>
<div class="a" style="left:1057.5px;top:829px;width:138.5px;height:14px;overflow:hidden"><div style="font-size:9.33px;line-height:11px;white-space:pre;position:absolute;bottom:0;left:0;color:#000;">ОМВД Воронежа в Советском р-не</div></div>
<div class="a" style="left:1197.5px;top:829px;width:48.5px;height:14px;overflow:hidden"><div style="font-size:9.33px;line-height:11px;white-space:pre;position:absolute;bottom:0;left:0;color:#000;">394000</div></div>
<div class="a" style="left:1247.5px;top:829px;width:81.5px;height:14px;overflow:hidden"><div style="font-size:9.33px;line-height:11px;white-space:pre;position:absolute;bottom:0;left:0;color:#000;">Воронежская</div></div>
<div class="a" style="left:1330.5px;top:829px;width:80.5px;height:14px;overflow:hidden"><div style="font-size:9.33px;line-height:11px;white-space:pre;position:absolute;bottom:0;left:0;color:#000;">Воронеж</div></div>
<div class="a" style="left:1412.5px;top:829px;width:164.5px;height:14px;overflow:hidden"><div style="font-size:9.33px;line-height:11px;white-space:pre;position:absolute;bottom:0;left:0;color:#000;">Коммунаров</div></div>
<div class="a" style="left:1578.5px;top:829px;width:52.5px;height:14px;overflow:hidden"><div style="font-size:9.33px;line-height:11px;white-space:pre;position:absolute;bottom:0;left:0;color:#000;">10</div></div>
<div class="a" style="left:1688.5px;top:829px;width:37.5px;height:14px;overflow:hidden"><div style="font-size:9.33px;line-height:11px;white-space:pre;position:absolute;bottom:0;left:0;color:#000;">375</div></div>
<div class="a" style="left:1727.5px;top:829px;width:49.5px;height:14px;overflow:hidden"><div style="font-size:9.33px;line-height:11px;white-space:pre;position:absolute;bottom:0;left:0;color:#000;">76543</div></div>
<div class="a" style="left:1778.5px;top:829px;width:40.5px;height:14px;overflow:hidden"><div style="font-size:9.33px;line-height:11px;white-space:pre;position:absolute;bottom:0;left:0;color:#000;">394000</div></div>
<div class="a" style="left:1820.5px;top:829px;width:41.5px;height:14px;overflow:hidden"><div style="font-size:9.33px;line-height:11px;white-space:pre;position:absolute;bottom:0;left:0;color:#000;">Воронежская</div></div>
<div class="a" style="left:21.5px;top:843px;width:57.5px;height:14px;overflow:hidden"><div style="font-size:9.33px;line-height:11px;white-space:pre;position:absolute;bottom:0;left:0;color:#000;">1256389</div></div>
<div class="a" style="left:80.5px;top:843px;width:71.5px;height:14px;overflow:hidden"><div style="font-size:9.33px;line-height:11px;white-space:pre;position:absolute;bottom:0;left:0;color:#000;">Соколова</div></div>
<div class="a" style="left:153.5px;top:843px;width:70.5px;height:14px;overflow:hidden"><div style="font-size:9.33px;line-height:11px;white-space:pre;position:absolute;bottom:0;left:0;color:#000;">Екатерина</div></div>
<div class="a" style="left:225.5px;top:843px;width:74.5px;height:14px;overflow:hidden"><div style="font-size:9.33px;line-height:11px;white-space:pre;position:absolute;bottom:0;left:0;color:#000;">Петровна</div></div>
<div class="a" style="left:301.5px;top:843px;width:35.5px;height:14px;overflow:hidden"><div style="font-size:9.33px;line-height:11px;white-space:pre;position:absolute;bottom:0;left:0;color:#000;color:#1515f0;font-weight:bold">Ж</div></div>
<div class="a" style="left:337px;top:843px;width:57px;height:14px;overflow:hidden"><div style="font-size:9.33px;line-height:11px;white-space:pre;position:absolute;bottom:0;right:0;color:#000;">10/19/1990</div></div>
<div class="a" style="left:395.5px;top:843px;width:72.5px;height:14px;overflow:hidden"><div style="font-size:9.33px;line-height:11px;white-space:pre;position:absolute;bottom:0;left:0;color:#000;">г.Рязань</div></div>
<div class="a" style="left:469.5px;top:843px;width:124.5px;height:14px;overflow:hidden"><div style="font-size:9.33px;line-height:11px;white-space:pre;position:absolute;bottom:0;left:0;color:#000;color:#1515f0;font-weight:bold">РОССИЙСКАЯ ФЕДЕРАЦИЯ</div></div>
<div class="a" style="left:595.5px;top:843px;width:293.5px;height:14px;overflow:hidden"><div style="font-size:9.33px;line-height:11px;white-space:pre;position:absolute;bottom:0;left:0;color:#000;">Паспорт гражданина РФ</div></div>
<div class="a" style="left:890.5px;top:843px;width:45.5px;height:14px;overflow:hidden"><div style="font-size:9.33px;line-height:11px;white-space:pre;position:absolute;bottom:0;left:0;color:#000;">7051</div></div>
<div class="a" style="left:937.5px;top:843px;width:46.5px;height:14px;overflow:hidden"><div style="font-size:9.33px;line-height:11px;white-space:pre;position:absolute;bottom:0;left:0;color:#000;">333555</div></div>
<div class="a" style="left:984px;top:843px;width:72px;height:14px;overflow:hidden"><div style="font-size:9.33px;line-height:11px;white-space:pre;position:absolute;bottom:0;right:0;color:#000;">4/25/2016</div></div>
<div class="a" style="left:1057.5px;top:843px;width:66.5px;height:14px;overflow:hidden"><div style="font-size:9.33px;line-height:11px;white-space:pre;position:absolute;bottom:0;left:0;color:#000;">ОМВД Рязани в</div></div>
<div class="a" style="left:1125.5px;top:843px;width:70.5px;height:14px;overflow:hidden"><div style="font-size:9.33px;line-height:11px;white-space:pre;position:absolute;bottom:0;left:0;color:#000;">147-963</div></div>
<div class="a" style="left:1197.5px;top:843px;width:48.5px;height:14px;overflow:hidden"><div style="font-size:9.33px;line-height:11px;white-space:pre;position:absolute;bottom:0;left:0;color:#000;">390000</div></div>
<div class="a" style="left:1247.5px;top:843px;width:81.5px;height:14px;overflow:hidden"><div style="font-size:9.33px;line-height:11px;white-space:pre;position:absolute;bottom:0;left:0;color:#000;">Рязанская</div></div>
<div class="a" style="left:1330.5px;top:843px;width:80.5px;height:14px;overflow:hidden"><div style="font-size:9.33px;line-height:11px;white-space:pre;position:absolute;bottom:0;left:0;color:#000;">Рязань</div></div>
<div class="a" style="left:1412.5px;top:843px;width:164.5px;height:14px;overflow:hidden"><div style="font-size:9.33px;line-height:11px;white-space:pre;position:absolute;bottom:0;left:0;color:#000;">Ленина</div></div>
<div class="a" style="left:1578.5px;top:843px;width:52.5px;height:14px;overflow:hidden"><div style="font-size:9.33px;line-height:11px;white-space:pre;position:absolute;bottom:0;left:0;color:#000;">22</div></div>
<div class="a" style="left:1688.5px;top:843px;width:37.5px;height:14px;overflow:hidden"><div style="font-size:9.33px;line-height:11px;white-space:pre;position:absolute;bottom:0;left:0;color:#000;">375</div></div>
<div class="a" style="left:1727.5px;top:843px;width:49.5px;height:14px;overflow:hidden"><div style="font-size:9.33px;line-height:11px;white-space:pre;position:absolute;bottom:0;left:0;color:#000;">87654</div></div>
<div class="a" style="left:1778.5px;top:843px;width:40.5px;height:14px;overflow:hidden"><div style="font-size:9.33px;line-height:11px;white-space:pre;position:absolute;bottom:0;left:0;color:#000;">390000</div></div>
<div class="a" style="left:1820.5px;top:843px;width:41.5px;height:14px;overflow:hidden"><div style="font-size:9.33px;line-height:11px;white-space:pre;position:absolute;bottom:0;left:0;color:#000;">Рязанская</div></div>
<div class="a" style="left:21.5px;top:857px;width:57.5px;height:14px;overflow:hidden"><div style="font-size:9.33px;line-height:11px;white-space:pre;position:absolute;bottom:0;left:0;color:#000;">1256390</div></div>
<div class="a" style="left:80.5px;top:857px;width:71.5px;height:14px;overflow:hidden"><div style="font-size:9.33px;line-height:11px;white-space:pre;position:absolute;bottom:0;left:0;color:#000;">Ларионов</div></div>
<div class="a" style="left:153.5px;top:857px;width:70.5px;height:14px;overflow:hidden"><div style="font-size:9.33px;line-height:11px;white-space:pre;position:absolute;bottom:0;left:0;color:#000;">Владимир</div></div>
<div class="a" style="left:225.5px;top:857px;width:74.5px;height:14px;overflow:hidden"><div style="font-size:9.33px;line-height:11px;white-space:pre;position:absolute;bottom:0;left:0;color:#000;">Игоревич</div></div>
<div class="a" style="left:301.5px;top:857px;width:35.5px;height:14px;overflow:hidden"><div style="font-size:9.33px;line-height:11px;white-space:pre;position:absolute;bottom:0;left:0;color:#000;color:#1515f0;font-weight:bold">М</div></div>
<div class="a" style="left:337px;top:857px;width:57px;height:14px;overflow:hidden"><div style="font-size:9.33px;line-height:11px;white-space:pre;position:absolute;bottom:0;right:0;color:#000;">6/28/1975</div></div>
<div class="a" style="left:395.5px;top:857px;width:72.5px;height:14px;overflow:hidden"><div style="font-size:9.33px;line-height:11px;white-space:pre;position:absolute;bottom:0;left:0;color:#000;">г.Белгород</div></div>
<div class="a" style="left:469.5px;top:857px;width:124.5px;height:14px;overflow:hidden"><div style="font-size:9.33px;line-height:11px;white-space:pre;position:absolute;bottom:0;left:0;color:#000;color:#1515f0;font-weight:bold">РОССИЙСКАЯ ФЕДЕРАЦИЯ</div></div>
<div class="a" style="left:595.5px;top:857px;width:293.5px;height:14px;overflow:hidden"><div style="font-size:9.33px;line-height:11px;white-space:pre;position:absolute;bottom:0;left:0;color:#000;">Военный билет солдата</div></div>
<div class="a" style="left:890.5px;top:857px;width:45.5px;height:14px;overflow:hidden"><div style="font-size:9.33px;line-height:11px;white-space:pre;position:absolute;bottom:0;left:0;color:#000;">5552</div></div>
<div class="a" style="left:937.5px;top:857px;width:46.5px;height:14px;overflow:hidden"><div style="font-size:9.33px;line-height:11px;white-space:pre;position:absolute;bottom:0;left:0;color:#000;">444666</div></div>
<div class="a" style="left:984px;top:857px;width:72px;height:14px;overflow:hidden"><div style="font-size:9.33px;line-height:11px;white-space:pre;position:absolute;bottom:0;right:0;color:#000;">2/3/2011</div></div>
<div class="a" style="left:1057px;top:857px;width:139px;height:13px;background:#fff"></div>
<div class="a" style="left:1057.5px;top:857px;width:138.5px;height:14px;overflow:hidden"><div style="font-size:9.33px;line-height:11px;white-space:pre;position:absolute;bottom:0;left:0;color:#000;">ОМВД Белгорода в Ленинском р-не</div></div>
<div class="a" style="left:1197.5px;top:857px;width:48.5px;height:14px;overflow:hidden"><div style="font-size:9.33px;line-height:11px;white-space:pre;position:absolute;bottom:0;left:0;color:#000;">308000</div></div>
<div class="a" style="left:1247.5px;top:857px;width:81.5px;height:14px;overflow:hidden"><div style="font-size:9.33px;line-height:11px;white-space:pre;position:absolute;bottom:0;left:0;color:#000;">Белгородская</div></div>
<div class="a" style="left:1330.5px;top:857px;width:80.5px;height:14px;overflow:hidden"><div style="font-size:9.33px;line-height:11px;white-space:pre;position:absolute;bottom:0;left:0;color:#000;">Белгород</div></div>
<div class="a" style="left:1412.5px;top:857px;width:164.5px;height:14px;overflow:hidden"><div style="font-size:9.33px;line-height:11px;white-space:pre;position:absolute;bottom:0;left:0;color:#000;">Крупской</div></div>
<div class="a" style="left:1578.5px;top:857px;width:52.5px;height:14px;overflow:hidden"><div style="font-size:9.33px;line-height:11px;white-space:pre;position:absolute;bottom:0;left:0;color:#000;">14</div></div>
<div class="a" style="left:1688.5px;top:857px;width:37.5px;height:14px;overflow:hidden"><div style="font-size:9.33px;line-height:11px;white-space:pre;position:absolute;bottom:0;left:0;color:#000;">375</div></div>
<div class="a" style="left:1727.5px;top:857px;width:49.5px;height:14px;overflow:hidden"><div style="font-size:9.33px;line-height:11px;white-space:pre;position:absolute;bottom:0;left:0;color:#000;">98765</div></div>
<div class="a" style="left:1778.5px;top:857px;width:40.5px;height:14px;overflow:hidden"><div style="font-size:9.33px;line-height:11px;white-space:pre;position:absolute;bottom:0;left:0;color:#000;">308000</div></div>
<div class="a" style="left:1820.5px;top:857px;width:41.5px;height:14px;overflow:hidden"><div style="font-size:9.33px;line-height:11px;white-space:pre;position:absolute;bottom:0;left:0;color:#000;">Белгородская</div></div>
<div class="a" style="left:21.5px;top:871px;width:57.5px;height:14px;overflow:hidden"><div style="font-size:9.33px;line-height:11px;white-space:pre;position:absolute;bottom:0;left:0;color:#000;">1256391</div></div>
<div class="a" style="left:80.5px;top:871px;width:71.5px;height:14px;overflow:hidden"><div style="font-size:9.33px;line-height:11px;white-space:pre;position:absolute;bottom:0;left:0;color:#000;">Яковлева</div></div>
<div class="a" style="left:153.5px;top:871px;width:70.5px;height:14px;overflow:hidden"><div style="font-size:9.33px;line-height:11px;white-space:pre;position:absolute;bottom:0;left:0;color:#000;">Анна</div></div>
<div class="a" style="left:225.5px;top:871px;width:74.5px;height:14px;overflow:hidden"><div style="font-size:9.33px;line-height:11px;white-space:pre;position:absolute;bottom:0;left:0;color:#000;">Викторовна</div></div>
<div class="a" style="left:301.5px;top:871px;width:35.5px;height:14px;overflow:hidden"><div style="font-size:9.33px;line-height:11px;white-space:pre;position:absolute;bottom:0;left:0;color:#000;color:#1515f0;font-weight:bold">Ж</div></div>
<div class="a" style="left:337px;top:871px;width:57px;height:14px;overflow:hidden"><div style="font-size:9.33px;line-height:11px;white-space:pre;position:absolute;bottom:0;right:0;color:#000;">8/10/1992</div></div>
<div class="a" style="left:395.5px;top:871px;width:72.5px;height:14px;overflow:hidden"><div style="font-size:9.33px;line-height:11px;white-space:pre;position:absolute;bottom:0;left:0;color:#000;">г.Тула</div></div>
<div class="a" style="left:469.5px;top:871px;width:124.5px;height:14px;overflow:hidden"><div style="font-size:9.33px;line-height:11px;white-space:pre;position:absolute;bottom:0;left:0;color:#000;color:#1515f0;font-weight:bold">РОССИЙСКАЯ ФЕДЕРАЦИЯ</div></div>
<div class="a" style="left:595.5px;top:871px;width:293.5px;height:14px;overflow:hidden"><div style="font-size:9.33px;line-height:11px;white-space:pre;position:absolute;bottom:0;left:0;color:#000;">Паспорт гражданина РФ</div></div>
<div class="a" style="left:890.5px;top:871px;width:45.5px;height:14px;overflow:hidden"><div style="font-size:9.33px;line-height:11px;white-space:pre;position:absolute;bottom:0;left:0;color:#000;">6053</div></div>
<div class="a" style="left:937.5px;top:871px;width:46.5px;height:14px;overflow:hidden"><div style="font-size:9.33px;line-height:11px;white-space:pre;position:absolute;bottom:0;left:0;color:#000;">555777</div></div>
<div class="a" style="left:984px;top:871px;width:72px;height:14px;overflow:hidden"><div style="font-size:9.33px;line-height:11px;white-space:pre;position:absolute;bottom:0;right:0;color:#000;">7/15/2017</div></div>
<div class="a" style="left:1057.5px;top:871px;width:66.5px;height:14px;overflow:hidden"><div style="font-size:9.33px;line-height:11px;white-space:pre;position:absolute;bottom:0;left:0;color:#000;">ОМВД Тулы в Г</div></div>
<div class="a" style="left:1125.5px;top:871px;width:70.5px;height:14px;overflow:hidden"><div style="font-size:9.33px;line-height:11px;white-space:pre;position:absolute;bottom:0;left:0;color:#000;">369-852</div></div>
<div class="a" style="left:1197.5px;top:871px;width:48.5px;height:14px;overflow:hidden"><div style="font-size:9.33px;line-height:11px;white-space:pre;position:absolute;bottom:0;left:0;color:#000;">300000</div></div>
<div class="a" style="left:1247.5px;top:871px;width:81.5px;height:14px;overflow:hidden"><div style="font-size:9.33px;line-height:11px;white-space:pre;position:absolute;bottom:0;left:0;color:#000;">Тульская</div></div>
<div class="a" style="left:1330.5px;top:871px;width:80.5px;height:14px;overflow:hidden"><div style="font-size:9.33px;line-height:11px;white-space:pre;position:absolute;bottom:0;left:0;color:#000;">Тула</div></div>
<div class="a" style="left:1412.5px;top:871px;width:164.5px;height:14px;overflow:hidden"><div style="font-size:9.33px;line-height:11px;white-space:pre;position:absolute;bottom:0;left:0;color:#000;">Пушкина</div></div>
<div class="a" style="left:1578.5px;top:871px;width:52.5px;height:14px;overflow:hidden"><div style="font-size:9.33px;line-height:11px;white-space:pre;position:absolute;bottom:0;left:0;color:#000;">9</div></div>
<div class="a" style="left:1688.5px;top:871px;width:37.5px;height:14px;overflow:hidden"><div style="font-size:9.33px;line-height:11px;white-space:pre;position:absolute;bottom:0;left:0;color:#000;">375</div></div>
<div class="a" style="left:1727.5px;top:871px;width:49.5px;height:14px;overflow:hidden"><div style="font-size:9.33px;line-height:11px;white-space:pre;position:absolute;bottom:0;left:0;color:#000;">65432</div></div>
<div class="a" style="left:1778.5px;top:871px;width:40.5px;height:14px;overflow:hidden"><div style="font-size:9.33px;line-height:11px;white-space:pre;position:absolute;bottom:0;left:0;color:#000;">300000</div></div>
<div class="a" style="left:1820.5px;top:871px;width:41.5px;height:14px;overflow:hidden"><div style="font-size:9.33px;line-height:11px;white-space:pre;position:absolute;bottom:0;left:0;color:#000;">Тульская</div></div>
<div class="a" style="left:21.5px;top:885px;width:57.5px;height:14px;overflow:hidden"><div style="font-size:9.33px;line-height:11px;white-space:pre;position:absolute;bottom:0;left:0;color:#000;">1256392</div></div>
<div class="a" style="left:80.5px;top:885px;width:71.5px;height:14px;overflow:hidden"><div style="font-size:9.33px;line-height:11px;white-space:pre;position:absolute;bottom:0;left:0;color:#000;">Морозов</div></div>
<div class="a" style="left:153.5px;top:885px;width:70.5px;height:14px;overflow:hidden"><div style="font-size:9.33px;line-height:11px;white-space:pre;position:absolute;bottom:0;left:0;color:#000;">Владимир</div></div>
<div class="a" style="left:225.5px;top:885px;width:74.5px;height:14px;overflow:hidden"><div style="font-size:9.33px;line-height:11px;white-space:pre;position:absolute;bottom:0;left:0;color:#000;">Сергеевич</div></div>
<div class="a" style="left:301.5px;top:885px;width:35.5px;height:14px;overflow:hidden"><div style="font-size:9.33px;line-height:11px;white-space:pre;position:absolute;bottom:0;left:0;color:#000;color:#1515f0;font-weight:bold">М</div></div>
<div class="a" style="left:337px;top:885px;width:57px;height:14px;overflow:hidden"><div style="font-size:9.33px;line-height:11px;white-space:pre;position:absolute;bottom:0;right:0;color:#000;">11/22/1979</div></div>
<div class="a" style="left:395.5px;top:885px;width:72.5px;height:14px;overflow:hidden"><div style="font-size:9.33px;line-height:11px;white-space:pre;position:absolute;bottom:0;left:0;color:#000;">г.Вологда</div></div>
<div class="a" style="left:469.5px;top:885px;width:124.5px;height:14px;overflow:hidden"><div style="font-size:9.33px;line-height:11px;white-space:pre;position:absolute;bottom:0;left:0;color:#000;color:#1515f0;font-weight:bold">РОССИЙСКАЯ ФЕДЕРАЦИЯ</div></div>
<div class="a" style="left:595.5px;top:885px;width:293.5px;height:14px;overflow:hidden"><div style="font-size:9.33px;line-height:11px;white-space:pre;position:absolute;bottom:0;left:0;color:#000;">Паспорт гражданина РФ</div></div>
<div class="a" style="left:890.5px;top:885px;width:45.5px;height:14px;overflow:hidden"><div style="font-size:9.33px;line-height:11px;white-space:pre;position:absolute;bottom:0;left:0;color:#000;">6554</div></div>
<div class="a" style="left:937.5px;top:885px;width:46.5px;height:14px;overflow:hidden"><div style="font-size:9.33px;line-height:11px;white-space:pre;position:absolute;bottom:0;left:0;color:#000;">666888</div></div>
<div class="a" style="left:984px;top:885px;width:72px;height:14px;overflow:hidden"><div style="font-size:9.33px;line-height:11px;white-space:pre;position:absolute;bottom:0;right:0;color:#000;">3/1/2012</div></div>
<div class="a" style="left:1057.5px;top:885px;width:66.5px;height:14px;overflow:hidden"><div style="font-size:9.33px;line-height:11px;white-space:pre;position:absolute;bottom:0;left:0;color:#000;">ОМВД Вологды</div></div>
<div class="a" style="left:1125.5px;top:885px;width:70.5px;height:14px;overflow:hidden"><div style="font-size:9.33px;line-height:11px;white-space:pre;position:absolute;bottom:0;left:0;color:#000;">741-963</div></div>
<div class="a" style="left:1197.5px;top:885px;width:48.5px;height:14px;overflow:hidden"><div style="font-size:9.33px;line-height:11px;white-space:pre;position:absolute;bottom:0;left:0;color:#000;">160000</div></div>
<div class="a" style="left:1247.5px;top:885px;width:81.5px;height:14px;overflow:hidden"><div style="font-size:9.33px;line-height:11px;white-space:pre;position:absolute;bottom:0;left:0;color:#000;">Вологодская</div></div>
<div class="a" style="left:1330.5px;top:885px;width:80.5px;height:14px;overflow:hidden"><div style="font-size:9.33px;line-height:11px;white-space:pre;position:absolute;bottom:0;left:0;color:#000;">Вологда</div></div>
<div class="a" style="left:1412.5px;top:885px;width:164.5px;height:14px;overflow:hidden"><div style="font-size:9.33px;line-height:11px;white-space:pre;position:absolute;bottom:0;left:0;color:#000;">Красная</div></div>
<div class="a" style="left:1578.5px;top:885px;width:52.5px;height:14px;overflow:hidden"><div style="font-size:9.33px;line-height:11px;white-space:pre;position:absolute;bottom:0;left:0;color:#000;">14</div></div>
<div class="a" style="left:1688.5px;top:885px;width:37.5px;height:14px;overflow:hidden"><div style="font-size:9.33px;line-height:11px;white-space:pre;position:absolute;bottom:0;left:0;color:#000;">375</div></div>
<div class="a" style="left:1727.5px;top:885px;width:49.5px;height:14px;overflow:hidden"><div style="font-size:9.33px;line-height:11px;white-space:pre;position:absolute;bottom:0;left:0;color:#000;">76543</div></div>
<div class="a" style="left:1778.5px;top:885px;width:40.5px;height:14px;overflow:hidden"><div style="font-size:9.33px;line-height:11px;white-space:pre;position:absolute;bottom:0;left:0;color:#000;">160000</div></div>
<div class="a" style="left:1820.5px;top:885px;width:41.5px;height:14px;overflow:hidden"><div style="font-size:9.33px;line-height:11px;white-space:pre;position:absolute;bottom:0;left:0;color:#000;">Вологодская</div></div>
<div class="a" style="left:21.5px;top:899px;width:57.5px;height:14px;overflow:hidden"><div style="font-size:9.33px;line-height:11px;white-space:pre;position:absolute;bottom:0;left:0;color:#000;">1256393</div></div>
<div class="a" style="left:80.5px;top:899px;width:71.5px;height:14px;overflow:hidden"><div style="font-size:9.33px;line-height:11px;white-space:pre;position:absolute;bottom:0;left:0;color:#000;">Киселева</div></div>
<div class="a" style="left:153.5px;top:899px;width:70.5px;height:14px;overflow:hidden"><div style="font-size:9.33px;line-height:11px;white-space:pre;position:absolute;bottom:0;left:0;color:#000;">Елена</div></div>
<div class="a" style="left:225.5px;top:899px;width:74.5px;height:14px;overflow:hidden"><div style="font-size:9.33px;line-height:11px;white-space:pre;position:absolute;bottom:0;left:0;color:#000;">Павловна</div></div>
<div class="a" style="left:301.5px;top:899px;width:35.5px;height:14px;overflow:hidden"><div style="font-size:9.33px;line-height:11px;white-space:pre;position:absolute;bottom:0;left:0;color:#000;color:#1515f0;font-weight:bold">Ж</div></div>
<div class="a" style="left:337px;top:899px;width:57px;height:14px;overflow:hidden"><div style="font-size:9.33px;line-height:11px;white-space:pre;position:absolute;bottom:0;right:0;color:#000;">12/5/1985</div></div>
<div class="a" style="left:395.5px;top:899px;width:72.5px;height:14px;overflow:hidden"><div style="font-size:9.33px;line-height:11px;white-space:pre;position:absolute;bottom:0;left:0;color:#000;">г.Ижевск</div></div>
<div class="a" style="left:469.5px;top:899px;width:124.5px;height:14px;overflow:hidden"><div style="font-size:9.33px;line-height:11px;white-space:pre;position:absolute;bottom:0;left:0;color:#000;color:#1515f0;font-weight:bold">РОССИЙСКАЯ ФЕДЕРАЦИЯ</div></div>
<div class="a" style="left:595.5px;top:899px;width:293.5px;height:14px;overflow:hidden"><div style="font-size:9.33px;line-height:11px;white-space:pre;position:absolute;bottom:0;left:0;color:#000;">Паспорт гражданина РФ</div></div>
<div class="a" style="left:890.5px;top:899px;width:45.5px;height:14px;overflow:hidden"><div style="font-size:9.33px;line-height:11px;white-space:pre;position:absolute;bottom:0;left:0;color:#000;">7055</div></div>
<div class="a" style="left:937.5px;top:899px;width:46.5px;height:14px;overflow:hidden"><div style="font-size:9.33px;line-height:11px;white-space:pre;position:absolute;bottom:0;left:0;color:#000;">777999</div></div>
<div class="a" style="left:984px;top:899px;width:72px;height:14px;overflow:hidden"><div style="font-size:9.33px;line-height:11px;white-space:pre;position:absolute;bottom:0;right:0;color:#000;">9/20/2014</div></div>
<div class="a" style="left:1057.5px;top:899px;width:66.5px;height:14px;overflow:hidden"><div style="font-size:9.33px;line-height:11px;white-space:pre;position:absolute;bottom:0;left:0;color:#000;">ОМВД Ижевска</div></div>
<div class="a" style="left:1125.5px;top:899px;width:70.5px;height:14px;overflow:hidden"><div style="font-size:9.33px;line-height:11px;white-space:pre;position:absolute;bottom:0;left:0;color:#000;">852-147</div></div>
<div class="a" style="left:1197.5px;top:899px;width:48.5px;height:14px;overflow:hidden"><div style="font-size:9.33px;line-height:11px;white-space:pre;position:absolute;bottom:0;left:0;color:#000;">426000</div></div>
<div class="a" style="left:1247.5px;top:899px;width:81.5px;height:14px;overflow:hidden"><div style="font-size:9.33px;line-height:11px;white-space:pre;position:absolute;bottom:0;left:0;color:#000;">Удмуртия</div></div>
<div class="a" style="left:1330.5px;top:899px;width:80.5px;height:14px;overflow:hidden"><div style="font-size:9.33px;line-height:11px;white-space:pre;position:absolute;bottom:0;left:0;color:#000;">Ижевск</div></div>
<div class="a" style="left:1412.5px;top:899px;width:164.5px;height:14px;overflow:hidden"><div style="font-size:9.33px;line-height:11px;white-space:pre;position:absolute;bottom:0;left:0;color:#000;">Пушкина</div></div>
<div class="a" style="left:1578.5px;top:899px;width:52.5px;height:14px;overflow:hidden"><div style="font-size:9.33px;line-height:11px;white-space:pre;position:absolute;bottom:0;left:0;color:#000;">10</div></div>
<div class="a" style="left:1688.5px;top:899px;width:37.5px;height:14px;overflow:hidden"><div style="font-size:9.33px;line-height:11px;white-space:pre;position:absolute;bottom:0;left:0;color:#000;">375</div></div>
<div class="a" style="left:1727.5px;top:899px;width:49.5px;height:14px;overflow:hidden"><div style="font-size:9.33px;line-height:11px;white-space:pre;position:absolute;bottom:0;left:0;color:#000;">87654</div></div>
<div class="a" style="left:1778.5px;top:899px;width:40.5px;height:14px;overflow:hidden"><div style="font-size:9.33px;line-height:11px;white-space:pre;position:absolute;bottom:0;left:0;color:#000;">426000</div></div>
<div class="a" style="left:1820.5px;top:899px;width:41.5px;height:14px;overflow:hidden"><div style="font-size:9.33px;line-height:11px;white-space:pre;position:absolute;bottom:0;left:0;color:#000;">Удмуртия</div></div>
<div class="a" style="left:21.5px;top:913px;width:57.5px;height:14px;overflow:hidden"><div style="font-size:9.33px;line-height:11px;white-space:pre;position:absolute;bottom:0;left:0;color:#000;">1256394</div></div>
<div class="a" style="left:80.5px;top:913px;width:71.5px;height:14px;overflow:hidden"><div style="font-size:9.33px;line-height:11px;white-space:pre;position:absolute;bottom:0;left:0;color:#000;">Тарасов</div></div>
<div class="a" style="left:153.5px;top:913px;width:70.5px;height:14px;overflow:hidden"><div style="font-size:9.33px;line-height:11px;white-space:pre;position:absolute;bottom:0;left:0;color:#000;">Игорь</div></div>
<div class="a" style="left:225.5px;top:913px;width:74.5px;height:14px;overflow:hidden"><div style="font-size:9.33px;line-height:11px;white-space:pre;position:absolute;bottom:0;left:0;color:#000;">Александрович</div></div>
<div class="a" style="left:301.5px;top:913px;width:35.5px;height:14px;overflow:hidden"><div style="font-size:9.33px;line-height:11px;white-space:pre;position:absolute;bottom:0;left:0;color:#000;color:#1515f0;font-weight:bold">М</div></div>
<div class="a" style="left:337px;top:913px;width:57px;height:14px;overflow:hidden"><div style="font-size:9.33px;line-height:11px;white-space:pre;position:absolute;bottom:0;right:0;color:#000;">9/14/1980</div></div>
<div class="a" style="left:395.5px;top:913px;width:72.5px;height:14px;overflow:hidden"><div style="font-size:9.33px;line-height:11px;white-space:pre;position:absolute;bottom:0;left:0;color:#000;">г.Новороссийск</div></div>
<div class="a" style="left:469.5px;top:913px;width:124.5px;height:14px;overflow:hidden"><div style="font-size:9.33px;line-height:11px;white-space:pre;position:absolute;bottom:0;left:0;color:#000;color:#1515f0;font-weight:bold">РОССИЙСКАЯ ФЕДЕРАЦИЯ</div></div>
<div class="a" style="left:595.5px;top:913px;width:293.5px;height:14px;overflow:hidden"><div style="font-size:9.33px;line-height:11px;white-space:pre;position:absolute;bottom:0;left:0;color:#000;">Паспорт гражданина РФ</div></div>
<div class="a" style="left:890.5px;top:913px;width:45.5px;height:14px;overflow:hidden"><div style="font-size:9.33px;line-height:11px;white-space:pre;position:absolute;bottom:0;left:0;color:#000;">5556</div></div>
<div class="a" style="left:937.5px;top:913px;width:46.5px;height:14px;overflow:hidden"><div style="font-size:9.33px;line-height:11px;white-space:pre;position:absolute;bottom:0;left:0;color:#000;">888111</div></div>
<div class="a" style="left:984px;top:913px;width:72px;height:14px;overflow:hidden"><div style="font-size:9.33px;line-height:11px;white-space:pre;position:absolute;bottom:0;right:0;color:#000;">12/11/2011</div></div>
<div class="a" style="left:1057.5px;top:913px;width:66.5px;height:14px;overflow:hidden"><div style="font-size:9.33px;line-height:11px;white-space:pre;position:absolute;bottom:0;left:0;color:#000;">ОМВД Новороссийска</div></div>
<div class="a" style="left:1125.5px;top:913px;width:70.5px;height:14px;overflow:hidden"><div style="font-size:9.33px;line-height:11px;white-space:pre;position:absolute;bottom:0;left:0;color:#000;">963-258</div></div>
<div class="a" style="left:1197.5px;top:913px;width:48.5px;height:14px;overflow:hidden"><div style="font-size:9.33px;line-height:11px;white-space:pre;position:absolute;bottom:0;left:0;color:#000;">353000</div></div>
<div class="a" style="left:1247.5px;top:913px;width:81.5px;height:14px;overflow:hidden"><div style="font-size:9.33px;line-height:11px;white-space:pre;position:absolute;bottom:0;left:0;color:#000;">Краснодарский</div></div>
<div class="a" style="left:1330.5px;top:913px;width:80.5px;height:14px;overflow:hidden"><div style="font-size:9.33px;line-height:11px;white-space:pre;position:absolute;bottom:0;left:0;color:#000;">Новороссийск</div></div>
<div class="a" style="left:1412.5px;top:913px;width:164.5px;height:14px;overflow:hidden"><div style="font-size:9.33px;line-height:11px;white-space:pre;position:absolute;bottom:0;left:0;color:#000;">Красная</div></div>
<div class="a" style="left:1578.5px;top:913px;width:52.5px;height:14px;overflow:hidden"><div style="font-size:9.33px;line-height:11px;white-space:pre;position:absolute;bottom:0;left:0;color:#000;">5</div></div>
<div class="a" style="left:1688.5px;top:913px;width:37.5px;height:14px;overflow:hidden"><div style="font-size:9.33px;line-height:11px;white-space:pre;position:absolute;bottom:0;left:0;color:#000;">375</div></div>
<div class="a" style="left:1727.5px;top:913px;width:49.5px;height:14px;overflow:hidden"><div style="font-size:9.33px;line-height:11px;white-space:pre;position:absolute;bottom:0;left:0;color:#000;">98765</div></div>
<div class="a" style="left:1778.5px;top:913px;width:40.5px;height:14px;overflow:hidden"><div style="font-size:9.33px;line-height:11px;white-space:pre;position:absolute;bottom:0;left:0;color:#000;">353000</div></div>
<div class="a" style="left:1820.5px;top:913px;width:41.5px;height:14px;overflow:hidden"><div style="font-size:9.33px;line-height:11px;white-space:pre;position:absolute;bottom:0;left:0;color:#000;">Краснодарский</div></div>
<div class="a" style="left:21.5px;top:927px;width:57.5px;height:14px;overflow:hidden"><div style="font-size:9.33px;line-height:11px;white-space:pre;position:absolute;bottom:0;left:0;color:#000;">1256395</div></div>
<div class="a" style="left:80.5px;top:927px;width:71.5px;height:14px;overflow:hidden"><div style="font-size:9.33px;line-height:11px;white-space:pre;position:absolute;bottom:0;left:0;color:#000;">Лебедева</div></div>
<div class="a" style="left:153.5px;top:927px;width:70.5px;height:14px;overflow:hidden"><div style="font-size:9.33px;line-height:11px;white-space:pre;position:absolute;bottom:0;left:0;color:#000;">Марина</div></div>
<div class="a" style="left:225.5px;top:927px;width:74.5px;height:14px;overflow:hidden"><div style="font-size:9.33px;line-height:11px;white-space:pre;position:absolute;bottom:0;left:0;color:#000;">Анатольевна</div></div>
<div class="a" style="left:301.5px;top:927px;width:35.5px;height:14px;overflow:hidden"><div style="font-size:9.33px;line-height:11px;white-space:pre;position:absolute;bottom:0;left:0;color:#000;color:#1515f0;font-weight:bold">Ж</div></div>
<div class="a" style="left:337px;top:927px;width:57px;height:14px;overflow:hidden"><div style="font-size:9.33px;line-height:11px;white-space:pre;position:absolute;bottom:0;right:0;color:#000;">1/30/1991</div></div>
<div class="a" style="left:395.5px;top:927px;width:72.5px;height:14px;overflow:hidden"><div style="font-size:9.33px;line-height:11px;white-space:pre;position:absolute;bottom:0;left:0;color:#000;">г.Ульяновск</div></div>
<div class="a" style="left:469.5px;top:927px;width:124.5px;height:14px;overflow:hidden"><div style="font-size:9.33px;line-height:11px;white-space:pre;position:absolute;bottom:0;left:0;color:#000;color:#1515f0;font-weight:bold">РОССИЙСКАЯ ФЕДЕРАЦИЯ</div></div>
<div class="a" style="left:595.5px;top:927px;width:293.5px;height:14px;overflow:hidden"><div style="font-size:9.33px;line-height:11px;white-space:pre;position:absolute;bottom:0;left:0;color:#000;">Паспорт гражданина РФ</div></div>
<div class="a" style="left:890.5px;top:927px;width:45.5px;height:14px;overflow:hidden"><div style="font-size:9.33px;line-height:11px;white-space:pre;position:absolute;bottom:0;left:0;color:#000;">6057</div></div>
<div class="a" style="left:937.5px;top:927px;width:46.5px;height:14px;overflow:hidden"><div style="font-size:9.33px;line-height:11px;white-space:pre;position:absolute;bottom:0;left:0;color:#000;">991122</div></div>
<div class="a" style="left:984px;top:927px;width:72px;height:14px;overflow:hidden"><div style="font-size:9.33px;line-height:11px;white-space:pre;position:absolute;bottom:0;right:0;color:#000;">5/28/2015</div></div>
<div class="a" style="left:1057.5px;top:927px;width:66.5px;height:14px;overflow:hidden"><div style="font-size:9.33px;line-height:11px;white-space:pre;position:absolute;bottom:0;left:0;color:#000;">ОМВД Ульяновска</div></div>
<div class="a" style="left:1125.5px;top:927px;width:70.5px;height:14px;overflow:hidden"><div style="font-size:9.33px;line-height:11px;white-space:pre;position:absolute;bottom:0;left:0;color:#000;">741-852</div></div>
<div class="a" style="left:1197.5px;top:927px;width:48.5px;height:14px;overflow:hidden"><div style="font-size:9.33px;line-height:11px;white-space:pre;position:absolute;bottom:0;left:0;color:#000;">432000</div></div>
<div class="a" style="left:1247.5px;top:927px;width:81.5px;height:14px;overflow:hidden"><div style="font-size:9.33px;line-height:11px;white-space:pre;position:absolute;bottom:0;left:0;color:#000;">Ульяновская</div></div>
<div class="a" style="left:1330.5px;top:927px;width:80.5px;height:14px;overflow:hidden"><div style="font-size:9.33px;line-height:11px;white-space:pre;position:absolute;bottom:0;left:0;color:#000;">Ульяновск</div></div>
<div class="a" style="left:1412.5px;top:927px;width:164.5px;height:14px;overflow:hidden"><div style="font-size:9.33px;line-height:11px;white-space:pre;position:absolute;bottom:0;left:0;color:#000;">Ленина</div></div>
<div class="a" style="left:1578.5px;top:927px;width:52.5px;height:14px;overflow:hidden"><div style="font-size:9.33px;line-height:11px;white-space:pre;position:absolute;bottom:0;left:0;color:#000;">27</div></div>
<div class="a" style="left:1688.5px;top:927px;width:37.5px;height:14px;overflow:hidden"><div style="font-size:9.33px;line-height:11px;white-space:pre;position:absolute;bottom:0;left:0;color:#000;">375</div></div>
<div class="a" style="left:1727.5px;top:927px;width:49.5px;height:14px;overflow:hidden"><div style="font-size:9.33px;line-height:11px;white-space:pre;position:absolute;bottom:0;left:0;color:#000;">65432</div></div>
<div class="a" style="left:1778.5px;top:927px;width:40.5px;height:14px;overflow:hidden"><div style="font-size:9.33px;line-height:11px;white-space:pre;position:absolute;bottom:0;left:0;color:#000;">432000</div></div>
<div class="a" style="left:1820.5px;top:927px;width:41.5px;height:14px;overflow:hidden"><div style="font-size:9.33px;line-height:11px;white-space:pre;position:absolute;bottom:0;left:0;color:#000;">Ульяновская</div></div>
<div class="a" style="left:0px;top:983px;width:1920px;height:57px;background:#eceff3"></div>
<div class="a" style="left:0px;top:983px;width:1882px;height:1px;background:#d5d9de"></div>
<div class="a" style="left:1862px;top:243px;width:21px;height:740px;background:#eceff3"></div>
<svg class="a" style="left:1868px;top:248.5px" width="8" height="5" viewBox="0 0 8 5"><path d="M0.7 4.3L4 1 7.3 4.3" fill="none" stroke="#3fae62" stroke-width="1.4"/></svg>
<div class="a" style="left:1868px;top:263px;width:8px;height:16px;background:#8896a5;border-radius:4px"></div>
<svg class="a" style="left:1868px;top:973px" width="8" height="5" viewBox="0 0 8 5"><path d="M0.7 0.7L4 4 7.3 0.7" fill="none" stroke="#3fae62" stroke-width="1.3"/></svg>
<div class="a" style="left:1883px;top:243px;width:36px;height:773px;background:#fff;border:1px solid #e1e5ea;box-sizing:border-box"></div>
<div class="a" style="left:1883px;top:353px;width:36px;height:1px;background:#e1e5ea"></div>
<div class="a" style="left:1883px;top:464px;width:36px;height:1px;background:#e1e5ea"></div>
<div class="a" style="left:1883px;top:594px;width:36px;height:1px;background:#e1e5ea"></div>
<svg class="a" style="left:1893px;top:253px" width="16" height="17" viewBox="0 0 16 17" fill="none" stroke="#5f7282" stroke-width="1.6"><path d="M3 1v15M8 1v15M13 1v15"/><circle cx="3" cy="7" r="1.7" fill="#fff"/><circle cx="8" cy="12" r="1.7" fill="#fff"/><circle cx="13" cy="7" r="1.7" fill="#fff"/></svg>
<div class="a" style="left:1892.5px;top:277px;width:16px;height:60px;"><div style="position:absolute;left:16px;top:0;transform-origin:0 0;transform:rotate(90deg);white-space:nowrap;font-size:12.6px;line-height:16px;color:#222">Свойства</div></div>
<svg class="a" style="left:1893px;top:363px" width="16" height="16" viewBox="0 0 16 16" fill="none" stroke="#5f7282" stroke-width="1.5"><rect x="1" y="1" width="5.5" height="5.5"/><rect x="9.5" y="1" width="5.5" height="5.5"/><rect x="1" y="9.5" width="5.5" height="5.5"/><rect x="9.5" y="9.5" width="5.5" height="5.5"/></svg>
<div class="a" style="left:1893px;top:387px;width:16px;height:60px;"><div style="position:absolute;left:16px;top:0;transform-origin:0 0;transform:rotate(90deg);white-space:nowrap;font-size:13.5px;line-height:16px;color:#6b7378">Сервис</div></div>
<svg class="a" style="left:1893px;top:473px" width="17" height="17" viewBox="0 0 17 17" fill="none" stroke="#5f7282" stroke-width="1.5"><path d="M3 1v15M8 1v15M13 1v6"/><circle cx="3" cy="7" r="1.6" fill="#fff"/><circle cx="8" cy="11" r="1.6" fill="#fff"/><path d="M10 14l5-5 1.5 1.5-5 5h-1.5z" fill="#fff"/></svg>
<div class="a" style="left:1889px;top:497px;width:30px;height:90px;"><div style="position:absolute;left:28px;top:0;transform-origin:0 0;transform:rotate(90deg);white-space:pre;font-size:13.5px;line-height:13px;color:#6b7378">Панель
Пользователя</div></div>
<svg class="a" style="left:32px;top:994px" width="8" height="12" viewBox="0 0 8 12"><path d="M6.5 1L1.5 6l5 5" fill="none" stroke="#a7afb8" stroke-width="1.5"/></svg>
<svg class="a" style="left:64px;top:994px" width="8" height="12" viewBox="0 0 8 12"><path d="M1.5 1l5 5-5 5" fill="none" stroke="#a7afb8" stroke-width="1.5"/></svg>
<div class="a" style="left:86px;top:985.5px;width:144px;height:2.5px;background:#2e9e55"></div>
<div class="t" style="left:100px;top:996px;font-size:12px;line-height:16px;color:#3a9a58">Электронный реестр</div>
<div class="t" style="left:244px;top:996px;font-size:12px;line-height:16px;color:#6b7480">Бумажный реестр</div>
<div class="t" style="left:372px;top:996px;font-size:12px;line-height:16px;color:#6b7480">Дополнительная информация</div>
<div class="a" style="left:578px;top:986px;width:28px;height:28px;background:#e0e4e9;border-radius:3px"></div>
<svg class="a" style="left:585px;top:993px" width="14" height="14" viewBox="0 0 14 14"><path d="M7 1.5v11M1.5 7h11" stroke="#2e9e55" stroke-width="2"/></svg>
<svg class="a" style="left:944px;top:996px" width="6" height="9" viewBox="0 0 6 9"><path d="M5 1L1.5 4.5 5 8" fill="none" stroke="#3fae62" stroke-width="1.3"/></svg>
<div class="a" style="left:957px;top:997px;width:15px;height:8px;background:#8896a5;border-radius:4px"></div>
<svg class="a" style="left:1859px;top:996px" width="6" height="9" viewBox="0 0 6 9"><path d="M1 1l3.5 3.5L1 8" fill="none" stroke="#3fae62" stroke-width="1.3"/></svg>
<div class="t" style="left:1301px;top:1022px;font-size:11.6px;line-height:14px;color:#6b7480">Количество:1</div>
<div class="t" style="left:1387px;top:1022px;font-size:11.6px;line-height:14px;color:#6b7480">Количество чисел:1</div>
<div class="t" style="left:1508px;top:1022px;font-size:11.6px;line-height:14px;color:#6b7480">Сумма:1256347,00</div>
<div class="t" style="left:1621px;top:1022px;font-size:11.6px;line-height:14px;color:#6b7480">Среднее:1256347,00</div>
<div class="a" style="left:1742px;top:1028px;width:9px;height:1.5px;background:#8a929a"></div>
<div class="a" style="left:1759px;top:1025px;width:102px;height:6px;background:#d3d7dc;border-radius:3px"></div>
<div class="a" style="left:1764px;top:1021px;width:13px;height:13px;border-radius:50%;background:#f3f4f6;border:1px solid #b5bcc3;box-sizing:border-box"></div>
<svg class="a" style="left:1867px;top:1022px" width="12" height="12" viewBox="0 0 12 12"><path d="M6 1v10M1 6h10" stroke="#8a929a" stroke-width="1.5"/></svg>
<div class="t" style="left:1887px;top:1022px;font-size:11.6px;line-height:14px;color:#6b7480">70%</div>
</body></html>
